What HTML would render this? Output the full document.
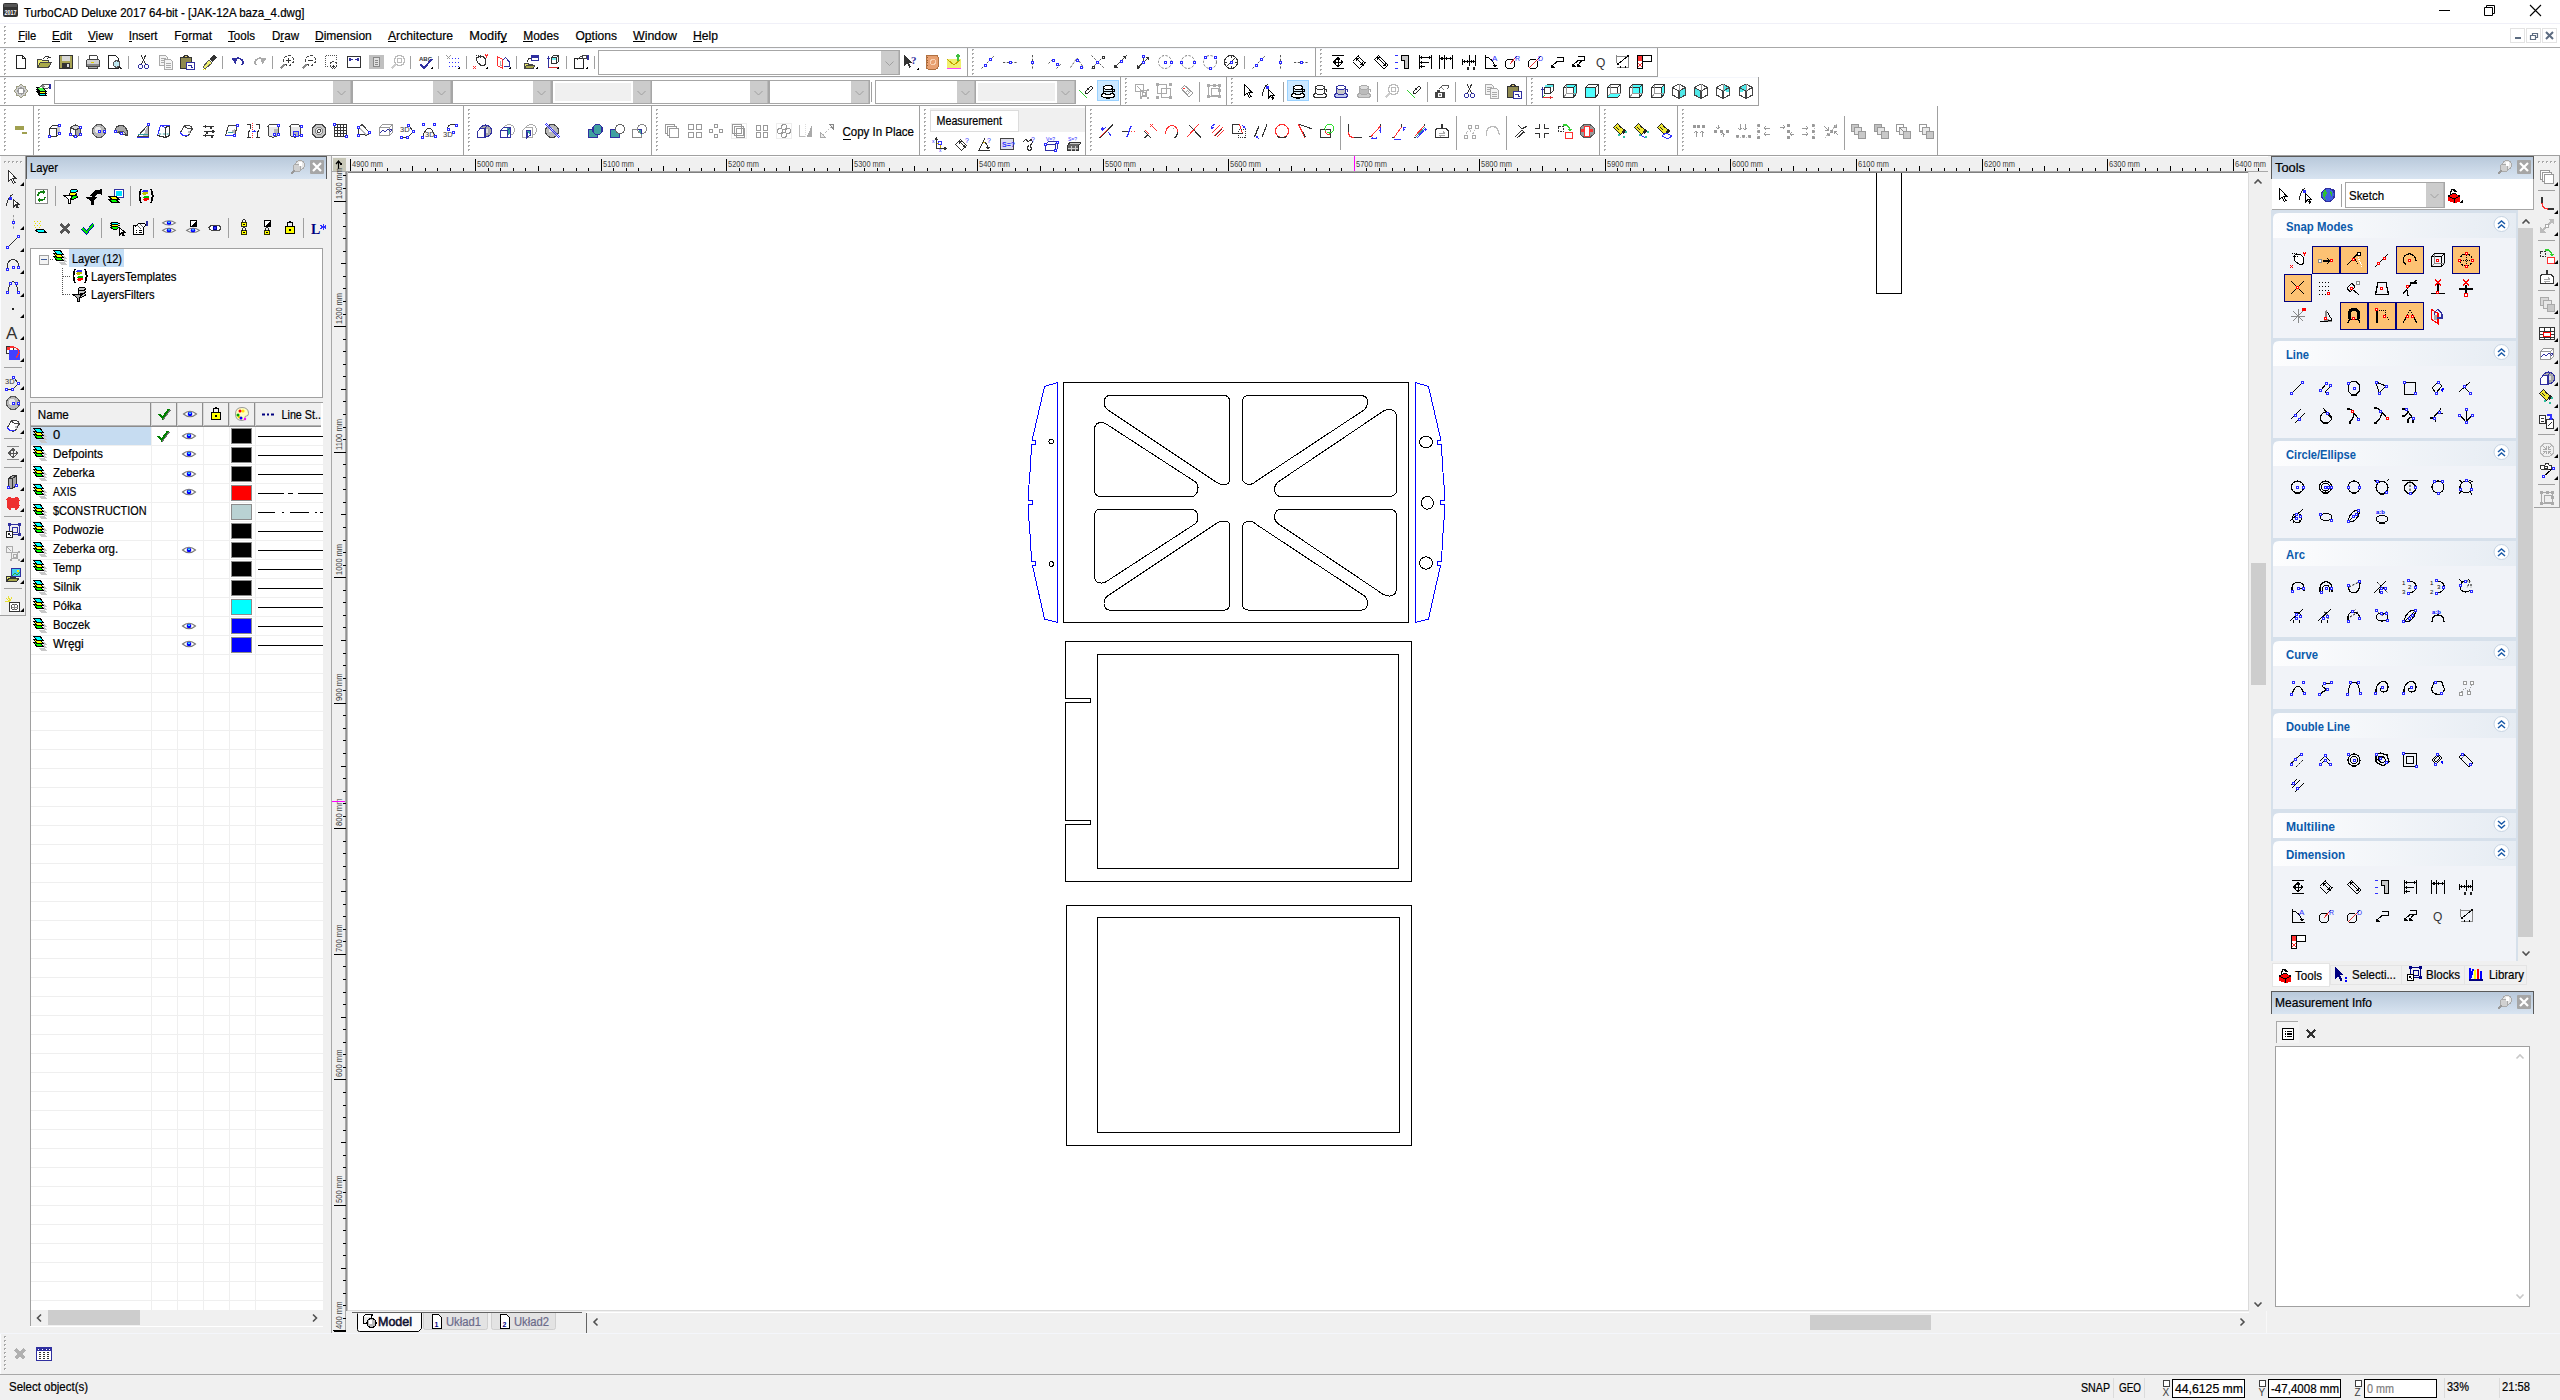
<!DOCTYPE html>
<html><head><meta charset="utf-8"><title>TurboCAD</title>
<style>html,body{margin:0;padding:0;background:#f0f0f0;overflow:hidden}
#app{position:absolute;left:0;top:0;width:2560px;height:1400px;overflow:hidden}
svg text{white-space:pre}</style></head>
<body><div id="app"><svg width="2560" height="1400" viewBox="0 0 2560 1400">
<rect x="0" y="0" width="2560" height="1400" fill="#f0f0f0" />
<rect x="0" y="0" width="2560" height="156" fill="#ffffff" />
<rect x="3" y="3" width="15" height="14" rx="2" fill="#333"/>
<rect x="4" y="4" width="13" height="3" fill="#555"/>
<text x="4.5" y="14.5" font-family="Liberation Sans" font-size="6.5" fill="#fff" font-weight="bold" textLength="12" lengthAdjust="spacingAndGlyphs" >2017</text>
<text x="24" y="16.5" font-family="Liberation Sans" font-size="13" fill="#000" stroke="#000" stroke-width="0.22" textLength="280.5" lengthAdjust="spacingAndGlyphs" >TurboCAD Deluxe 2017 64-bit - [JAK-12A baza_4.dwg]</text>
<rect x="2439" y="10" width="11" height="1" fill="#000" />
<path d="M2484.5 7.5h8v8h-8z M2486.5 7.5v-2h8v8h-2" fill="none" stroke="#000" stroke-width="1"/>
<path d="M2530 5L2541 16M2541 5L2530 16" stroke="#000" stroke-width="1.1"/>
<rect x="0" y="23" width="2560" height="1" fill="#f0f0f8" />
<rect x="4" y="26" width="2" height="2" fill="#a8a8a8"/><rect x="5" y="27" width="1" height="1" fill="#ffffff"/><rect x="4" y="30" width="2" height="2" fill="#a8a8a8"/><rect x="5" y="31" width="1" height="1" fill="#ffffff"/><rect x="4" y="34" width="2" height="2" fill="#a8a8a8"/><rect x="5" y="35" width="1" height="1" fill="#ffffff"/><rect x="4" y="38" width="2" height="2" fill="#a8a8a8"/><rect x="5" y="39" width="1" height="1" fill="#ffffff"/><rect x="4" y="42" width="2" height="2" fill="#a8a8a8"/><rect x="5" y="43" width="1" height="1" fill="#ffffff"/>
<text x="18.25" y="40.3" font-family="Liberation Sans" font-size="13" fill="#000" stroke="#000" stroke-width="0.22" textLength="18.0" lengthAdjust="spacingAndGlyphs" >File</text>
<rect x="18" y="41" width="7" height="1" fill="#000" />
<text x="52" y="40.3" font-family="Liberation Sans" font-size="13" fill="#000" stroke="#000" stroke-width="0.22" textLength="20" lengthAdjust="spacingAndGlyphs" >Edit</text>
<rect x="52" y="41" width="8" height="1" fill="#000" />
<text x="88" y="40.3" font-family="Liberation Sans" font-size="13" fill="#000" stroke="#000" stroke-width="0.22" textLength="25" lengthAdjust="spacingAndGlyphs" >View</text>
<rect x="88" y="41" width="8" height="1" fill="#000" />
<text x="128.75" y="40.3" font-family="Liberation Sans" font-size="13" fill="#000" stroke="#000" stroke-width="0.22" textLength="28.75" lengthAdjust="spacingAndGlyphs" >Insert</text>
<rect x="129" y="41" width="3" height="1" fill="#000" />
<text x="174.25" y="40.3" font-family="Liberation Sans" font-size="13" fill="#000" stroke="#000" stroke-width="0.22" textLength="37.75" lengthAdjust="spacingAndGlyphs" >Format</text>
<rect x="182" y="41" width="6" height="1" fill="#000" />
<text x="228" y="40.3" font-family="Liberation Sans" font-size="13" fill="#000" stroke="#000" stroke-width="0.22" textLength="27" lengthAdjust="spacingAndGlyphs" >Tools</text>
<rect x="228" y="41" width="7" height="1" fill="#000" />
<text x="272" y="40.3" font-family="Liberation Sans" font-size="13" fill="#000" stroke="#000" stroke-width="0.22" textLength="27" lengthAdjust="spacingAndGlyphs" >Draw</text>
<rect x="280" y="41" width="4" height="1" fill="#000" />
<text x="315" y="40.3" font-family="Liberation Sans" font-size="13" fill="#000" stroke="#000" stroke-width="0.22" textLength="56.75" lengthAdjust="spacingAndGlyphs" >Dimension</text>
<rect x="315" y="41" width="9" height="1" fill="#000" />
<text x="388" y="40.3" font-family="Liberation Sans" font-size="13" fill="#000" stroke="#000" stroke-width="0.22" textLength="65" lengthAdjust="spacingAndGlyphs" >Architecture</text>
<rect x="388" y="41" width="8" height="1" fill="#000" />
<text x="469.25" y="40.3" font-family="Liberation Sans" font-size="13" fill="#000" stroke="#000" stroke-width="0.22" textLength="37.75" lengthAdjust="spacingAndGlyphs" >Modify</text>
<rect x="501" y="41" width="6" height="1" fill="#000" />
<text x="523.25" y="40.3" font-family="Liberation Sans" font-size="13" fill="#000" stroke="#000" stroke-width="0.22" textLength="35.75" lengthAdjust="spacingAndGlyphs" >Modes</text>
<rect x="523" y="41" width="10" height="1" fill="#000" />
<text x="575.5" y="40.3" font-family="Liberation Sans" font-size="13" fill="#000" stroke="#000" stroke-width="0.22" textLength="41.5" lengthAdjust="spacingAndGlyphs" >Options</text>
<rect x="585" y="41" width="7" height="1" fill="#000" />
<text x="633" y="40.3" font-family="Liberation Sans" font-size="13" fill="#000" stroke="#000" stroke-width="0.22" textLength="44" lengthAdjust="spacingAndGlyphs" >Window</text>
<rect x="633" y="41" width="12" height="1" fill="#000" />
<text x="693" y="40.3" font-family="Liberation Sans" font-size="13" fill="#000" stroke="#000" stroke-width="0.22" textLength="25" lengthAdjust="spacingAndGlyphs" >Help</text>
<rect x="693" y="41" width="9" height="1" fill="#000" />
<rect x="0" y="47" width="2560" height="1" fill="#a8a8a8" />
<rect x="2510.5" y="28.5" width="14" height="14" fill="#ffffff" stroke="#e3e3e3" stroke-width="1" />
<rect x="2515" y="37" width="6" height="2" fill="#5c6b80" />
<rect x="2526.5" y="28.5" width="14" height="14" fill="#ffffff" stroke="#e3e3e3" stroke-width="1" />
<path d="M2530.5 35.5h5v4h-5z M2532.5 35.5v-2h5v4h-2" fill="none" stroke="#5c6b80" stroke-width="1.2"/>
<rect x="2542.5" y="28.5" width="14" height="14" fill="#ffffff" stroke="#e3e3e3" stroke-width="1" />
<path d="M2546 32L2553 39M2553 32L2546 39" stroke="#5c6b80" stroke-width="2"/>
<rect x="0" y="48" width="967" height="1" fill="#f4f6fb" />
<rect x="967" y="48" width="1" height="29" fill="#a0a0a0" />
<rect x="0" y="76" width="968" height="1" fill="#a0a0a0" />
<rect x="4" y="49" width="2" height="2" fill="#a8a8a8"/><rect x="5" y="50" width="1" height="1" fill="#ffffff"/><rect x="4" y="53" width="2" height="2" fill="#a8a8a8"/><rect x="5" y="54" width="1" height="1" fill="#ffffff"/><rect x="4" y="57" width="2" height="2" fill="#a8a8a8"/><rect x="5" y="58" width="1" height="1" fill="#ffffff"/><rect x="4" y="61" width="2" height="2" fill="#a8a8a8"/><rect x="5" y="62" width="1" height="1" fill="#ffffff"/><rect x="4" y="65" width="2" height="2" fill="#a8a8a8"/><rect x="5" y="66" width="1" height="1" fill="#ffffff"/><rect x="4" y="69" width="2" height="2" fill="#a8a8a8"/><rect x="5" y="70" width="1" height="1" fill="#ffffff"/><rect x="4" y="73" width="2" height="2" fill="#a8a8a8"/><rect x="5" y="74" width="1" height="1" fill="#ffffff"/>
<rect x="968" y="48" width="347" height="1" fill="#f4f6fb" />
<rect x="1315" y="48" width="1" height="29" fill="#a0a0a0" />
<rect x="968" y="76" width="348" height="1" fill="#a0a0a0" />
<rect x="972" y="49" width="2" height="2" fill="#a8a8a8"/><rect x="973" y="50" width="1" height="1" fill="#ffffff"/><rect x="972" y="53" width="2" height="2" fill="#a8a8a8"/><rect x="973" y="54" width="1" height="1" fill="#ffffff"/><rect x="972" y="57" width="2" height="2" fill="#a8a8a8"/><rect x="973" y="58" width="1" height="1" fill="#ffffff"/><rect x="972" y="61" width="2" height="2" fill="#a8a8a8"/><rect x="973" y="62" width="1" height="1" fill="#ffffff"/><rect x="972" y="65" width="2" height="2" fill="#a8a8a8"/><rect x="973" y="66" width="1" height="1" fill="#ffffff"/><rect x="972" y="69" width="2" height="2" fill="#a8a8a8"/><rect x="973" y="70" width="1" height="1" fill="#ffffff"/><rect x="972" y="73" width="2" height="2" fill="#a8a8a8"/><rect x="973" y="74" width="1" height="1" fill="#ffffff"/>
<rect x="1316" y="48" width="341" height="1" fill="#f4f6fb" />
<rect x="1657" y="48" width="1" height="29" fill="#a0a0a0" />
<rect x="1316" y="76" width="342" height="1" fill="#a0a0a0" />
<rect x="1320" y="49" width="2" height="2" fill="#a8a8a8"/><rect x="1321" y="50" width="1" height="1" fill="#ffffff"/><rect x="1320" y="53" width="2" height="2" fill="#a8a8a8"/><rect x="1321" y="54" width="1" height="1" fill="#ffffff"/><rect x="1320" y="57" width="2" height="2" fill="#a8a8a8"/><rect x="1321" y="58" width="1" height="1" fill="#ffffff"/><rect x="1320" y="61" width="2" height="2" fill="#a8a8a8"/><rect x="1321" y="62" width="1" height="1" fill="#ffffff"/><rect x="1320" y="65" width="2" height="2" fill="#a8a8a8"/><rect x="1321" y="66" width="1" height="1" fill="#ffffff"/><rect x="1320" y="69" width="2" height="2" fill="#a8a8a8"/><rect x="1321" y="70" width="1" height="1" fill="#ffffff"/><rect x="1320" y="73" width="2" height="2" fill="#a8a8a8"/><rect x="1321" y="74" width="1" height="1" fill="#ffffff"/>
<rect x="78" y="56" width="1" height="13" fill="#a0a0a0" />
<rect x="128" y="56" width="1" height="13" fill="#a0a0a0" />
<rect x="222" y="56" width="1" height="13" fill="#a0a0a0" />
<rect x="272" y="56" width="1" height="13" fill="#a0a0a0" />
<rect x="410" y="56" width="1" height="13" fill="#a0a0a0" />
<rect x="438" y="56" width="1" height="13" fill="#a0a0a0" />
<rect x="466" y="56" width="1" height="13" fill="#a0a0a0" />
<rect x="516" y="56" width="1" height="13" fill="#a0a0a0" />
<rect x="566" y="56" width="1" height="13" fill="#a0a0a0" />
<rect x="594" y="56" width="1" height="13" fill="#a0a0a0" />
<g transform="translate(13,54)" shape-rendering="crispEdges"><path d="M3.5 1.5H9.5L12.5 4.5V14.5H3.5Z M9.5 1.5V4.5H12.5" fill="#fff" stroke="#222" stroke-width="1" /></g>
<g transform="translate(36,54)" shape-rendering="crispEdges"><path d="M1.5 13.5V5.5H5.5L6.5 6.5H12.5V8" fill="#e8e870" stroke="#444" stroke-width="1" /><path d="M1.5 13.5L4.5 8.5H15.5L12.5 13.5Z" fill="#a8a848" stroke="#444" stroke-width="1" /><path d="M7 5Q9 1.5 13 3" fill="none" stroke="#333" stroke-width="1" /><path d="M12 1.5L14.5 3.5 11.5 4.5Z" fill="#333"/></g>
<g transform="translate(58,54)" shape-rendering="crispEdges"><rect x="1.5" y="1.5" width="13" height="13" fill="#a9a554" stroke="#333" stroke-width="1"/><rect x="4" y="2" width="8" height="5" fill="#d8d8d8"/><rect x="4" y="9" width="8" height="5" fill="#333"/><rect x="9" y="10" width="2" height="3" fill="#ddd"/></g>
<g transform="translate(85,54)" shape-rendering="crispEdges"><path d="M4.5 6.5V1.5H11.5L12.5 2.5V6.5" fill="#fff" stroke="#444" stroke-width="1" /><path d="M1.5 12.5V7.5Q1.5 5.5 3.5 5.5H12.5Q14.5 5.5 14.5 7.5V12.5Z" fill="#d0d0d0" stroke="#444" stroke-width="1" /><rect x="2" y="10" width="12" height="2" fill="#888"/><rect x="6" y="8" width="3" height="1" fill="#e0d000"/><path d="M3.5 12.5V14.5H12.5V12.5" fill="#aaa" stroke="#444" stroke-width="1" /></g>
<g transform="translate(107,54)" shape-rendering="crispEdges"><path d="M1.5 1.5H8.5L11.5 4.5V14.5H1.5Z" fill="#fff" stroke="#222" stroke-width="1" /><circle cx="9.5" cy="10" r="3.2" fill="#bfe8f0" stroke="#555" stroke-width="1.2" /><path d="M11.8 12.3L14.5 15" fill="none" stroke="#222" stroke-width="2" /></g>
<g transform="translate(136,54)" shape-rendering="crispEdges"><circle cx="4.5" cy="12.5" r="2" fill="none" stroke="#3030a0" stroke-width="1" /><circle cx="10.5" cy="12.5" r="2" fill="none" stroke="#3030a0" stroke-width="1" /><path d="M5.5 10.5L9.5 1.5M9.5 10.5L5.5 1.5" fill="none" stroke="#333" stroke-width="1" /></g>
<g transform="translate(158,54)" shape-rendering="crispEdges"><path d="M1.5 1.5H7.5L9.5 3.5V11.5H1.5Z M2.5 4.5H7.5M2.5 6.5H7.5M2.5 8.5H7.5" fill="#f4f4f4" stroke="#aaa" stroke-width="1" /><path d="M6.5 5.5H12.5L14.5 7.5V15.5H6.5Z M8 9.5H13M8 11.5H13M8 13.5H13" fill="#f4f4f4" stroke="#aaa" stroke-width="1" /></g>
<g transform="translate(179,54)" shape-rendering="crispEdges"><path d="M1.5 3.5H12.5V14.5H1.5Z" fill="#8f8a50" stroke="#333" stroke-width="1" /><path d="M4.5 3.5L5.5 1.5H8.5L9.5 3.5Z" fill="#e8d070" stroke="#333" stroke-width="1" /><path d="M7.5 8.5H15.5V15.5H7.5Z" fill="#fff" stroke="#3030a0" stroke-width="1" /><path d="M9 11.5H12.5V13.5H14" fill="none" stroke="#3030a0" stroke-width="1" /></g>
<g transform="translate(201,54)" shape-rendering="crispEdges"><path d="M2 13L8 6L11 9L4 15Z" fill="#f0f070" stroke="#555" stroke-width="1" /><path d="M9 6L13 2L14.5 3.5L10.5 7.5" fill="#3030a0" stroke="#333" stroke-width="1.5" /><path d="M1.5 15.5H5" fill="none" stroke="#e0e000" stroke-width="1" stroke-dasharray="1 1"/></g>
<g transform="translate(230,54)" shape-rendering="crispEdges"><path d="M4 5.5Q9 2.5 12.5 6.5Q14 9.5 11.5 11" fill="none" stroke="#3030a0" stroke-width="1.6" /><path d="M1.5 4L5.5 10.5L7.5 4.5Z" fill="#3030a0"/></g>
<g transform="translate(252,54)" shape-rendering="crispEdges"><path d="M12 5.5Q7 2.5 3.5 6.5Q2 9.5 4.5 11" fill="none" stroke="#aaa" stroke-width="1.6" /><path d="M14.5 4L10.5 10.5L8.5 4.5Z" fill="#aaa"/></g>
<g transform="translate(279,54)" shape-rendering="crispEdges"><circle cx="9.5" cy="6.5" r="5" fill="none" stroke="#444" stroke-width="1" stroke-dasharray="3 1.5"/><path d="M5.5 10.5L1.5 14.5" fill="none" stroke="#888" stroke-width="2.5" /><path d="M7 6.5H12M9.5 4V9" fill="none" stroke="#333" stroke-width="1" /></g>
<g transform="translate(301,54)" shape-rendering="crispEdges"><circle cx="9.5" cy="6.5" r="5" fill="none" stroke="#444" stroke-width="1" stroke-dasharray="3 1.5"/><path d="M5.5 10.5L1.5 14.5" fill="none" stroke="#888" stroke-width="2.5" /><path d="M7 6.5H12" fill="none" stroke="#333" stroke-width="1" /></g>
<g transform="translate(324,54)" shape-rendering="crispEdges"><path d="M1.5 1.5H12.5V6M1.5 1.5V12.5H5" fill="none" stroke="#555" stroke-width="1" stroke-dasharray="1 1"/><circle cx="9.5" cy="11" r="3.5" fill="none" stroke="#444" stroke-width="1" stroke-dasharray="2 1"/><path d="M8 12H11M9.5 10.5V13.5" fill="none" stroke="#333" stroke-width="1" /></g>
<g transform="translate(346,54)" shape-rendering="crispEdges"><rect x="1.5" y="2.5" width="13" height="11" fill="#fff" stroke="#333" stroke-width="1"/><path d="M3 5.5H7M3 5.5L5 4M3 5.5L5 7 M13 5.5H9M13 5.5L11 4M13 5.5L11 7" fill="none" stroke="#3030a0" stroke-width="1.3" /></g>
<g transform="translate(368,54)" shape-rendering="crispEdges"><rect x="1" y="1" width="15" height="14" fill="#c0c0c0"/><rect x="5.5" y="3.5" width="6" height="9" fill="#e0e0e0" stroke="#888" stroke-width="1"/><path d="M7 6.5H10M7 8.5H10M7 10.5H10" fill="none" stroke="#888" stroke-width="1" /></g>
<g transform="translate(390,54)" shape-rendering="crispEdges"><circle cx="9.5" cy="6.5" r="5" fill="none" stroke="#bbb" stroke-width="1.4" /><rect x="7.5" y="4.5" width="4" height="4" fill="none" stroke="#bbb" stroke-width="1"/><path d="M5.5 10.5L1.5 14.5" fill="none" stroke="#ccc" stroke-width="2.5" /></g>
<g transform="translate(418,54)" shape-rendering="crispEdges"><text x="1" y="7" font-family="Liberation Sans" font-size="6" font-weight="bold" fill="#333">ABC</text><path d="M2.5 10.5L6 14L14 5" fill="none" stroke="#3030a0" stroke-width="2" /><path d="M15 12v3h-3z" fill="#000"/></g>
<g transform="translate(445,54)" shape-rendering="crispEdges"><path d="M1.5 1.5L5.5 5.5M5.5 1.5L1.5 5.5" fill="none" stroke="#999" stroke-width="1" /><path d="M7 4h1v1h-1zM10 4h1v1h-1zM13 4h1v1h-1zM4 8h1v1h-1zM7 8h1v1h-1zM10 8h1v1h-1zM13 8h1v1h-1zM4 12h1v1h-1zM7 12h1v1h-1zM10 12h1v1h-1zM13 12h1v1h-1z" fill="#3333ff"/><path d="M15 12v3h-3z" fill="#000"/></g>
<g transform="translate(473,54)" shape-rendering="crispEdges"><path d="M4 4L7 2Q12 2 13 7Q13 12 9 12L5 9Q3 6 4 4Z" fill="#fff" stroke="#333" stroke-width="1" /><path d="M3 3Q6 5 8 3M3 1.5H8" fill="none" stroke="#333" stroke-width="1" stroke-dasharray="1 1"/><path d="M0 12L3 15M3 12L0 15" fill="none" stroke="#ff3030" stroke-width="1.2" /><path d="M12 0L13.5 2L15 0M13.5 2V4" fill="none" stroke="#ff3030" stroke-width="1.2" /><path d="M15 12v3h-3z" fill="#000"/></g>
<g transform="translate(496,54)" shape-rendering="crispEdges"><path d="M1.5 2.5L6.5 5.5V14.5L1.5 11.5Z" fill="none" stroke="#ff3030" stroke-width="1" /><path d="M6.5 6.5L9.5 3.5L13.5 8V12.5H8" fill="none" stroke="#3030a0" stroke-width="1" /><path d="M4 7V11L6 12" fill="none" stroke="#aaa" stroke-width="1" /><path d="M15 12v3h-3z" fill="#000"/></g>
<g transform="translate(523,54)" shape-rendering="crispEdges"><path d="M1.5 14.5V9.5H5L6 10.5H10" fill="#e8e870" stroke="#444" stroke-width="1" /><path d="M1.5 14.5L3.5 11H12L10 14.5Z" fill="#a8a848" stroke="#444" stroke-width="1" /><rect x="8.5" y="1.5" width="7" height="5" fill="#fff" stroke="#3030a0" stroke-width="1"/><rect x="9" y="2" width="6" height="1.5" fill="#3030a0"/><path d="M4 8Q5 4 8 4" fill="none" stroke="#333" stroke-width="1" /><path d="M15 12v3h-3z" fill="#000"/></g>
<g transform="translate(544,54)" shape-rendering="crispEdges"><path d="M4.5 3.5V13.5H13" fill="none" stroke="#3030a0" stroke-width="1" /><path d="M4.5 13.5H13.5" fill="none" stroke="#e03030" stroke-width="1" /><path d="M3 5L4.5 2L6 5Z" fill="#3030a0"/><path d="M7.5 3.5L9.5 1.5H14.5V7.5L12.5 9.5H7.5ZM7.5 3.5H12.5V9.5M12.5 3.5L14.5 1.5" fill="#fff" stroke="#333" stroke-width="1" /><rect x="8" y="4" width="4" height="2" fill="#70f0f0"/><path d="M15 12v3h-3z" fill="#000"/></g>
<g transform="translate(573,54)" shape-rendering="crispEdges"><path d="M1.5 4.5H10.5V14.5H1.5Z" fill="#fff" stroke="#222" stroke-width="1" /><path d="M4 6L8 2L11 5" fill="none" stroke="#444" stroke-width="1" /><rect x="9.5" y="1.5" width="4" height="3" fill="#fff" stroke="#444" stroke-width="1"/><rect x="14" y="1" width="1.5" height="5" fill="#3030a0"/><path d="M15 12v3h-3z" fill="#000"/></g>
<rect x="598.5" y="50.5" width="301" height="24" fill="#ffffff" stroke="#a6a6a6" stroke-width="1" />
<rect x="881" y="51" width="18" height="23" fill="#cccccc" />
<rect x="898" y="51" width="1" height="23" fill="#b8b8b8" />
<path d="M885.5 61.5 L889.5 65.5 L893.5 61.5" fill="none" stroke="#a0a0a0" stroke-width="1"/>
<g transform="translate(903,54)" shape-rendering="crispEdges"><path d="M1 1L1 12L4 9L6.5 14L8 13L5.5 8.5H9.5Z" fill="#333"/><text x="8" y="10" font-family="Liberation Serif" font-size="11" font-weight="bold" fill="#3030a0">?</text><path d="M16 13v3h-3z" fill="#000"/></g>
<g transform="translate(924,54)" shape-rendering="crispEdges"><rect x="2" y="1" width="12" height="14" rx="2" fill="#e8a070" stroke="#b07040"/><path d="M3.5 3V13" fill="none" stroke="#a06030" stroke-width="1" stroke-dasharray="1 1.5"/><circle cx="9" cy="8" r="2.5" fill="none" stroke="#f8d0b0" stroke-width="1" /></g>
<g transform="translate(946,54)" shape-rendering="crispEdges"><rect x="1" y="5" width="14" height="9" fill="#f0f070"/><path d="M1.5 5.5L8 11L14.5 5.5" fill="none" stroke="#c0a000" stroke-width="1" /><path d="M1 14.5H15" fill="none" stroke="#ff40ff" stroke-width="1" /><path d="M12 1V7M10 3L12 1L14 3" fill="none" stroke="#40c040" stroke-width="1.5" /></g>
<g transform="translate(980,54)" shape-rendering="crispEdges"><path d="M1.5 14.5L14.5 1.5" fill="none" stroke="#555" stroke-width="1" stroke-dasharray="2.2 1.6" shape-rendering="geometricPrecision"/><rect x="4.5" y="10.5" width="2" height="2" fill="#fff" stroke="#2828ff"/><rect x="9.5" y="4.5" width="2" height="2" fill="#fff" stroke="#2828ff"/></g>
<g transform="translate(1002,54)" shape-rendering="crispEdges"><path d="M1 8.5H15" fill="none" stroke="#555" stroke-width="1" stroke-dasharray="2.2 1.6" shape-rendering="geometricPrecision"/><rect x="7.5" y="7.5" width="2" height="2" fill="#fff" stroke="#2828ff"/></g>
<g transform="translate(1024,54)" shape-rendering="crispEdges"><path d="M8.5 1V15" fill="none" stroke="#555" stroke-width="1" stroke-dasharray="2.2 1.6" shape-rendering="geometricPrecision"/><rect x="7.5" y="7.5" width="2" height="2" fill="#fff" stroke="#2828ff"/></g>
<g transform="translate(1047,54)" shape-rendering="crispEdges"><path d="M1.5 9.5L6.5 4.5M9.5 14.5L14.5 9.5" fill="none" stroke="#555" stroke-width="1" stroke-dasharray="2.2 1.6" shape-rendering="geometricPrecision"/><rect x="5.5" y="5.5" width="2" height="2" fill="#fff" stroke="#2828ff"/><rect x="9.5" y="9.5" width="2" height="2" fill="#fff" stroke="#2828ff"/></g>
<g transform="translate(1069,54)" shape-rendering="crispEdges"><path d="M1.5 13.5L8 4L14.5 13.5" fill="none" stroke="#555" stroke-width="1" stroke-dasharray="2.2 1.6" shape-rendering="geometricPrecision"/><rect x="7.5" y="5.5" width="2" height="2" fill="#fff" stroke="#2828ff"/><rect x="11.5" y="12.5" width="2" height="2" fill="#fff" stroke="#2828ff"/></g>
<g transform="translate(1090,54)" shape-rendering="crispEdges"><path d="M1.5 1.5L14.5 14.5M1.5 14.5L14.5 1.5" fill="none" stroke="#555" stroke-width="1" stroke-dasharray="2.2 1.6" shape-rendering="geometricPrecision"/><rect x="6.5" y="7.5" width="2" height="2" fill="#fff" stroke="#2828ff"/><rect x="12.5" y="2.5" width="2" height="2" fill="#fff" stroke="#333"/><rect x="2.5" y="12.5" width="2" height="2" fill="#fff" stroke="#333"/></g>
<g transform="translate(1112,54)" shape-rendering="crispEdges"><path d="M2 14L14.5 1.5" fill="none" stroke="#444" stroke-width="1" /><path d="M1.5 14.5l1-4 3 3z M14.5 1.5l-1 4-3-3z" fill="#333"/><rect x="8.5" y="6.5" width="2" height="2" fill="#fff" stroke="#2828ff"/></g>
<g transform="translate(1135,54)" shape-rendering="crispEdges"><path d="M8.5 1.5V8" fill="none" stroke="#444" stroke-width="1" /><path d="M2 14.5L14 3" fill="none" stroke="#444" stroke-width="1" /><path d="M1.5 15l1-4 3 3z M14.5 2.5l-1 4-3-3z" fill="#333"/><rect x="7.5" y="1.5" width="2" height="2" fill="#fff" stroke="#2828ff"/><rect x="7.5" y="7.5" width="2" height="2" fill="#fff" stroke="#2828ff"/></g>
<g transform="translate(1157,54)" shape-rendering="crispEdges"><circle cx="8" cy="8" r="6.5" fill="none" stroke="#777" stroke-width="1" stroke-dasharray="2.2 1.6" shape-rendering="geometricPrecision"/><rect x="7.5" y="7.5" width="2" height="2" fill="#fff" stroke="#2828ff"/><rect x="13.5" y="7.5" width="2" height="2" fill="#fff" stroke="#2828ff"/></g>
<g transform="translate(1180,54)" shape-rendering="crispEdges"><circle cx="8" cy="8" r="6.5" fill="none" stroke="#777" stroke-width="1" stroke-dasharray="2.2 1.6" shape-rendering="geometricPrecision"/><rect x="0.5" y="7.5" width="2" height="2" fill="#fff" stroke="#2828ff"/><rect x="13.5" y="7.5" width="2" height="2" fill="#fff" stroke="#2828ff"/></g>
<g transform="translate(1202,54)" shape-rendering="crispEdges"><circle cx="8" cy="8" r="6.5" fill="none" stroke="#777" stroke-width="1" stroke-dasharray="2.2 1.6" shape-rendering="geometricPrecision"/><rect x="2.5" y="2.5" width="2" height="2" fill="#fff" stroke="#2828ff"/><rect x="12.5" y="2.5" width="2" height="2" fill="#fff" stroke="#2828ff"/><rect x="7.5" y="13.5" width="2" height="2" fill="#fff" stroke="#2828ff"/></g>
<g transform="translate(1223,54)" shape-rendering="crispEdges"><circle cx="8" cy="8" r="6.5" fill="none" stroke="#333" stroke-width="1.3" /><path d="M3 13L13 3 M8 1V4M8 12V15M1 8H4M12 8H15" fill="none" stroke="#333" stroke-width="1" /><rect x="7.5" y="7.5" width="2" height="2" fill="#fff" stroke="#2828ff"/></g>
<rect x="1244" y="56" width="1" height="13" fill="#a0a0a0" />
<g transform="translate(1251,54)" shape-rendering="crispEdges"><path d="M1.5 14.5L14.5 1.5" fill="none" stroke="#555" stroke-width="1" stroke-dasharray="2.2 1.6" shape-rendering="geometricPrecision"/><rect x="4.5" y="10.5" width="2" height="2" fill="#fff" stroke="#2828ff"/><rect x="9.5" y="4.5" width="2" height="2" fill="#fff" stroke="#2828ff"/></g>
<g transform="translate(1272,54)" shape-rendering="crispEdges"><path d="M8.5 1V15" fill="none" stroke="#555" stroke-width="1" stroke-dasharray="2.2 1.6" shape-rendering="geometricPrecision"/><rect x="7.5" y="7.5" width="2" height="2" fill="#fff" stroke="#2828ff"/></g>
<g transform="translate(1293,54)" shape-rendering="crispEdges"><path d="M1 8.5H15" fill="none" stroke="#555" stroke-width="1" stroke-dasharray="2.2 1.6" shape-rendering="geometricPrecision"/><rect x="7.5" y="7.5" width="2" height="2" fill="#fff" stroke="#2828ff"/></g>
<g transform="translate(1330,54)" shape-rendering="crispEdges"><path d="M2 1.5H14M2 14.5H14" fill="none" stroke="#000" stroke-width="1" /><path d="M8 3V13M3 8H13" fill="none" stroke="#000" stroke-width="1" /><path d="M8 2.5l-2.5 3h5zM8 13.5l-2.5-3h5zM2.5 8l3-2.5v5zM13.5 8l-3-2.5v5z" fill="#000"/></g>
<g transform="translate(1351,54)" shape-rendering="crispEdges"><path d="M1.5 7.5L7.5 1.5M8.5 14.5L14.5 8.5M2 8L9 15M7 2L14 9" fill="none" stroke="#000" stroke-width="1" /><path d="M5 4L12 11" fill="none" stroke="#000" stroke-width="1" /><path d="M4.5 3.5l3.5 1-2.5 2.5zM12.5 11.5l-3.5-1 2.5-2.5z" fill="#000"/></g>
<g transform="translate(1373,54)" shape-rendering="crispEdges"><path d="M1.5 5.5L5.5 1.5L15 11L11 15Z" fill="none" stroke="#000" stroke-width="1" /><path d="M4 3L13 12" fill="none" stroke="#000" stroke-width="1" /><path d="M3.5 2.5l3.5 1-2.5 2.5zM13.5 12.5l-3.5-1 2.5-2.5z" fill="#000"/></g>
<g transform="translate(1394,54)" shape-rendering="crispEdges"><path d="M1 1.5H4M1 8.5H4M1 14.5H4" fill="none" stroke="#3030ff" stroke-width="1" /><path d="M7.5 1.5H14.5V14.5H10.5V6.5H7.5Z" fill="#c8c8c8" stroke="#000" stroke-width="1.5" /></g>
<g transform="translate(1417,54)" shape-rendering="crispEdges"><path d="M2.5 1V15M14.5 1V15M3 3.5H14M3 8.5H12M3 12.5H8" fill="none" stroke="#000" stroke-width="1" /><path d="M3 3.5l2-1.5v3zM14 3.5l-2-1.5v3zM3 8.5l2-1.5v3zM3 12.5l2-1.5v3z" fill="#000"/></g>
<g transform="translate(1438,54)" shape-rendering="crispEdges"><path d="M1.5 1V15M6.5 1V15M14.5 1V15M2 4.5H14" fill="none" stroke="#000" stroke-width="1" /><path d="M2 4.5l2-1.5v3zM6 4.5l-2-1.5v3zM7 4.5l2-1.5v3zM14 4.5l-2-1.5v3z" fill="#000"/></g>
<g transform="translate(1461,54)" shape-rendering="crispEdges"><path d="M1.5 5V11M8.5 1V12M14.5 1V12M2 7.5H14" fill="none" stroke="#000" stroke-width="1" /><path d="M2 7.5l2-1.5v3zM8 7.5l-2-1.5v3zM9 7.5l2-1.5v3zM14 7.5l-2-1.5v3z" fill="#000"/><rect x="6" y="13" width="2" height="3" fill="#222"/><rect x="12" y="13" width="2" height="3" fill="#222"/></g>
<g transform="translate(1483,54)" shape-rendering="crispEdges"><path d="M2.5 1V14.5H15" fill="none" stroke="#000" stroke-width="1" /><path d="M2.5 3Q10 4 12 13" fill="none" stroke="#000" stroke-width="1" /><path d="M12 14l-2-3h4z" fill="#000"/><text x="9" y="7" font-family="Liberation Sans" font-size="8" fill="#3030ff">A</text></g>
<g transform="translate(1504,54)" shape-rendering="crispEdges"><circle cx="6" cy="10" r="5" fill="none" stroke="#000" stroke-width="1" /><path d="M6 10L12 3" fill="none" stroke="#e03030" stroke-width="1" /><path d="M13 2l-3 1 2 2z" fill="#000"/><text x="11" y="7" font-family="Liberation Sans" font-size="7" fill="#3030ff">R</text></g>
<g transform="translate(1527,54)" shape-rendering="crispEdges"><circle cx="6" cy="10" r="5" fill="none" stroke="#000" stroke-width="1" /><path d="M2 14L11 5" fill="none" stroke="#e03030" stroke-width="1" /><path d="M11 5L14 2" fill="none" stroke="#000" stroke-width="1" /><text x="11" y="7" font-family="Liberation Sans" font-size="7" fill="#3030ff">D</text></g>
<g transform="translate(1549,54)" shape-rendering="crispEdges"><path d="M7.5 3.5H14.5V7.5H8L2 13" fill="none" stroke="#000" stroke-width="1" /><path d="M1.5 14.5l1-4 3 3z" fill="#000"/><path d="M2 14L4 12" fill="none" stroke="#000" stroke-width="1" /></g>
<g transform="translate(1570,54)" shape-rendering="crispEdges"><path d="M7.5 2.5H14.5V6.5H8M8 6.5L2 12M12 6.5L7 12" fill="none" stroke="#000" stroke-width="1" /><path d="M1.5 13.5l1-4 3 3zM6.5 13.5l1-4 3 3z" fill="#000"/></g>
<g transform="translate(1593,54)" shape-rendering="crispEdges"><text x="3" y="13" font-family="Liberation Sans" font-size="12" fill="#333">Q</text></g>
<g transform="translate(1614,54)" shape-rendering="crispEdges"><path d="M2.5 1V9M14.5 3V14M3 2H14M3 13H14" fill="none" stroke="#888" stroke-width="1" /><path d="M4 10L14 2" fill="none" stroke="#000" stroke-width="1" /><path d="M3 9h2v2h-2zM13 1h2v2h-2z M5 13l2-1.5v3zM13 13l-2-1.5v3z" fill="#000"/></g>
<g transform="translate(1636,54)" shape-rendering="crispEdges"><rect x="1.5" y="1.5" width="5" height="13" fill="#fff" stroke="#000" stroke-width="1"/><rect x="2" y="2" width="4" height="5" fill="#ff3030"/><path d="M2 9L6 13M6 9L2 13" fill="none" stroke="#ff3030" stroke-width="1" /><rect x="6.5" y="1.5" width="9" height="6" fill="#fff" stroke="#000" stroke-width="1"/></g>
<rect x="0" y="77" width="1120" height="1" fill="#f4f6fb" />
<rect x="1120" y="77" width="1" height="29" fill="#a0a0a0" />
<rect x="0" y="105" width="1121" height="1" fill="#a0a0a0" />
<rect x="4" y="78" width="2" height="2" fill="#a8a8a8"/><rect x="5" y="79" width="1" height="1" fill="#ffffff"/><rect x="4" y="82" width="2" height="2" fill="#a8a8a8"/><rect x="5" y="83" width="1" height="1" fill="#ffffff"/><rect x="4" y="86" width="2" height="2" fill="#a8a8a8"/><rect x="5" y="87" width="1" height="1" fill="#ffffff"/><rect x="4" y="90" width="2" height="2" fill="#a8a8a8"/><rect x="5" y="91" width="1" height="1" fill="#ffffff"/><rect x="4" y="94" width="2" height="2" fill="#a8a8a8"/><rect x="5" y="95" width="1" height="1" fill="#ffffff"/><rect x="4" y="98" width="2" height="2" fill="#a8a8a8"/><rect x="5" y="99" width="1" height="1" fill="#ffffff"/><rect x="4" y="102" width="2" height="2" fill="#a8a8a8"/><rect x="5" y="103" width="1" height="1" fill="#ffffff"/>
<rect x="1121" y="77" width="105" height="1" fill="#f4f6fb" />
<rect x="1226" y="77" width="1" height="29" fill="#a0a0a0" />
<rect x="1121" y="105" width="106" height="1" fill="#a0a0a0" />
<rect x="1125" y="78" width="2" height="2" fill="#a8a8a8"/><rect x="1126" y="79" width="1" height="1" fill="#ffffff"/><rect x="1125" y="82" width="2" height="2" fill="#a8a8a8"/><rect x="1126" y="83" width="1" height="1" fill="#ffffff"/><rect x="1125" y="86" width="2" height="2" fill="#a8a8a8"/><rect x="1126" y="87" width="1" height="1" fill="#ffffff"/><rect x="1125" y="90" width="2" height="2" fill="#a8a8a8"/><rect x="1126" y="91" width="1" height="1" fill="#ffffff"/><rect x="1125" y="94" width="2" height="2" fill="#a8a8a8"/><rect x="1126" y="95" width="1" height="1" fill="#ffffff"/><rect x="1125" y="98" width="2" height="2" fill="#a8a8a8"/><rect x="1126" y="99" width="1" height="1" fill="#ffffff"/><rect x="1125" y="102" width="2" height="2" fill="#a8a8a8"/><rect x="1126" y="103" width="1" height="1" fill="#ffffff"/>
<rect x="1227" y="77" width="299" height="1" fill="#f4f6fb" />
<rect x="1526" y="77" width="1" height="29" fill="#a0a0a0" />
<rect x="1227" y="105" width="300" height="1" fill="#a0a0a0" />
<rect x="1231" y="78" width="2" height="2" fill="#a8a8a8"/><rect x="1232" y="79" width="1" height="1" fill="#ffffff"/><rect x="1231" y="82" width="2" height="2" fill="#a8a8a8"/><rect x="1232" y="83" width="1" height="1" fill="#ffffff"/><rect x="1231" y="86" width="2" height="2" fill="#a8a8a8"/><rect x="1232" y="87" width="1" height="1" fill="#ffffff"/><rect x="1231" y="90" width="2" height="2" fill="#a8a8a8"/><rect x="1232" y="91" width="1" height="1" fill="#ffffff"/><rect x="1231" y="94" width="2" height="2" fill="#a8a8a8"/><rect x="1232" y="95" width="1" height="1" fill="#ffffff"/><rect x="1231" y="98" width="2" height="2" fill="#a8a8a8"/><rect x="1232" y="99" width="1" height="1" fill="#ffffff"/><rect x="1231" y="102" width="2" height="2" fill="#a8a8a8"/><rect x="1232" y="103" width="1" height="1" fill="#ffffff"/>
<rect x="1527" y="77" width="231" height="1" fill="#f4f6fb" />
<rect x="1758" y="77" width="1" height="29" fill="#a0a0a0" />
<rect x="1527" y="105" width="232" height="1" fill="#a0a0a0" />
<rect x="1531" y="78" width="2" height="2" fill="#a8a8a8"/><rect x="1532" y="79" width="1" height="1" fill="#ffffff"/><rect x="1531" y="82" width="2" height="2" fill="#a8a8a8"/><rect x="1532" y="83" width="1" height="1" fill="#ffffff"/><rect x="1531" y="86" width="2" height="2" fill="#a8a8a8"/><rect x="1532" y="87" width="1" height="1" fill="#ffffff"/><rect x="1531" y="90" width="2" height="2" fill="#a8a8a8"/><rect x="1532" y="91" width="1" height="1" fill="#ffffff"/><rect x="1531" y="94" width="2" height="2" fill="#a8a8a8"/><rect x="1532" y="95" width="1" height="1" fill="#ffffff"/><rect x="1531" y="98" width="2" height="2" fill="#a8a8a8"/><rect x="1532" y="99" width="1" height="1" fill="#ffffff"/><rect x="1531" y="102" width="2" height="2" fill="#a8a8a8"/><rect x="1532" y="103" width="1" height="1" fill="#ffffff"/>
<g transform="translate(13,83)" shape-rendering="crispEdges"><path d="M15.0 8.0 L12.8 10.0 L12.9 12.9 L10.0 12.8 L8.0 15.0 L6.0 12.8 L3.1 12.9 L3.2 10.0 L1.0 8.0 L3.2 6.0 L3.1 3.1 L6.0 3.2 L8.0 1.0 L10.0 3.2 L12.9 3.1 L12.8 6.0Z" fill="#d0d0d0" stroke="#9a9a80" stroke-width="1" /><circle cx="8" cy="8" r="3" fill="#fff" stroke="#999" stroke-width="1.2" /></g>
<g transform="translate(35,83)" shape-rendering="crispEdges"><path d="M1.5 8.5H8L11.5 12.5H5Z" fill="#00ffff" stroke="#000" stroke-width="1" /><path d="M1.5 6.5H8L11.5 10.5H5Z" fill="#ffff00" stroke="#000" stroke-width="1" /><path d="M1.5 4.5H8L11.5 8.5H5Z" fill="#40ff40" stroke="#000" stroke-width="1" /><path d="M4 5L8 1H13L15 3L13 5H9" fill="#fff" stroke="#555" stroke-width="1" /><path d="M6 4L9 2M7 5L10 3" fill="none" stroke="#888" stroke-width="1" /><rect x="14" y="1" width="1.5" height="5" fill="#3030a0"/></g>
<rect x="54.5" y="80.5" width="297" height="23" fill="#ffffff" stroke="#a6a6a6" stroke-width="1" />
<rect x="333" y="81" width="18" height="22" fill="#cccccc" />
<rect x="350" y="81" width="1" height="22" fill="#b8b8b8" />
<path d="M337.5 91.0 L341.5 95.0 L345.5 91.0" fill="none" stroke="#a0a0a0" stroke-width="1"/>
<rect x="352.5" y="80.5" width="99" height="23" fill="#ffffff" stroke="#a6a6a6" stroke-width="1" />
<rect x="433" y="81" width="18" height="22" fill="#cccccc" />
<rect x="450" y="81" width="1" height="22" fill="#b8b8b8" />
<path d="M437.5 91.0 L441.5 95.0 L445.5 91.0" fill="none" stroke="#a0a0a0" stroke-width="1"/>
<rect x="452.5" y="80.5" width="99" height="23" fill="#ffffff" stroke="#a6a6a6" stroke-width="1" />
<rect x="533" y="81" width="18" height="22" fill="#cccccc" />
<rect x="550" y="81" width="1" height="22" fill="#b8b8b8" />
<path d="M537.5 91.0 L541.5 95.0 L545.5 91.0" fill="none" stroke="#a0a0a0" stroke-width="1"/>
<rect x="552.5" y="80.5" width="99" height="23" fill="#ffffff" stroke="#a6a6a6" stroke-width="1" />
<rect x="555" y="83" width="76" height="18" fill="#f0f0f0" />
<rect x="633" y="81" width="18" height="22" fill="#cccccc" />
<rect x="650" y="81" width="1" height="22" fill="#b8b8b8" />
<path d="M637.5 91.0 L641.5 95.0 L645.5 91.0" fill="none" stroke="#a0a0a0" stroke-width="1"/>
<rect x="651.5" y="80.5" width="117" height="23" fill="#ffffff" stroke="#a6a6a6" stroke-width="1" />
<rect x="750" y="81" width="18" height="22" fill="#cccccc" />
<rect x="767" y="81" width="1" height="22" fill="#b8b8b8" />
<path d="M754.5 91.0 L758.5 95.0 L762.5 91.0" fill="none" stroke="#a0a0a0" stroke-width="1"/>
<rect x="769.5" y="80.5" width="100" height="23" fill="#ffffff" stroke="#a6a6a6" stroke-width="1" />
<rect x="851" y="81" width="18" height="22" fill="#cccccc" />
<rect x="868" y="81" width="1" height="22" fill="#b8b8b8" />
<path d="M855.5 91.0 L859.5 95.0 L863.5 91.0" fill="none" stroke="#a0a0a0" stroke-width="1"/>
<rect x="871" y="82" width="1" height="20" fill="#a0a0a0" />
<rect x="875.5" y="80.5" width="100" height="23" fill="#ffffff" stroke="#a6a6a6" stroke-width="1" />
<rect x="957" y="81" width="18" height="22" fill="#cccccc" />
<rect x="974" y="81" width="1" height="22" fill="#b8b8b8" />
<path d="M961.5 91.0 L965.5 95.0 L969.5 91.0" fill="none" stroke="#a0a0a0" stroke-width="1"/>
<rect x="975.5" y="80.5" width="100" height="23" fill="#ffffff" stroke="#a6a6a6" stroke-width="1" />
<rect x="978" y="83" width="77" height="18" fill="#f0f0f0" />
<rect x="1057" y="81" width="18" height="22" fill="#cccccc" />
<rect x="1074" y="81" width="1" height="22" fill="#b8b8b8" />
<path d="M1061.5 91.0 L1065.5 95.0 L1069.5 91.0" fill="none" stroke="#a0a0a0" stroke-width="1"/>
<g transform="translate(1078,83)" shape-rendering="crispEdges"><path d="M1.5 7.5L9 15" fill="none" stroke="#30d030" stroke-width="1" /><path d="M7 9L13 3L15 5L9 11Z" fill="#fff" stroke="#222" stroke-width="1" /><path d="M9 5L11 7M8 10L7.5 11.5" fill="none" stroke="#222" stroke-width="1" /></g>
<rect x="1097.5" y="80.5" width="21" height="20" fill="#cce8ff" stroke="#99d1ff" stroke-width="1" />
<g transform="translate(1100,83)" shape-rendering="crispEdges"><ellipse cx="8" cy="12.5" rx="6.5" ry="2.5" fill="#fff" stroke="#000" stroke-width="1.3"/><path d="M3.5 4.5V9Q3.5 11.5 8 11.5Q12.5 11.5 12.5 9V4.5" fill="#d8eefc" stroke="#000" stroke-width="1.3" /><ellipse cx="8" cy="4.5" rx="4.5" ry="2" fill="#fff" stroke="#000" stroke-width="1.3"/><path d="M12.5 6Q15.5 6 14 9" fill="none" stroke="#000" stroke-width="1.3" /><path d="M3.8 8Q8 10 12.2 8" fill="none" stroke="#000" stroke-width="1" /></g>
<g transform="translate(1134,83)" shape-rendering="crispEdges"><rect x="1.5" y="1.5" width="8" height="7" fill="none" stroke="#aaa" stroke-width="1"/><path d="M3 3L7 7" fill="none" stroke="#aaa" stroke-width="1" /><rect x="6.5" y="7.5" width="6" height="6" fill="none" stroke="#aaa" stroke-width="1"/><rect x="8.5" y="9.5" width="3" height="3" fill="none" stroke="#aaa" stroke-width="1"/><rect x="6" y="14" width="2" height="2" fill="#aaa"/><rect x="13" y="6" width="2" height="2" fill="#aaa"/><rect x="13" y="14" width="2" height="2" fill="#aaa"/></g>
<g transform="translate(1156,83)" shape-rendering="crispEdges"><rect x="1.5" y="1.5" width="9" height="9" fill="none" stroke="#aaa" stroke-width="1"/><rect x="5.5" y="5.5" width="9" height="9" fill="none" stroke="#aaa" stroke-width="1"/><rect x="0" y="0" width="3" height="3" fill="#aaa"/><rect x="13" y="0" width="3" height="3" fill="#aaa"/><rect x="0" y="13" width="3" height="3" fill="#aaa"/><rect x="13" y="13" width="3" height="3" fill="#aaa"/></g>
<g transform="translate(1179,83)" shape-rendering="crispEdges"><path d="M2.5 5.5L5.5 2.5L14 10L10 14Z" fill="#fff" stroke="#999" stroke-width="1.2" /><circle cx="5" cy="5.5" r="1" fill="#ff3030" stroke="none" stroke-width="1" /><path d="M7 9L10 6M9 11L12 8M8 7L11 10" fill="none" stroke="#aaa" stroke-width="1" /></g>
<rect x="1199" y="82" width="1" height="20" fill="#a0a0a0" />
<g transform="translate(1206,83)" shape-rendering="crispEdges"><rect x="2.5" y="2.5" width="11" height="11" fill="none" stroke="#aaa" stroke-width="1"/><rect x="5.5" y="5.5" width="8" height="7" fill="none" stroke="#aaa" stroke-width="1"/><rect x="1" y="1" width="3" height="3" fill="#aaa"/><rect x="7" y="1" width="3" height="3" fill="#aaa"/><rect x="12" y="1" width="3" height="3" fill="#aaa"/><rect x="1" y="12" width="3" height="3" fill="#aaa"/><rect x="12" y="12" width="3" height="3" fill="#aaa"/><rect x="12" y="6" width="3" height="3" fill="#aaa"/></g>
<g transform="translate(1241,83)" shape-rendering="crispEdges"><path d="M3.5 1.5V12.5L6 10L8.5 14.5L10 13.5L7.5 9.5H11Z" fill="#fff" stroke="#000" stroke-width="1" /></g>
<g transform="translate(1261,83)" shape-rendering="crispEdges"><path d="M1.5 13Q2 4 7 1" fill="none" stroke="#222" stroke-width="1" /><rect x="5" y="3" width="3" height="3" fill="#3030ff"/><path d="M7.5 6.5V15L9.5 13L11.5 16L12.5 15.5L11 12.5H13.5Z" fill="#fff" stroke="#000" stroke-width="1" /></g>
<rect x="1283" y="82" width="1" height="20" fill="#a0a0a0" />
<rect x="1287.5" y="80.5" width="21" height="20" fill="#cce8ff" stroke="#99d1ff" stroke-width="1" />
<g transform="translate(1290,83)" shape-rendering="crispEdges"><ellipse cx="8" cy="12.5" rx="6.5" ry="2.5" fill="#fff" stroke="#000" stroke-width="1.3"/><path d="M3.5 4.5V9Q3.5 11.5 8 11.5Q12.5 11.5 12.5 9V4.5" fill="#d8eefc" stroke="#000" stroke-width="1.3" /><ellipse cx="8" cy="4.5" rx="4.5" ry="2" fill="#fff" stroke="#000" stroke-width="1.3"/><path d="M12.5 6Q15.5 6 14 9" fill="none" stroke="#000" stroke-width="1.3" /><path d="M3.8 8Q8 10 12.2 8" fill="none" stroke="#000" stroke-width="1" /></g>
<g transform="translate(1312,83)" shape-rendering="crispEdges"><ellipse cx="8" cy="12.5" rx="6.5" ry="2.5" fill="#fff" stroke="#333"/><path d="M3.5 4.5V9Q3.5 11.5 8 11.5Q12.5 11.5 12.5 9V4.5" fill="#fff" stroke="#333" stroke-width="1" /><ellipse cx="8" cy="4.5" rx="4.5" ry="2" fill="#fff" stroke="#333"/><path d="M12.5 6Q15.5 6 14 9" fill="none" stroke="#333" stroke-width="1" /></g>
<g transform="translate(1333,83)" shape-rendering="crispEdges"><ellipse cx="8" cy="12.5" rx="6.5" ry="2.5" fill="#c0c8f0" stroke="#3030a0"/><path d="M3.5 4.5V9Q3.5 11.5 8 11.5Q12.5 11.5 12.5 9V4.5" fill="#c8c8c8" stroke="#3030a0" stroke-width="1" /><ellipse cx="8" cy="4.5" rx="4.5" ry="2" fill="#fff" stroke="#3030a0"/><path d="M12.5 6Q15.5 6 14 9" fill="none" stroke="#3030a0" stroke-width="1" /></g>
<g transform="translate(1356,83)" shape-rendering="crispEdges"><ellipse cx="8" cy="12.5" rx="6.5" ry="2.5" fill="#ccc" stroke="#aaa"/><path d="M3.5 4.5V9Q3.5 11.5 8 11.5Q12.5 11.5 12.5 9V4.5" fill="#bbb" stroke="#aaa" stroke-width="1" /><ellipse cx="8" cy="4.5" rx="4.5" ry="2" fill="#ddd" stroke="#aaa"/><path d="M12.5 6Q15.5 6 14 9" fill="none" stroke="#aaa" stroke-width="1" /></g>
<rect x="1377" y="82" width="1" height="20" fill="#a0a0a0" />
<g transform="translate(1384,83)" shape-rendering="crispEdges"><circle cx="9.5" cy="6.5" r="5" fill="none" stroke="#bbb" stroke-width="1.4" /><rect x="7.5" y="4.5" width="4" height="4" fill="none" stroke="#bbb" stroke-width="1"/><path d="M5.5 10.5L1.5 14.5" fill="none" stroke="#ccc" stroke-width="2.5" /></g>
<g transform="translate(1406,83)" shape-rendering="crispEdges"><path d="M1.5 7.5L9 15" fill="none" stroke="#30d030" stroke-width="1" /><path d="M7 9L13 3L15 5L9 11Z" fill="#fff" stroke="#222" stroke-width="1" /><path d="M9 5L11 7M8 10L7.5 11.5" fill="none" stroke="#222" stroke-width="1" /></g>
<rect x="1427" y="82" width="1" height="20" fill="#a0a0a0" />
<g transform="translate(1434,83)" shape-rendering="crispEdges"><rect x="1" y="9" width="10" height="6" fill="#444"/><circle cx="6" cy="12" r="2" fill="#888" stroke="#fff" stroke-width="1" /><rect x="3" y="7" width="3" height="2" fill="#444"/><path d="M5 6L9 2H14L15 4L13 6" fill="#fff" stroke="#555" stroke-width="1" /><path d="M7 4L10 7" fill="none" stroke="#888" stroke-width="1" /></g>
<rect x="1455" y="82" width="1" height="20" fill="#a0a0a0" />
<g transform="translate(1462,83)" shape-rendering="crispEdges"><circle cx="4.5" cy="12.5" r="2" fill="none" stroke="#3030a0" stroke-width="1" /><circle cx="10.5" cy="12.5" r="2" fill="none" stroke="#3030a0" stroke-width="1" /><path d="M5.5 10.5L9.5 1.5M9.5 10.5L5.5 1.5" fill="none" stroke="#333" stroke-width="1" /></g>
<g transform="translate(1484,83)" shape-rendering="crispEdges"><path d="M1.5 1.5H7.5L9.5 3.5V11.5H1.5Z M2.5 4.5H7.5M2.5 6.5H7.5M2.5 8.5H7.5" fill="#f4f4f4" stroke="#aaa" stroke-width="1" /><path d="M6.5 5.5H12.5L14.5 7.5V15.5H6.5Z M8 9.5H13M8 11.5H13M8 13.5H13" fill="#f4f4f4" stroke="#aaa" stroke-width="1" /></g>
<g transform="translate(1506,83)" shape-rendering="crispEdges"><path d="M1.5 3.5H12.5V14.5H1.5Z" fill="#8f8a50" stroke="#333" stroke-width="1" /><path d="M4.5 3.5L5.5 1.5H8.5L9.5 3.5Z" fill="#e8d070" stroke="#333" stroke-width="1" /><path d="M7.5 8.5H15.5V15.5H7.5Z" fill="#fff" stroke="#3030a0" stroke-width="1" /><path d="M9 11.5H12.5V13.5H14" fill="none" stroke="#3030a0" stroke-width="1" /></g>
<g transform="translate(1539,83)" shape-rendering="crispEdges"><path d="M3.5 6V14.5H12" fill="none" stroke="#3030a0" stroke-width="1" /><path d="M3.5 14.5H12" fill="none" stroke="#e03030" stroke-width="1" /><path d="M3.5 14.5L6 12" fill="none" stroke="#30c030" stroke-width="1" /><path d="M2 7l1.5-3 1.5 3z" fill="#3030a0"/><path d="M11 13l3 1.5-3 1.5z" fill="#e03030"/><path d="M5.5 4.5L8.5 1.5H14.5V7.5L11.5 10.5H5.5ZM5.5 4.5H11.5V10.5M11.5 4.5L14.5 1.5" fill="#fff" stroke="#333" stroke-width="1" /><rect x="6" y="2" width="8" height="2" fill="#60f0f0"/></g>
<g transform="translate(1562,83)" shape-rendering="crispEdges"><path d="M2 5L5 2H14L11 5Z" fill="#50ffff"/><path d="M11 5L14 2V11L11 14Z" fill="#50ffff"/><path d="M1.5 4.5L4.5 1.5H14.5V10.5L11.5 14.5H1.5ZM1.5 4.5H11.5V14.5M11.5 4.5L14.5 1.5" fill="none" stroke="#333" stroke-width="1.2" /><path d="M4.5 1.5V10.5H14.5M4.5 10.5L1.5 14.5" fill="none" stroke="#999" stroke-width="1" /></g>
<g transform="translate(1584,83)" shape-rendering="crispEdges"><rect x="2" y="5" width="9" height="9" fill="#50ffff"/><path d="M1.5 4.5L4.5 1.5H14.5V10.5L11.5 14.5H1.5ZM1.5 4.5H11.5V14.5M11.5 4.5L14.5 1.5" fill="none" stroke="#333" stroke-width="1.2" /></g>
<g transform="translate(1606,83)" shape-rendering="crispEdges"><path d="M1.5 4.5L4.5 1.5H14.5V10.5L11.5 14.5H1.5ZM1.5 4.5H11.5V14.5M11.5 4.5L14.5 1.5" fill="none" stroke="#333" stroke-width="1.2" /><path d="M4.5 1.5V10.5H14.5M4.5 10.5L1.5 14.5" fill="none" stroke="#999" stroke-width="1" /><path d="M2 14L5 10.5H14.5L11.5 14Z" fill="#50ffff"/></g>
<g transform="translate(1628,83)" shape-rendering="crispEdges"><rect x="4.5" y="2" width="10" height="9" fill="#50ffff"/><path d="M1.5 4.5L4.5 1.5H14.5V10.5L11.5 14.5H1.5ZM1.5 4.5H11.5V14.5M11.5 4.5L14.5 1.5" fill="none" stroke="#333" stroke-width="1.2" /><path d="M4.5 1.5V10.5H14.5M4.5 10.5L1.5 14.5" fill="none" stroke="#999" stroke-width="1" /></g>
<g transform="translate(1650,83)" shape-rendering="crispEdges"><path d="M11 5L14 2V11L11 14Z" fill="#50ffff"/><path d="M1.5 4.5L4.5 1.5H14.5V10.5L11.5 14.5H1.5ZM1.5 4.5H11.5V14.5M11.5 4.5L14.5 1.5" fill="none" stroke="#333" stroke-width="1.2" /><path d="M4.5 1.5V10.5H14.5M4.5 10.5L1.5 14.5" fill="none" stroke="#999" stroke-width="1" /></g>
<g transform="translate(1671,83)" shape-rendering="crispEdges"><path d="M8 8L14.5 4.5V12L8 15.5Z" fill="#50e8e8"/><path d="M8 1L14.5 4.5V12L8 15.5L1.5 12V4.5ZM8 8V15.5M1.5 4.5L8 8L14.5 4.5" fill="none" stroke="#444" stroke-width="1.1" /><path d="M8 1V8" fill="none" stroke="#999" stroke-width="1" /></g>
<g transform="translate(1693,83)" shape-rendering="crispEdges"><path d="M8 8L1.5 4.5V12L8 15.5Z" fill="#50e8e8"/><path d="M8 1L14.5 4.5V12L8 15.5L1.5 12V4.5ZM8 8V15.5M1.5 4.5L8 8L14.5 4.5" fill="none" stroke="#444" stroke-width="1.1" /><path d="M8 1V8" fill="none" stroke="#999" stroke-width="1" /></g>
<g transform="translate(1715,83)" shape-rendering="crispEdges"><path d="M8 1L14.5 4.5V9L8 8Z" fill="#50e8e8"/><path d="M8 1L14.5 4.5V12L8 15.5L1.5 12V4.5ZM8 8V15.5M1.5 4.5L8 8L14.5 4.5" fill="none" stroke="#444" stroke-width="1.1" /><path d="M8 1V8" fill="none" stroke="#999" stroke-width="1" /></g>
<g transform="translate(1738,83)" shape-rendering="crispEdges"><path d="M8 1L1.5 4.5V9L8 8Z" fill="#50e8e8"/><path d="M8 1L14.5 4.5V12L8 15.5L1.5 12V4.5ZM8 8V15.5M1.5 4.5L8 8L14.5 4.5" fill="none" stroke="#444" stroke-width="1.1" /><path d="M8 1V8" fill="none" stroke="#999" stroke-width="1" /></g>
<rect x="33" y="106" width="1" height="49" fill="#a0a0a0" />
<rect x="4" y="109" width="2" height="2" fill="#a8a8a8"/><rect x="5" y="110" width="1" height="1" fill="#ffffff"/><rect x="4" y="113" width="2" height="2" fill="#a8a8a8"/><rect x="5" y="114" width="1" height="1" fill="#ffffff"/><rect x="4" y="117" width="2" height="2" fill="#a8a8a8"/><rect x="5" y="118" width="1" height="1" fill="#ffffff"/><rect x="4" y="121" width="2" height="2" fill="#a8a8a8"/><rect x="5" y="122" width="1" height="1" fill="#ffffff"/><rect x="4" y="125" width="2" height="2" fill="#a8a8a8"/><rect x="5" y="126" width="1" height="1" fill="#ffffff"/><rect x="4" y="129" width="2" height="2" fill="#a8a8a8"/><rect x="5" y="130" width="1" height="1" fill="#ffffff"/><rect x="4" y="133" width="2" height="2" fill="#a8a8a8"/><rect x="5" y="134" width="1" height="1" fill="#ffffff"/><rect x="4" y="137" width="2" height="2" fill="#a8a8a8"/><rect x="5" y="138" width="1" height="1" fill="#ffffff"/><rect x="4" y="141" width="2" height="2" fill="#a8a8a8"/><rect x="5" y="142" width="1" height="1" fill="#ffffff"/><rect x="4" y="145" width="2" height="2" fill="#a8a8a8"/><rect x="5" y="146" width="1" height="1" fill="#ffffff"/><rect x="4" y="149" width="2" height="2" fill="#a8a8a8"/><rect x="5" y="150" width="1" height="1" fill="#ffffff"/>
<rect x="463" y="106" width="1" height="49" fill="#a0a0a0" />
<rect x="38" y="109" width="2" height="2" fill="#a8a8a8"/><rect x="39" y="110" width="1" height="1" fill="#ffffff"/><rect x="38" y="113" width="2" height="2" fill="#a8a8a8"/><rect x="39" y="114" width="1" height="1" fill="#ffffff"/><rect x="38" y="117" width="2" height="2" fill="#a8a8a8"/><rect x="39" y="118" width="1" height="1" fill="#ffffff"/><rect x="38" y="121" width="2" height="2" fill="#a8a8a8"/><rect x="39" y="122" width="1" height="1" fill="#ffffff"/><rect x="38" y="125" width="2" height="2" fill="#a8a8a8"/><rect x="39" y="126" width="1" height="1" fill="#ffffff"/><rect x="38" y="129" width="2" height="2" fill="#a8a8a8"/><rect x="39" y="130" width="1" height="1" fill="#ffffff"/><rect x="38" y="133" width="2" height="2" fill="#a8a8a8"/><rect x="39" y="134" width="1" height="1" fill="#ffffff"/><rect x="38" y="137" width="2" height="2" fill="#a8a8a8"/><rect x="39" y="138" width="1" height="1" fill="#ffffff"/><rect x="38" y="141" width="2" height="2" fill="#a8a8a8"/><rect x="39" y="142" width="1" height="1" fill="#ffffff"/><rect x="38" y="145" width="2" height="2" fill="#a8a8a8"/><rect x="39" y="146" width="1" height="1" fill="#ffffff"/><rect x="38" y="149" width="2" height="2" fill="#a8a8a8"/><rect x="39" y="150" width="1" height="1" fill="#ffffff"/>
<rect x="651" y="106" width="1" height="49" fill="#a0a0a0" />
<rect x="468" y="109" width="2" height="2" fill="#a8a8a8"/><rect x="469" y="110" width="1" height="1" fill="#ffffff"/><rect x="468" y="113" width="2" height="2" fill="#a8a8a8"/><rect x="469" y="114" width="1" height="1" fill="#ffffff"/><rect x="468" y="117" width="2" height="2" fill="#a8a8a8"/><rect x="469" y="118" width="1" height="1" fill="#ffffff"/><rect x="468" y="121" width="2" height="2" fill="#a8a8a8"/><rect x="469" y="122" width="1" height="1" fill="#ffffff"/><rect x="468" y="125" width="2" height="2" fill="#a8a8a8"/><rect x="469" y="126" width="1" height="1" fill="#ffffff"/><rect x="468" y="129" width="2" height="2" fill="#a8a8a8"/><rect x="469" y="130" width="1" height="1" fill="#ffffff"/><rect x="468" y="133" width="2" height="2" fill="#a8a8a8"/><rect x="469" y="134" width="1" height="1" fill="#ffffff"/><rect x="468" y="137" width="2" height="2" fill="#a8a8a8"/><rect x="469" y="138" width="1" height="1" fill="#ffffff"/><rect x="468" y="141" width="2" height="2" fill="#a8a8a8"/><rect x="469" y="142" width="1" height="1" fill="#ffffff"/><rect x="468" y="145" width="2" height="2" fill="#a8a8a8"/><rect x="469" y="146" width="1" height="1" fill="#ffffff"/><rect x="468" y="149" width="2" height="2" fill="#a8a8a8"/><rect x="469" y="150" width="1" height="1" fill="#ffffff"/>
<rect x="919" y="106" width="1" height="49" fill="#a0a0a0" />
<rect x="656" y="109" width="2" height="2" fill="#a8a8a8"/><rect x="657" y="110" width="1" height="1" fill="#ffffff"/><rect x="656" y="113" width="2" height="2" fill="#a8a8a8"/><rect x="657" y="114" width="1" height="1" fill="#ffffff"/><rect x="656" y="117" width="2" height="2" fill="#a8a8a8"/><rect x="657" y="118" width="1" height="1" fill="#ffffff"/><rect x="656" y="121" width="2" height="2" fill="#a8a8a8"/><rect x="657" y="122" width="1" height="1" fill="#ffffff"/><rect x="656" y="125" width="2" height="2" fill="#a8a8a8"/><rect x="657" y="126" width="1" height="1" fill="#ffffff"/><rect x="656" y="129" width="2" height="2" fill="#a8a8a8"/><rect x="657" y="130" width="1" height="1" fill="#ffffff"/><rect x="656" y="133" width="2" height="2" fill="#a8a8a8"/><rect x="657" y="134" width="1" height="1" fill="#ffffff"/><rect x="656" y="137" width="2" height="2" fill="#a8a8a8"/><rect x="657" y="138" width="1" height="1" fill="#ffffff"/><rect x="656" y="141" width="2" height="2" fill="#a8a8a8"/><rect x="657" y="142" width="1" height="1" fill="#ffffff"/><rect x="656" y="145" width="2" height="2" fill="#a8a8a8"/><rect x="657" y="146" width="1" height="1" fill="#ffffff"/><rect x="656" y="149" width="2" height="2" fill="#a8a8a8"/><rect x="657" y="150" width="1" height="1" fill="#ffffff"/>
<rect x="1085" y="106" width="1" height="49" fill="#a0a0a0" />
<rect x="924" y="109" width="2" height="2" fill="#a8a8a8"/><rect x="925" y="110" width="1" height="1" fill="#ffffff"/><rect x="924" y="113" width="2" height="2" fill="#a8a8a8"/><rect x="925" y="114" width="1" height="1" fill="#ffffff"/><rect x="924" y="117" width="2" height="2" fill="#a8a8a8"/><rect x="925" y="118" width="1" height="1" fill="#ffffff"/><rect x="924" y="121" width="2" height="2" fill="#a8a8a8"/><rect x="925" y="122" width="1" height="1" fill="#ffffff"/><rect x="924" y="125" width="2" height="2" fill="#a8a8a8"/><rect x="925" y="126" width="1" height="1" fill="#ffffff"/><rect x="924" y="129" width="2" height="2" fill="#a8a8a8"/><rect x="925" y="130" width="1" height="1" fill="#ffffff"/><rect x="924" y="133" width="2" height="2" fill="#a8a8a8"/><rect x="925" y="134" width="1" height="1" fill="#ffffff"/><rect x="924" y="137" width="2" height="2" fill="#a8a8a8"/><rect x="925" y="138" width="1" height="1" fill="#ffffff"/><rect x="924" y="141" width="2" height="2" fill="#a8a8a8"/><rect x="925" y="142" width="1" height="1" fill="#ffffff"/><rect x="924" y="145" width="2" height="2" fill="#a8a8a8"/><rect x="925" y="146" width="1" height="1" fill="#ffffff"/><rect x="924" y="149" width="2" height="2" fill="#a8a8a8"/><rect x="925" y="150" width="1" height="1" fill="#ffffff"/>
<rect x="1599" y="106" width="1" height="49" fill="#a0a0a0" />
<rect x="1090" y="109" width="2" height="2" fill="#a8a8a8"/><rect x="1091" y="110" width="1" height="1" fill="#ffffff"/><rect x="1090" y="113" width="2" height="2" fill="#a8a8a8"/><rect x="1091" y="114" width="1" height="1" fill="#ffffff"/><rect x="1090" y="117" width="2" height="2" fill="#a8a8a8"/><rect x="1091" y="118" width="1" height="1" fill="#ffffff"/><rect x="1090" y="121" width="2" height="2" fill="#a8a8a8"/><rect x="1091" y="122" width="1" height="1" fill="#ffffff"/><rect x="1090" y="125" width="2" height="2" fill="#a8a8a8"/><rect x="1091" y="126" width="1" height="1" fill="#ffffff"/><rect x="1090" y="129" width="2" height="2" fill="#a8a8a8"/><rect x="1091" y="130" width="1" height="1" fill="#ffffff"/><rect x="1090" y="133" width="2" height="2" fill="#a8a8a8"/><rect x="1091" y="134" width="1" height="1" fill="#ffffff"/><rect x="1090" y="137" width="2" height="2" fill="#a8a8a8"/><rect x="1091" y="138" width="1" height="1" fill="#ffffff"/><rect x="1090" y="141" width="2" height="2" fill="#a8a8a8"/><rect x="1091" y="142" width="1" height="1" fill="#ffffff"/><rect x="1090" y="145" width="2" height="2" fill="#a8a8a8"/><rect x="1091" y="146" width="1" height="1" fill="#ffffff"/><rect x="1090" y="149" width="2" height="2" fill="#a8a8a8"/><rect x="1091" y="150" width="1" height="1" fill="#ffffff"/>
<rect x="1677" y="106" width="1" height="49" fill="#a0a0a0" />
<rect x="1604" y="109" width="2" height="2" fill="#a8a8a8"/><rect x="1605" y="110" width="1" height="1" fill="#ffffff"/><rect x="1604" y="113" width="2" height="2" fill="#a8a8a8"/><rect x="1605" y="114" width="1" height="1" fill="#ffffff"/><rect x="1604" y="117" width="2" height="2" fill="#a8a8a8"/><rect x="1605" y="118" width="1" height="1" fill="#ffffff"/><rect x="1604" y="121" width="2" height="2" fill="#a8a8a8"/><rect x="1605" y="122" width="1" height="1" fill="#ffffff"/><rect x="1604" y="125" width="2" height="2" fill="#a8a8a8"/><rect x="1605" y="126" width="1" height="1" fill="#ffffff"/><rect x="1604" y="129" width="2" height="2" fill="#a8a8a8"/><rect x="1605" y="130" width="1" height="1" fill="#ffffff"/><rect x="1604" y="133" width="2" height="2" fill="#a8a8a8"/><rect x="1605" y="134" width="1" height="1" fill="#ffffff"/><rect x="1604" y="137" width="2" height="2" fill="#a8a8a8"/><rect x="1605" y="138" width="1" height="1" fill="#ffffff"/><rect x="1604" y="141" width="2" height="2" fill="#a8a8a8"/><rect x="1605" y="142" width="1" height="1" fill="#ffffff"/><rect x="1604" y="145" width="2" height="2" fill="#a8a8a8"/><rect x="1605" y="146" width="1" height="1" fill="#ffffff"/><rect x="1604" y="149" width="2" height="2" fill="#a8a8a8"/><rect x="1605" y="150" width="1" height="1" fill="#ffffff"/>
<rect x="1937" y="106" width="1" height="49" fill="#a0a0a0" />
<rect x="1682" y="109" width="2" height="2" fill="#a8a8a8"/><rect x="1683" y="110" width="1" height="1" fill="#ffffff"/><rect x="1682" y="113" width="2" height="2" fill="#a8a8a8"/><rect x="1683" y="114" width="1" height="1" fill="#ffffff"/><rect x="1682" y="117" width="2" height="2" fill="#a8a8a8"/><rect x="1683" y="118" width="1" height="1" fill="#ffffff"/><rect x="1682" y="121" width="2" height="2" fill="#a8a8a8"/><rect x="1683" y="122" width="1" height="1" fill="#ffffff"/><rect x="1682" y="125" width="2" height="2" fill="#a8a8a8"/><rect x="1683" y="126" width="1" height="1" fill="#ffffff"/><rect x="1682" y="129" width="2" height="2" fill="#a8a8a8"/><rect x="1683" y="130" width="1" height="1" fill="#ffffff"/><rect x="1682" y="133" width="2" height="2" fill="#a8a8a8"/><rect x="1683" y="134" width="1" height="1" fill="#ffffff"/><rect x="1682" y="137" width="2" height="2" fill="#a8a8a8"/><rect x="1683" y="138" width="1" height="1" fill="#ffffff"/><rect x="1682" y="141" width="2" height="2" fill="#a8a8a8"/><rect x="1683" y="142" width="1" height="1" fill="#ffffff"/><rect x="1682" y="145" width="2" height="2" fill="#a8a8a8"/><rect x="1683" y="146" width="1" height="1" fill="#ffffff"/><rect x="1682" y="149" width="2" height="2" fill="#a8a8a8"/><rect x="1683" y="150" width="1" height="1" fill="#ffffff"/>
<g transform="translate(13,123)" shape-rendering="crispEdges"><rect x="2" y="3" width="9" height="4" fill="#a0a050"/><rect x="9" y="9" width="5" height="2" fill="#a0a050"/></g>
<g transform="translate(47,123)" shape-rendering="crispEdges"><path d="M2.5 5.5L5.5 2.5H12.5V10.5L9.5 13.5H2.5ZM2.5 5.5H9.5V13.5M9.5 5.5L12.5 2.5" fill="#fff" stroke="#333" stroke-width="1.2" /><rect x="10" y="3" width="3" height="8" fill="#c8c8c8"/><rect x="1.5" y="12.5" width="2" height="2" fill="#fff" stroke="#2828ff"/><rect x="11.5" y="1.5" width="2" height="2" fill="#fff" stroke="#2828ff"/><rect x="11.5" y="9.5" width="2" height="2" fill="#fff" stroke="#2828ff"/></g>
<g transform="translate(68,123)" shape-rendering="crispEdges"><path d="M2.5 4.5L7.5 2L12.5 4.5V11.5L7.5 14L2.5 11.5Z" fill="#fff" stroke="#444" stroke-width="1.2" /><path d="M3 4.5L7.5 2.5L12 4.5L7.5 7Z" fill="#d8d8d8"/><path d="M7.5 7L12 4.5V11.5L7.5 13.5Z" fill="#a8a8a8"/><path d="M2.5 4.5L7.5 7L12.5 4.5M7.5 7V14" fill="none" stroke="#444" stroke-width="1" /><rect x="1.5" y="10.5" width="2" height="2" fill="#fff" stroke="#2828ff"/><rect x="6.5" y="12.5" width="2" height="2" fill="#fff" stroke="#2828ff"/><rect x="11.5" y="3.5" width="2" height="2" fill="#fff" stroke="#2828ff"/><rect x="11.5" y="10.5" width="2" height="2" fill="#fff" stroke="#2828ff"/></g>
<g transform="translate(91,123)" shape-rendering="crispEdges"><circle cx="8" cy="8" r="6.5" fill="#b8b8b8" stroke="#555" stroke-width="1.2" /><circle cx="7" cy="7" r="3" fill="#e8e8e8" stroke="none" stroke-width="1" /><rect x="7.5" y="7.5" width="2" height="2" fill="#fff" stroke="#2828ff"/><rect x="12.5" y="7.5" width="2" height="2" fill="#fff" stroke="#2828ff"/></g>
<g transform="translate(113,123)" shape-rendering="crispEdges"><path d="M1.5 8.5Q3 2 9 2.5Q14.5 3 14.5 12.5Z" fill="#a8a8a8" stroke="#444" stroke-width="1.2" /><path d="M5 9Q9 6 14 12" fill="#ddd" stroke="#555" stroke-width="1" /><rect x="1.5" y="7.5" width="2" height="2" fill="#fff" stroke="#2828ff"/><rect x="7.5" y="9.5" width="2" height="2" fill="#fff" stroke="#2828ff"/></g>
<g transform="translate(135,123)" shape-rendering="crispEdges"><path d="M2.5 13.5L13.5 1.5V13.5Z" fill="#fff" stroke="#444" stroke-width="1" /><path d="M13 2L8 13H13Z" fill="#b8b8b8"/><path d="M3 11.5H13" fill="none" stroke="#30a0a0" stroke-width="1" /><path d="M2 14Q8 16 14 14" fill="none" stroke="#3030ff" stroke-width="1" /><rect x="12.5" y="0.5" width="2" height="2" fill="#fff" stroke="#2828ff"/></g>
<g transform="translate(156,123)" shape-rendering="crispEdges"><path d="M1.5 12.5L4.5 2.5L9.5 4.5L13.5 2.5V12.5L9.5 14.5Z M9.5 4.5V14.5" fill="none" stroke="#333" stroke-width="1" /><path d="M1.5 12.5L4.5 2.5L9.5 4.5M4.5 2.5L13.5 2.5" fill="none" stroke="#3030ff" stroke-width="1" /><path d="M3 11H13" fill="none" stroke="#30a0a0" stroke-width="1" stroke-dasharray="2.2 1.6" shape-rendering="geometricPrecision"/></g>
<g transform="translate(178,123)" shape-rendering="crispEdges"><path d="M2.5 9.5L6.5 2.5Q12 1.5 14.5 5.5L10.5 12.5Q5 14.5 2.5 9.5Z" fill="#fff" stroke="#444" stroke-width="1.1" /><path d="M6.5 2.5Q8.5 6.5 14.5 5.5" fill="none" stroke="#444" stroke-width="1" /><path d="M2.5 9.5Q5 14 10.5 12.5" fill="none" stroke="#3030ff" stroke-width="1.3" /><path d="M10 8L13 7L11 12Z" fill="#bbb"/></g>
<g transform="translate(201,123)" shape-rendering="crispEdges"><path d="M3 3.5H13M3 8.5H13M3 12.5H13" fill="none" stroke="#333" stroke-width="1.5" /><path d="M2 3.5l3-2v4zM14 8.5l-3-2v4zM2 12.5l3-2v4z M9 3.5h2v2h-2zM5 8.5h2v2h-2zM10 12.5h2v2h-2z" fill="#333"/></g>
<g transform="translate(223,123)" shape-rendering="crispEdges"><path d="M2.5 12.5L5.5 2.5H14.5L11.5 12.5Z" fill="#fff" stroke="#444" stroke-width="1" /><path d="M2.5 12.5H11.5" fill="none" stroke="#3030ff" stroke-width="1" /><path d="M5 9.5H10" fill="none" stroke="#30a0a0" stroke-width="1" /><path d="M8 8l4-2v6z" fill="#b8b8b8"/><rect x="13.5" y="1.5" width="2" height="2" fill="#fff" stroke="#2828ff"/><rect x="10.5" y="11.5" width="2" height="2" fill="#fff" stroke="#2828ff"/></g>
<g transform="translate(244,123)" shape-rendering="crispEdges"><path d="M2.5 1.5H6.5Q6.5 8 4.5 9V14.5M2.5 14.5H6.5M11.5 1.5H15.5Q15.5 8 13.5 9V14.5M11.5 14.5H15.5" fill="none" stroke="#333" stroke-width="1" /><path d="M8.5 0V16" fill="none" stroke="#ff3030" stroke-width="1" stroke-dasharray="1 1"/><path d="M8 8H12" fill="none" stroke="#3030ff" stroke-width="1" /><path d="M12 8l-2-1.5v3z" fill="#3030ff"/></g>
<g transform="translate(266,123)" shape-rendering="crispEdges"><ellipse cx="7" cy="3.5" rx="5" ry="2" fill="#fff" stroke="#444"/><path d="M2 3.5V12.5Q7 16 12 12.5V3.5" fill="#e8e8e8" stroke="#444" stroke-width="1" /><path d="M8 6h4v7h-4z" fill="#b8b8b8"/><rect x="11.5" y="1.5" width="2" height="2" fill="#fff" stroke="#2828ff"/><rect x="7.5" y="10.5" width="2" height="2" fill="#fff" stroke="#2828ff"/><rect x="11.5" y="10.5" width="2" height="2" fill="#fff" stroke="#2828ff"/></g>
<g transform="translate(288,123)" shape-rendering="crispEdges"><ellipse cx="7" cy="3.5" rx="5" ry="2" fill="#fff" stroke="#444"/><path d="M2 3.5V12.5Q7 16 12 12.5V3.5" fill="#e8e8e8" stroke="#444" stroke-width="1" /><rect x="5.5" y="8.5" width="5" height="5" fill="#b8b8b8" stroke="#3030ff" stroke-width="1"/><rect x="12.5" y="2.5" width="2" height="2" fill="#fff" stroke="#2828ff"/><rect x="12.5" y="11.5" width="2" height="2" fill="#fff" stroke="#2828ff"/><rect x="5.5" y="11.5" width="2" height="2" fill="#fff" stroke="#2828ff"/></g>
<g transform="translate(311,123)" shape-rendering="crispEdges"><path d="M5 1.5H11L14.5 5V11L11 14.5H5L1.5 11V5Z" fill="#c8c8c8" stroke="#444" stroke-width="1.2" /><circle cx="8" cy="8" r="3.5" fill="#e0e0e0" stroke="#888" stroke-width="1" /><circle cx="8" cy="8" r="1.5" fill="#fff" stroke="#444" stroke-width="1" /></g>
<g transform="translate(333,123)" shape-rendering="crispEdges"><path d="M1.5 1.5H13.5V13.5H1.5ZM4.5 1.5V13.5M7.5 1.5V13.5M10.5 1.5V13.5M1.5 4.5H13.5M1.5 7.5H13.5M1.5 10.5H13.5" fill="none" stroke="#333" stroke-width="1.2" /><rect x="0.5" y="0.5" width="2" height="2" fill="#fff" stroke="#2828ff"/><rect x="12.5" y="12.5" width="2" height="2" fill="#fff" stroke="#2828ff"/></g>
<g transform="translate(356,123)" shape-rendering="crispEdges"><path d="M2.5 4.5L9.5 11.5H2.5Z" fill="#fff" stroke="#333" stroke-width="1" /><path d="M3 4L12 12L10 13L2 5Z" fill="#b8b8b8"/><path d="M2.5 4.5L6 1.5L14 10L9.5 13" fill="none" stroke="#444" stroke-width="1" /><rect x="1.5" y="3.5" width="2" height="2" fill="#fff" stroke="#2828ff"/><rect x="1.5" y="11.5" width="2" height="2" fill="#fff" stroke="#2828ff"/><rect x="12.5" y="8.5" width="2" height="2" fill="#fff" stroke="#2828ff"/></g>
<g transform="translate(378,123)" shape-rendering="crispEdges"><path d="M1.5 4.5L4.5 1.5H14.5V9.5L11.5 12.5H1.5ZM1.5 4.5H11.5V12.5M11.5 4.5L14.5 1.5" fill="#fff" stroke="#999" stroke-width="1" /><path d="M2 10L5 7L7 9L10 6L13 9" fill="none" stroke="#3030a0" stroke-width="1.3" /><path d="M11 6h3v3z" fill="#3030a0"/></g>
<g transform="translate(400,123)" shape-rendering="crispEdges"><text x="0" y="9" font-family="Liberation Sans" font-size="7.5" fill="#333">3D</text><path d="M1.5 14.5H7.5L13.5 8.5L8.5 2.5" fill="none" stroke="#333" stroke-width="1" /><rect x="0.5" y="13.5" width="2" height="2" fill="#fff" stroke="#2828ff"/><rect x="6.5" y="13.5" width="2" height="2" fill="#fff" stroke="#2828ff"/><rect x="12.5" y="7.5" width="2" height="2" fill="#fff" stroke="#2828ff"/><rect x="7.5" y="1.5" width="2" height="2" fill="#fff" stroke="#2828ff"/></g>
<g transform="translate(421,123)" shape-rendering="crispEdges"><text x="4" y="14" font-family="Liberation Sans" font-size="7.5" fill="#333">3D</text><path d="M1.5 14Q8 -4 14 14" fill="none" stroke="#333" stroke-width="1" /><rect x="0.5" y="13.5" width="2" height="2" fill="#fff" stroke="#2828ff"/><rect x="1.5" y="0.5" width="2" height="2" fill="#fff" stroke="#2828ff"/><rect x="12.5" y="0.5" width="2" height="2" fill="#fff" stroke="#2828ff"/><rect x="13.5" y="12.5" width="2" height="2" fill="#fff" stroke="#2828ff"/></g>
<g transform="translate(443,123)" shape-rendering="crispEdges"><text x="0" y="14" font-family="Liberation Sans" font-size="7.5" fill="#333">3D</text><path d="M6 7Q3 3 8 1.5Q12 1 13 3" fill="none" stroke="#333" stroke-width="1" /><rect x="12.5" y="1.5" width="2" height="2" fill="#fff" stroke="#2828ff"/><rect x="4.5" y="5.5" width="2" height="2" fill="#fff" stroke="#2828ff"/><rect x="9.5" y="8.5" width="2" height="2" fill="#fff" stroke="#2828ff"/></g>
<g transform="translate(476,123)" shape-rendering="crispEdges"><circle cx="9.5" cy="8" r="6" fill="#a8a8a8" stroke="#3030a0" stroke-width="1.2" /><circle cx="9.5" cy="8" r="2.5" fill="#e0e0e0" stroke="none" stroke-width="1" /><path d="M1.5 8.5L4.5 5.5H9V14.5H1.5Z" fill="#fff" stroke="#3030a0" stroke-width="1.2" /><path d="M9 5.5L12 2" fill="none" stroke="#3030a0" stroke-width="1" /></g>
<g transform="translate(499,123)" shape-rendering="crispEdges"><circle cx="10" cy="7" r="5.5" fill="#fff" stroke="#aaa" stroke-width="1" /><path d="M1.5 7.5L4.5 4.5H11.5V14.5H1.5Z" fill="#fff" stroke="#3030a0" stroke-width="1.2" /><path d="M8 5h3v5l-3 3z" fill="#30a0a0"/><path d="M1.5 7.5H8.5V14.5M8.5 7.5L11.5 4.5" fill="none" stroke="#3030a0" stroke-width="1.2" /></g>
<g transform="translate(521,123)" shape-rendering="crispEdges"><circle cx="10" cy="7" r="5.5" fill="#fff" stroke="#aaa" stroke-width="1" /><path d="M1.5 7.5L4.5 4.5H11.5V14.5H1.5Z" fill="#fff" stroke="#aaa" stroke-width="1" /><path d="M5.5 7.5H9.5V12L6 14.5V9Z" fill="none" stroke="#3030a0" stroke-width="1.2" /><path d="M6 8h3v4z" fill="#30a0a0"/></g>
<g transform="translate(544,123)" shape-rendering="crispEdges"><circle cx="8" cy="8" r="6.5" fill="#b8b8b8" stroke="#444" stroke-width="1.2" /><circle cx="7" cy="7" r="2.5" fill="#e8e8e8" stroke="none" stroke-width="1" /><path d="M1 1L15 15M2 0L16 14" fill="none" stroke="#3030ff" stroke-width="1" /></g>
<g transform="translate(587,123)" shape-rendering="crispEdges"><path d="M1.5 6.5H10.5V14.5H1.5Z" fill="#40a0a0" stroke="#3030a0" stroke-width="1.2" /><path d="M8.5 1.5H12.5L15 4V9L12.5 11.5H8.5L6 9V4Z" fill="#40a0a0" stroke="#3030a0" stroke-width="1.2" /><path d="M6 7V9L8.5 11.5H10.5" fill="none" stroke="#3030a0" stroke-width="1" /></g>
<g transform="translate(609,123)" shape-rendering="crispEdges"><path d="M1.5 6.5H10.5V14.5H1.5Z" fill="#40a0a0" stroke="#3030a0" stroke-width="1.2" /><circle cx="11" cy="6" r="4.5" fill="#fff" stroke="#666" stroke-width="1" /><path d="M6.5 6.5h4v4z" fill="#fff"/></g>
<g transform="translate(631,123)" shape-rendering="crispEdges"><rect x="1.5" y="6.5" width="9" height="8" fill="#fff" stroke="#888" stroke-width="1"/><circle cx="11" cy="6" r="4.5" fill="none" stroke="#888" stroke-width="1" /><path d="M7 6.5h3.5v5z" fill="#40a0a0"/><path d="M7 6.5H10.5V11" fill="none" stroke="#3030a0" stroke-width="1.2" /></g>
<g transform="translate(664,123)" shape-rendering="crispEdges"><rect x="1.5" y="1.5" width="9" height="9" fill="#fff" stroke="#999" stroke-width="1"/><rect x="3.5" y="3.5" width="9" height="9" fill="#fff" stroke="#999" stroke-width="1"/><rect x="5.5" y="5.5" width="9" height="9" fill="#fff" stroke="#999" stroke-width="1"/></g>
<g transform="translate(687,123)" shape-rendering="crispEdges"><rect x="1.5" y="1.5" width="5" height="5" fill="none" stroke="#999" stroke-width="1"/><rect x="9.5" y="1.5" width="5" height="5" fill="none" stroke="#999" stroke-width="1"/><rect x="1.5" y="9.5" width="5" height="5" fill="none" stroke="#999" stroke-width="1"/><rect x="9.5" y="9.5" width="5" height="5" fill="none" stroke="#999" stroke-width="1"/></g>
<g transform="translate(708,123)" shape-rendering="crispEdges"><circle cx="8" cy="3" r="2" fill="none" stroke="#999" stroke-width="1" /><circle cx="3" cy="8" r="2" fill="none" stroke="#999" stroke-width="1" /><circle cx="13" cy="8" r="2" fill="none" stroke="#999" stroke-width="1" /><circle cx="8" cy="13" r="2" fill="none" stroke="#999" stroke-width="1" /></g>
<g transform="translate(731,123)" shape-rendering="crispEdges"><rect x="1.5" y="1.5" width="9" height="9" fill="none" stroke="#999" stroke-width="1"/><rect x="3.5" y="3.5" width="9" height="9" fill="none" stroke="#999" stroke-width="1"/><rect x="5.5" y="5.5" width="8" height="9" fill="none" stroke="#999" stroke-width="1"/><rect x="0.5" y="0.5" width="15" height="15" fill="none" stroke="#eee" stroke-width="1"/></g>
<g transform="translate(754,123)" shape-rendering="crispEdges"><rect x="2.5" y="2.5" width="4" height="5" fill="none" stroke="#999" stroke-width="1"/><rect x="9.5" y="2.5" width="4" height="5" fill="none" stroke="#999" stroke-width="1"/><rect x="2.5" y="9.5" width="4" height="5" fill="none" stroke="#999" stroke-width="1"/><rect x="9.5" y="9.5" width="4" height="5" fill="none" stroke="#999" stroke-width="1"/></g>
<g transform="translate(776,123)" shape-rendering="crispEdges"><circle cx="8" cy="4" r="2.5" fill="none" stroke="#999" stroke-width="1" /><circle cx="4" cy="8" r="2.5" fill="none" stroke="#999" stroke-width="1" /><circle cx="12" cy="8" r="2.5" fill="none" stroke="#999" stroke-width="1" /><circle cx="8" cy="12" r="2.5" fill="none" stroke="#999" stroke-width="1" /><rect x="0.5" y="0.5" width="15" height="15" fill="none" stroke="#eee" stroke-width="1"/></g>
<g transform="translate(798,123)" shape-rendering="crispEdges"><path d="M1.5 2V13.5H6.5" fill="none" stroke="#bbb" stroke-width="1" /><path d="M9 13.5L14 2V13.5Z" fill="#aaa"/><path d="M7.5 1V15" fill="none" stroke="#ddd" stroke-width="1" stroke-dasharray="1 1"/></g>
<g transform="translate(819,123)" shape-rendering="crispEdges"><path d="M2 14L12 4" fill="none" stroke="#bbb" stroke-width="1" stroke-dasharray="1.5 1"/><path d="M1.5 9.5V14.5H6.5Z" fill="#eee" stroke="#aaa" stroke-width="1" /><path d="M10.5 1.5H14.5V6Z" fill="#eee" stroke="#888" stroke-width="1" /></g>
<text x="842.5" y="135.5" font-family="Liberation Sans" font-size="13" fill="#000" stroke="#000" stroke-width="0.22" textLength="71.5" lengthAdjust="spacingAndGlyphs" >Copy In Place</text>
<rect x="843" y="139" width="8" height="1" fill="#000" />
<rect x="930" y="108" width="155" height="24" fill="#f0f0f0" />
<rect x="930.5" y="110.5" width="88" height="21" fill="#ffffff" stroke="#dcdcdc" stroke-width="1" />
<text x="936.5" y="124.5" font-family="Liberation Sans" font-size="13" fill="#000" stroke="#000" stroke-width="0.22" textLength="65.5" lengthAdjust="spacingAndGlyphs" >Measurement</text>
<g transform="translate(932,136)" shape-rendering="crispEdges"><path d="M4.5 2V12.5H14" fill="none" stroke="#333" stroke-width="1.2" /><path d="M4.5 1l-2 3h4zM15 12.5l-3-2v4z" fill="#333"/><rect x="6.5" y="5.5" width="3" height="3" fill="#fff" stroke="#3030ff" stroke-width="1"/><path d="M4.5 7H7M8 8.5V12" fill="none" stroke="#c0a000" stroke-width="1" /><text x="0" y="7" font-family="Liberation Sans" font-size="5" fill="#3030ff">x</text><text x="7" y="16" font-family="Liberation Sans" font-size="5" fill="#3030ff">x</text></g>
<g transform="translate(954,136)" shape-rendering="crispEdges"><path d="M1.5 8.5L6.5 3.5L12.5 9.5L7.5 14.5Z" fill="#fff" stroke="#333" stroke-width="1" /><path d="M5 5L11 11" fill="none" stroke="#333" stroke-width="1" /><path d="M4.5 4.5l3 1-2 2zM11.5 11.5l-3-1 2-2z" fill="#333"/><text x="11" y="7" font-family="Liberation Sans" font-size="7" fill="#3030ff">?</text></g>
<g transform="translate(977,136)" shape-rendering="crispEdges"><path d="M1 14.5H13M2 14L8 2" fill="none" stroke="#333" stroke-width="1.2" /><path d="M6 6Q11 7 11 13" fill="none" stroke="#333" stroke-width="1" /><path d="M11 14l-2-3h4z" fill="#333"/><rect x="6" y="6" width="2" height="1" fill="#c0a000"/><text x="10" y="7" font-family="Liberation Sans" font-size="7" fill="#3030ff">?</text></g>
<g transform="translate(999,136)" shape-rendering="crispEdges"><rect x="1.5" y="2.5" width="13" height="11" fill="#dde" stroke="#444" stroke-width="1.5"/><text x="3" y="11" font-family="Liberation Sans" font-size="7" font-weight="bold" fill="#3030ff">S=?</text></g>
<g transform="translate(1021,136)" shape-rendering="crispEdges"><path d="M1.5 6.5L4.5 3.5L7 6L10 3.5L12 6L9 10L11 13L8 15L6 12L8 9" fill="none" stroke="#333" stroke-width="1" /><path d="M4.5 2.5l2 2-2 1z" fill="#333"/><text x="10" y="6" font-family="Liberation Sans" font-size="7" fill="#3030ff">?</text></g>
<g transform="translate(1044,136)" shape-rendering="crispEdges"><path d="M1.5 8.5L4.5 5.5H13.5V12.5L11.5 14.5H1.5ZM1.5 8.5H11.5V14.5M11.5 8.5L13.5 5.5" fill="#fff" stroke="#3030a0" stroke-width="1.2" /><rect x="0.5" y="7.5" width="2" height="2" fill="#fff" stroke="#2828ff"/><rect x="12.5" y="5.5" width="2" height="2" fill="#fff" stroke="#2828ff"/><rect x="10.5" y="13.5" width="2" height="2" fill="#fff" stroke="#2828ff"/><text x="2" y="5" font-family="Liberation Sans" font-size="5" fill="#3030ff">V=?</text></g>
<g transform="translate(1066,136)" shape-rendering="crispEdges"><path d="M1.5 9.5L4 6H15L12.5 9.5V14.5H1.5Z" fill="#666" stroke="#333" stroke-width="1" /><path d="M1.5 12H12M5 9.5V14.5M9 9.5V14.5M4 7.5H14" fill="none" stroke="#ccc" stroke-width="1" /><text x="2" y="5" font-family="Liberation Sans" font-size="5" fill="#3030ff">S=?</text></g>
<g transform="translate(1098,123)" shape-rendering="crispEdges"><path d="M1.5 15L15 1.5" fill="none" stroke="#333" stroke-width="1" /><path d="M1.5 14.5L10 6" fill="none" stroke="#ff3030" stroke-width="1" /><path d="M8 4L4 8M10 9L13 12" fill="none" stroke="#3030ff" stroke-width="1.3" /><path d="M3 7l1-3 2 2zM13 13l-3-1 2-2z" fill="#3030ff"/></g>
<g transform="translate(1121,123)" shape-rendering="crispEdges"><path d="M1 8.5H8" fill="none" stroke="#333" stroke-width="1.2" /><path d="M6 14L10 3" fill="none" stroke="#3030ff" stroke-width="1.3" /><path d="M10 8.5H15" fill="none" stroke="#ff3030" stroke-width="1" stroke-dasharray="1 1.5"/></g>
<g transform="translate(1143,123)" shape-rendering="crispEdges"><path d="M7.5 1.5L14.5 8.5M9.5 1.5L6.5 4.5" fill="none" stroke="#ff3030" stroke-width="1" /><path d="M1.5 8.5L8 15M1.5 15L5 11.5" fill="none" stroke="#333" stroke-width="1" /><path d="M2 7L6 11" fill="none" stroke="#ff3030" stroke-width="1" /></g>
<g transform="translate(1164,123)" shape-rendering="crispEdges"><path d="M1.5 11Q2 3 8 2.5Q13.5 3 13.5 9" fill="none" stroke="#ff3030" stroke-width="1" /><path d="M13.5 9Q13.5 13 10.5 15" fill="none" stroke="#333" stroke-width="1.3" /><path d="M9 6L14 1" fill="none" stroke="#999" stroke-width="1" stroke-dasharray="1 1.5"/></g>
<g transform="translate(1186,123)" shape-rendering="crispEdges"><path d="M1 14L12.5 1.5" fill="none" stroke="#ff3030" stroke-width="1" /><path d="M3 2L15 14.5" fill="none" stroke="#333" stroke-width="1" /></g>
<g transform="translate(1209,123)" shape-rendering="crispEdges"><path d="M5 13L14 4M8 14L15 7M3 10L11 2" fill="none" stroke="#ff3030" stroke-width="1" /><path d="M2 4L6 1" fill="none" stroke="#3030ff" stroke-width="1" /><path d="M1.5 6l1-3 3 2z" fill="#3030ff"/><path d="M6 13L13 6" fill="none" stroke="#333" stroke-width="1" /></g>
<g transform="translate(1231,123)" shape-rendering="crispEdges"><path d="M1.5 1.5H8.5L11.5 10.5H1.5Z" fill="none" stroke="#333" stroke-width="1.2" /><path d="M8.5 1.5L11.5 10.5" fill="none" stroke="#ff3030" stroke-width="1" /><path d="M7.5 6.5H14.5V14.5H7.5Z" fill="none" stroke="#333" stroke-width="1" stroke-dasharray="1 1"/><path d="M11 2L14 5" fill="none" stroke="#3030ff" stroke-width="1" /><path d="M14.5 5.5l-3-.5 2.5-2z" fill="#3030ff"/></g>
<g transform="translate(1253,123)" shape-rendering="crispEdges"><path d="M1.5 14L6 3M9 14L14 1.5" fill="none" stroke="#333" stroke-width="1.2" /><path d="M3 13L5 15" fill="none" stroke="#3030ff" stroke-width="1" /><path d="M5.5 15.5l-3-.5 2-2z" fill="#3030ff"/></g>
<g transform="translate(1274,123)" shape-rendering="crispEdges"><circle cx="8" cy="8" r="6.5" fill="none" stroke="#ff3030" stroke-width="1.1" /><path d="M3 13.5Q8 16 13 13.5" fill="none" stroke="#333" stroke-width="1.2" /></g>
<g transform="translate(1297,123)" shape-rendering="crispEdges"><path d="M2 1.5L9 3.5L15 6" fill="none" stroke="#333" stroke-width="1" /><path d="M1.5 1.5L8 14.5" fill="none" stroke="#ff3030" stroke-width="1" /><path d="M6 9L8.5 14.5" fill="none" stroke="#333" stroke-width="1" /></g>
<g transform="translate(1319,123)" shape-rendering="crispEdges"><rect x="1.5" y="6.5" width="10" height="8" fill="none" stroke="#333" stroke-width="1.3"/><circle cx="10.5" cy="5.5" r="4.5" fill="none" stroke="#30e030" stroke-width="1" /><path d="M6 8Q7 12 11 12" fill="none" stroke="#ff3030" stroke-width="1" /></g>
<rect x="1340" y="116" width="1" height="34" fill="#a0a0a0" />
<g transform="translate(1347,123)" shape-rendering="crispEdges"><path d="M1.5 1V9Q1.5 14.5 7 14.5H15" fill="none" stroke="#333" stroke-width="1.2" /><path d="M1.5 9Q1.5 14.5 7 14.5" fill="none" stroke="#ff3030" stroke-width="1.2" /></g>
<g transform="translate(1368,123)" shape-rendering="crispEdges"><path d="M1 13.5H4M12 1V4" fill="none" stroke="#333" stroke-width="1" /><path d="M3 13.5L12.5 3" fill="none" stroke="#ff3030" stroke-width="1" /><path d="M3 15H9M12 4V10M11 7H13M4 14V16M8 14V16" fill="none" stroke="#3030ff" stroke-width="1" /></g>
<g transform="translate(1391,123)" shape-rendering="crispEdges"><path d="M1 14.5H3M10 1V4" fill="none" stroke="#333" stroke-width="1" /><path d="M3 14.5L10.5 4" fill="none" stroke="#ff3030" stroke-width="1" /><path d="M3 16H10" fill="none" stroke="#3030ff" stroke-width="1" /><path d="M12 8V5L14 7M12 5Q13 4 15 4" fill="none" stroke="#3030ff" stroke-width="1" /></g>
<g transform="translate(1413,123)" shape-rendering="crispEdges"><path d="M1 14.5H3M11 1V3" fill="none" stroke="#333" stroke-width="1" /><path d="M2 13L11 3" fill="none" stroke="#ff3030" stroke-width="1" /><path d="M3 14L12 4" fill="none" stroke="#30a0a0" stroke-width="1" /><path d="M4 15L13 5" fill="none" stroke="#3030ff" stroke-width="1" /><path d="M12 8V5L14 7" fill="none" stroke="#3030ff" stroke-width="1" /></g>
<g transform="translate(1434,123)" shape-rendering="crispEdges"><path d="M1.5 8.5Q1.5 5.5 4.5 5.5H12.5L14.5 8.5V14.5H1.5Z" fill="#fff" stroke="#333" stroke-width="1.2" /><rect x="7" y="1" width="2" height="5" fill="#333"/><path d="M5 10H11M11 10L9 8.5M5 12H11M5 12L7 13.5" fill="none" stroke="#aaa" stroke-width="1" /></g>
<rect x="1456" y="116" width="1" height="34" fill="#a0a0a0" />
<g transform="translate(1463,123)" shape-rendering="crispEdges"><path d="M2 13L6 6L10 11L14 3" fill="none" stroke="#bbb" stroke-width="1" stroke-dasharray="1.5 1"/><rect x="1.5" y="12.5" width="3" height="3" fill="#fff" stroke="#aaa" stroke-width="1"/><rect x="5.5" y="2.5" width="3" height="3" fill="#fff" stroke="#aaa" stroke-width="1"/><rect x="9.5" y="12.5" width="3" height="3" fill="#fff" stroke="#aaa" stroke-width="1"/><rect x="12.5" y="2.5" width="3" height="3" fill="#fff" stroke="#aaa" stroke-width="1"/></g>
<g transform="translate(1485,123)" shape-rendering="crispEdges"><path d="M1.5 13Q1 4 7 3.5Q13 3 14.5 12" fill="none" stroke="#bbb" stroke-width="1.3" /></g>
<rect x="1506" y="116" width="1" height="34" fill="#a0a0a0" />
<g transform="translate(1513,123)" shape-rendering="crispEdges"><path d="M1.5 14.5L9 7M4 15L11 9M5 2L9 6M9 6L14 3" fill="none" stroke="#333" stroke-width="1.2" /><path d="M9 7L12 10" fill="none" stroke="#333" stroke-width="1" /></g>
<g transform="translate(1534,123)" shape-rendering="crispEdges"><path d="M5.5 1V5.5H1M10.5 1V5.5H15M5.5 15V10.5H1M10.5 15V10.5H15" fill="none" stroke="#333" stroke-width="1.4" /></g>
<g transform="translate(1557,123)" shape-rendering="crispEdges"><path d="M1.5 3.5H6.5V8.5H1.5Z" fill="none" stroke="#333" stroke-width="1" stroke-dasharray="2 1"/><path d="M6 2Q12 1 13 7" fill="none" stroke="#30d030" stroke-width="1.4" /><path d="M11 6l2 3 2-3z" fill="#30d030"/><rect x="8.5" y="9.5" width="7" height="6" fill="#fff" stroke="#ff3030" stroke-width="1.2"/></g>
<g transform="translate(1579,123)" shape-rendering="crispEdges"><path d="M5 1.5H11L15 5V11L11 14.5H5L1 11V5Z" fill="#999" stroke="#555" stroke-width="1" /><rect x="5.5" y="3" width="5" height="10" fill="#fff"/><rect x="5.5" y="3" width="5" height="10" fill="#fff" stroke="#ff3030" stroke-width="1"/><rect x="2" y="6" width="3" height="3" fill="#ff3030"/><rect x="11" y="6" width="3" height="3" fill="#ff3030"/></g>
<g transform="translate(1613,123)" shape-rendering="crispEdges"><path d="M0.5 4.5L4.5 0.5L11.5 7.5L7.5 11.5Z" fill="#f0e830" stroke="#222" stroke-width="1" /><path d="M3 4L6 7M6 3L8 5" fill="none" stroke="#222" stroke-width="1" /><path d="M8 9l3-3 2 2-3 3z" fill="#222"/><path d="M13 7.5l1.5 1.5-1.5 1.5-1.5-1.5z" fill="#30c0a0"/><path d="M6 10.5l1.5 1.5-1.5 1.5-1.5-1.5z" fill="#30c0a0"/><path d="M11 12.5l1.5 1.5-1.5 1.5-1.5-1.5z" fill="#30c0a0"/></g>
<g transform="translate(1634,123)" shape-rendering="crispEdges"><path d="M0.5 4.5L4.5 0.5L11.5 7.5L7.5 11.5Z" fill="#f0e830" stroke="#222" stroke-width="1" /><path d="M3 4L6 7M6 3L8 5" fill="none" stroke="#222" stroke-width="1" /><path d="M8 9l3-3 2 2-3 3z" fill="#222"/><path d="M6 12L12 15" fill="none" stroke="#3030ff" stroke-width="1" /><path d="M6 10.5l1.5 1.5-1.5 1.5-1.5-1.5z" fill="#30c0a0"/><path d="M12 12.5l1.5 1.5-1.5 1.5-1.5-1.5z" fill="#30c0a0"/><path d="M14 7.5l1.5 1.5-1.5 1.5-1.5-1.5z" fill="#30c0a0"/></g>
<g transform="translate(1657,123)" shape-rendering="crispEdges"><path d="M0.5 4.5L4.5 0.5L11.5 7.5L7.5 11.5Z" fill="#f0e830" stroke="#222" stroke-width="1" /><path d="M3 4L6 7M6 3L8 5" fill="none" stroke="#222" stroke-width="1" /><path d="M8 9l3-3 2 2-3 3z" fill="#222"/><path d="M9 10L15 13L11 16L5 13Z" fill="none" stroke="#3030ff" stroke-width="1" /></g>
<g transform="translate(1691,123)" shape-rendering="crispEdges"><rect x="2" y="2" width="3" height="3" fill="#999"/><rect x="6" y="2" width="3" height="3" fill="#999"/><rect x="11" y="2" width="3" height="3" fill="#999"/><path d="M5 14V8M3 10L5 8L7 10M11 14V8M9 10L11 8L13 10" fill="none" stroke="#999" stroke-width="1" /></g>
<g transform="translate(1713,123)" shape-rendering="crispEdges"><rect x="1" y="7" width="3" height="3" fill="#999"/><rect x="7" y="7" width="3" height="3" fill="#999"/><rect x="13" y="7" width="3" height="3" fill="#999"/><path d="M5 2V6M3 4L5 6L7 4M10 14V10M8 12L10 10L12 12" fill="none" stroke="#999" stroke-width="1" /></g>
<g transform="translate(1735,123)" shape-rendering="crispEdges"><rect x="1" y="12" width="3" height="3" fill="#999"/><rect x="7" y="12" width="3" height="3" fill="#999"/><rect x="13" y="12" width="3" height="3" fill="#999"/><path d="M5 1V7M3 5L5 7L7 5M10 1V7M8 5L10 7L12 5" fill="none" stroke="#999" stroke-width="1" /><path d="M1 14.5H15" fill="none" stroke="#bbb" stroke-width="1" stroke-dasharray="1 1"/></g>
<g transform="translate(1756,123)" shape-rendering="crispEdges"><rect x="1" y="1" width="3" height="3" fill="#999"/><rect x="1" y="7" width="3" height="3" fill="#999"/><rect x="1" y="13" width="3" height="3" fill="#999"/><path d="M1.5 1V15" fill="none" stroke="#bbb" stroke-width="1" stroke-dasharray="1 1"/><path d="M14 5H8M10 3L8 5L10 7M14 11H8M10 9L8 11L10 13" fill="none" stroke="#999" stroke-width="1" /></g>
<g transform="translate(1779,123)" shape-rendering="crispEdges"><rect x="8" y="1" width="3" height="3" fill="#999"/><rect x="8" y="7" width="3" height="3" fill="#999"/><rect x="8" y="13" width="3" height="3" fill="#999"/><path d="M1 4H6M4 2L6 4L4 6M15 11H11M13 9L11 11L13 13" fill="none" stroke="#999" stroke-width="1" /></g>
<g transform="translate(1800,123)" shape-rendering="crispEdges"><rect x="12" y="1" width="3" height="3" fill="#999"/><rect x="12" y="7" width="3" height="3" fill="#999"/><rect x="12" y="13" width="3" height="3" fill="#999"/><path d="M14.5 1V15" fill="none" stroke="#bbb" stroke-width="1" stroke-dasharray="1 1"/><path d="M2 5H8M6 3L8 5L6 7M2 11H8M6 9L8 11L6 13" fill="none" stroke="#999" stroke-width="1" /></g>
<g transform="translate(1823,123)" shape-rendering="crispEdges"><rect x="4" y="10" width="3" height="3" fill="#999"/><rect x="7" y="7" width="3" height="3" fill="#999"/><rect x="11" y="2" width="3" height="3" fill="#999"/><path d="M2 15L14 1" fill="none" stroke="#bbb" stroke-width="1" stroke-dasharray="1.5 1"/><path d="M1 3L5 7M5 4V7H2M15 12L11 8M11 11V8H14" fill="none" stroke="#999" stroke-width="1" /></g>
<rect x="1844" y="116" width="1" height="34" fill="#a0a0a0" />
<g transform="translate(1850,123)" shape-rendering="crispEdges"><rect x="1.5" y="1.5" width="7" height="7" fill="#c8c8c8" stroke="#999" stroke-width="1"/><rect x="4.5" y="4.5" width="7" height="7" fill="#e0e0e0" stroke="#999" stroke-width="1"/><rect x="8.5" y="8.5" width="7" height="7" fill="#c8c8c8" stroke="#999" stroke-width="1"/></g>
<g transform="translate(1873,123)" shape-rendering="crispEdges"><rect x="1.5" y="1.5" width="7" height="7" fill="#c0c0c0" stroke="#999" stroke-width="1"/><rect x="4.5" y="4.5" width="7" height="7" fill="#e4e4e4" stroke="#999" stroke-width="1"/><rect x="8.5" y="8.5" width="7" height="7" fill="#c8c8c8" stroke="#999" stroke-width="1"/></g>
<g transform="translate(1895,123)" shape-rendering="crispEdges"><rect x="1.5" y="1.5" width="7" height="7" fill="#fff" stroke="#999" stroke-width="1"/><rect x="4.5" y="4.5" width="7" height="7" fill="#eee" stroke="#999" stroke-width="1"/><rect x="8.5" y="8.5" width="7" height="7" fill="#c8c8c8" stroke="#999" stroke-width="1"/><path d="M4 4L9 9" fill="none" stroke="#888" stroke-width="1" /></g>
<g transform="translate(1918,123)" shape-rendering="crispEdges"><rect x="1.5" y="1.5" width="7" height="7" fill="#fff" stroke="#999" stroke-width="1"/><rect x="4.5" y="4.5" width="7" height="7" fill="#e8e8e8" stroke="#999" stroke-width="1"/><rect x="8.5" y="8.5" width="7" height="7" fill="#c8c8c8" stroke="#999" stroke-width="1"/></g>
<rect x="0" y="155" width="2560" height="1" fill="#a0a0a0" />
<rect x="0" y="156" width="1" height="459" fill="#fbfcfe" />
<rect x="25" y="156" width="1" height="460" fill="#a0a0a0" />
<rect x="0" y="615" width="26" height="1" fill="#a0a0a0" />
<rect x="4" y="161" width="2" height="2" fill="#a8a8a8"/><rect x="5" y="162" width="1" height="1" fill="#ffffff"/><rect x="8" y="161" width="2" height="2" fill="#a8a8a8"/><rect x="9" y="162" width="1" height="1" fill="#ffffff"/><rect x="12" y="161" width="2" height="2" fill="#a8a8a8"/><rect x="13" y="162" width="1" height="1" fill="#ffffff"/><rect x="16" y="161" width="2" height="2" fill="#a8a8a8"/><rect x="17" y="162" width="1" height="1" fill="#ffffff"/><rect x="20" y="161" width="2" height="2" fill="#a8a8a8"/><rect x="21" y="162" width="1" height="1" fill="#ffffff"/>
<g transform="translate(5,169)" shape-rendering="crispEdges"><path d="M3.5 1.5V12.5L6 10L8.5 14.5L10 13.5L7.5 9.5H11Z" fill="#fff" stroke="#333" stroke-width="1" /></g>
<g transform="translate(5,192)" shape-rendering="crispEdges"><path d="M1.5 14Q2 6 8 2" fill="none" stroke="#333" stroke-width="1" /><rect x="4" y="5" width="3" height="3" fill="#3030ff"/><path d="M8.5 7.5V15L10.5 13L12 16L13 15.5L11.5 12.5H14Z" fill="#fff" stroke="#333" stroke-width="1" /></g>
<g transform="translate(5,214)" shape-rendering="crispEdges"><path d="M8.5 1V15" fill="none" stroke="#999" stroke-width="1" stroke-dasharray="2.2 1.6" shape-rendering="geometricPrecision"/><rect x="7.5" y="7.5" width="2" height="2" fill="#fff" stroke="#2828ff"/></g>
<g transform="translate(5,234)" shape-rendering="crispEdges"><path d="M3 13L13 3" fill="none" stroke="#333" stroke-width="1" /><rect x="1.5" y="12.5" width="2" height="2" fill="#fff" stroke="#2828ff"/><rect x="12.5" y="1.5" width="2" height="2" fill="#fff" stroke="#2828ff"/></g>
<g transform="translate(5,257)" shape-rendering="crispEdges"><path d="M2.5 12Q1.5 3 8 2.5Q14.5 3 14 12" fill="none" stroke="#333" stroke-width="1" /><rect x="1.5" y="11.5" width="2" height="2" fill="#fff" stroke="#2828ff"/><rect x="7.5" y="9.5" width="2" height="2" fill="#fff" stroke="#2828ff"/><rect x="12.5" y="9.5" width="2" height="2" fill="#fff" stroke="#2828ff"/></g>
<g transform="translate(5,280)" shape-rendering="crispEdges"><path d="M2.5 13Q5 1 8 2Q11 1 13.5 13" fill="none" stroke="#333" stroke-width="1" /><rect x="1.5" y="11.5" width="2" height="2" fill="#fff" stroke="#2828ff"/><rect x="4.5" y="2.5" width="2" height="2" fill="#fff" stroke="#2828ff"/><rect x="10.5" y="2.5" width="2" height="2" fill="#fff" stroke="#2828ff"/><rect x="12.5" y="11.5" width="2" height="2" fill="#fff" stroke="#2828ff"/></g>
<g transform="translate(5,301)" shape-rendering="crispEdges"><circle cx="8" cy="8" r="1.6" fill="#222" stroke="none" stroke-width="1" /></g>
<g transform="translate(5,324)" shape-rendering="crispEdges"><text x="1" y="15" font-family="Liberation Sans" font-size="17" fill="#333">A</text></g>
<g transform="translate(5,345)" shape-rendering="crispEdges"><rect x="1.5" y="1.5" width="7" height="7" fill="#fff" stroke="#333" stroke-width="1"/><rect x="4" y="5" width="11" height="10" fill="#4040ff"/><path d="M5 2H9Q14 4 14 8L11 13" fill="none" stroke="#ff3030" stroke-width="1.3" /><rect x="2" y="2" width="3" height="3" fill="#ff3030"/></g>
<g transform="translate(5,375)" shape-rendering="crispEdges"><text x="0" y="9" font-family="Liberation Sans" font-size="7.5" fill="#333">3D</text><path d="M1.5 14.5H7.5L13.5 8.5L8.5 2.5" fill="none" stroke="#333" stroke-width="1" /><rect x="0.5" y="13.5" width="2" height="2" fill="#fff" stroke="#2828ff"/><rect x="6.5" y="13.5" width="2" height="2" fill="#fff" stroke="#2828ff"/><rect x="12.5" y="7.5" width="2" height="2" fill="#fff" stroke="#2828ff"/><rect x="7.5" y="1.5" width="2" height="2" fill="#fff" stroke="#2828ff"/></g>
<g transform="translate(5,395)" shape-rendering="crispEdges"><circle cx="8" cy="8" r="6.5" fill="#b8b8b8" stroke="#555" stroke-width="1.2" /><circle cx="7" cy="7" r="3" fill="#e8e8e8" stroke="none" stroke-width="1" /><rect x="7.5" y="7.5" width="2" height="2" fill="#fff" stroke="#2828ff"/><rect x="12.5" y="7.5" width="2" height="2" fill="#fff" stroke="#2828ff"/></g>
<g transform="translate(5,418)" shape-rendering="crispEdges"><path d="M2.5 9.5L6.5 2.5Q12 1.5 14.5 5.5L10.5 12.5Q5 14.5 2.5 9.5Z" fill="#fff" stroke="#444" stroke-width="1.1" /><path d="M6.5 2.5Q8.5 6.5 14.5 5.5" fill="none" stroke="#444" stroke-width="1" /><path d="M2.5 9.5Q5 14 10.5 12.5" fill="none" stroke="#3030ff" stroke-width="1.3" /><path d="M10 8L13 7L11 12Z" fill="#bbb"/></g>
<g transform="translate(5,445)" shape-rendering="crispEdges"><path d="M2 1.5H14M2 14.5H14" fill="none" stroke="#888" stroke-width="1" /><path d="M8 3V13M3 8H13" fill="none" stroke="#555" stroke-width="1" /><path d="M8 2.5l-2.5 3h5zM8 13.5l-2.5-3h5zM2.5 8l3-2.5v5zM13.5 8l-3-2.5v5z" fill="#555"/></g>
<g transform="translate(5,474)" shape-rendering="crispEdges"><path d="M3.5 4.5L7.5 1.5H11.5V11.5L7.5 14.5H3.5Z" fill="#a8a8a8" stroke="#333" stroke-width="1" /><path d="M3.5 4.5H7.5V14.5M7.5 4.5L11.5 1.5" fill="none" stroke="#333" stroke-width="1" /><rect x="2.5" y="12.5" width="2" height="2" fill="#fff" stroke="#2828ff"/><rect x="10.5" y="10.5" width="2" height="2" fill="#fff" stroke="#2828ff"/></g>
<g transform="translate(5,495)" shape-rendering="crispEdges"><path d="M4 1.5H12L14.5 4.5V7L15 9L14.5 11.5L12 14.5H4L1.5 11.5V4.5Z" fill="#ee3030"/><path d="M6 0h4v3h-4zM6 13h4v3h-4zM0 6h3v4h-3zM13 6h3v4h-3z" fill="#f0f0f0"/><path d="M4 3h8l2 2v6l-2 2h-8l-2-2v-6z" fill="#ee3030"/></g>
<g transform="translate(5,523)" shape-rendering="crispEdges"><rect x="4.5" y="1.5" width="10" height="10" fill="none" stroke="#3030a0" stroke-width="1.5"/><rect x="7.5" y="4.5" width="5" height="5" fill="none" stroke="#3030a0" stroke-width="1.2"/><rect x="3" y="0" width="3" height="3" fill="#3030a0"/><rect x="13" y="0" width="3" height="3" fill="#3030a0"/><rect x="13" y="10" width="3" height="3" fill="#3030a0"/><rect x="1.5" y="8.5" width="6" height="6" fill="#fff" stroke="#222" stroke-width="1"/><path d="M3 10L6 13M3 10H5M3 10V12" fill="none" stroke="#222" stroke-width="1" /></g>
<g transform="translate(5,545)" shape-rendering="crispEdges"><rect x="1.5" y="1.5" width="6" height="6" fill="none" stroke="#aaa" stroke-width="1"/><path d="M2 2L6 6" fill="none" stroke="#aaa" stroke-width="1" /><rect x="6.5" y="7.5" width="6" height="6" fill="none" stroke="#aaa" stroke-width="1"/><rect x="8.5" y="9.5" width="3" height="3" fill="none" stroke="#aaa" stroke-width="1"/><rect x="5" y="14" width="2" height="2" fill="#aaa"/><rect x="13" y="6" width="2" height="2" fill="#aaa"/><rect x="13" y="14" width="2" height="2" fill="#aaa"/></g>
<g transform="translate(5,567)" shape-rendering="crispEdges"><path d="M1.5 14.5V9.5H5L6 10.5H11" fill="#e8e870" stroke="#333" stroke-width="1" /><path d="M1.5 14.5L4 11H14L11.5 14.5Z" fill="#a8a848" stroke="#333" stroke-width="1" /><rect x="6.5" y="1.5" width="9" height="8" fill="#40d0f0" stroke="#3030a0" stroke-width="1"/><path d="M7 9L10 6L12 8L15 5" fill="none" stroke="#30a030" stroke-width="1" /><circle cx="13" cy="4" r="1" fill="#f0f000" stroke="none" stroke-width="1" /></g>
<g transform="translate(5,596)" shape-rendering="crispEdges"><path d="M1 2L6 7M3 0L5 5M0 5L5 6M7 1L5 5" fill="none" stroke="#e8e030" stroke-width="1" /><rect x="4.5" y="6.5" width="10" height="9" fill="#fff" stroke="#333" stroke-width="1.2"/><circle cx="9.5" cy="11" r="3" fill="none" stroke="#555" stroke-width="1" /><path d="M9.5 8V14M6.5 11H12.5" fill="none" stroke="#888" stroke-width="1" /></g>
<rect x="4" y="367" width="18" height="1" fill="#a0a0a0" />
<rect x="4" y="438" width="18" height="1" fill="#a0a0a0" />
<rect x="4" y="467" width="18" height="1" fill="#a0a0a0" />
<rect x="4" y="516" width="18" height="1" fill="#a0a0a0" />
<rect x="4" y="588" width="18" height="1" fill="#a0a0a0" />
<path d="M24 182v4h-4z" fill="#000"/>
<path d="M24 226v4h-4z" fill="#000"/>
<path d="M24 248v4h-4z" fill="#000"/>
<path d="M24 270v4h-4z" fill="#000"/>
<path d="M24 293v4h-4z" fill="#000"/>
<path d="M24 314v4h-4z" fill="#000"/>
<path d="M24 336v4h-4z" fill="#000"/>
<path d="M24 358v4h-4z" fill="#000"/>
<path d="M24 386v4h-4z" fill="#000"/>
<path d="M24 408v4h-4z" fill="#000"/>
<path d="M24 430v4h-4z" fill="#000"/>
<path d="M24 458v4h-4z" fill="#000"/>
<path d="M24 487v4h-4z" fill="#000"/>
<path d="M24 508v4h-4z" fill="#000"/>
<path d="M24 536v4h-4z" fill="#000"/>
<path d="M24 558v4h-4z" fill="#000"/>
<path d="M24 580v4h-4z" fill="#000"/>
<path d="M24 608v4h-4z" fill="#000"/>
<defs><linearGradient id="tg" x1="0" y1="0" x2="0" y2="1"><stop offset="0" stop-color="#b9c9db"/><stop offset="1" stop-color="#d8e4f1"/></linearGradient><linearGradient id="sh" x1="0" y1="0" x2="1" y2="0"><stop offset="0" stop-color="#fdfdfe"/><stop offset="1" stop-color="#e6ecf3"/></linearGradient></defs>
<rect x="26" y="156" width="301" height="1" fill="#5a5a5a" />
<rect x="26" y="156" width="1" height="23" fill="#5a5a5a" />
<rect x="326" y="156" width="1" height="23" fill="#5a5a5a" />
<rect x="27" y="157" width="299" height="22" fill="url(#tg)" />
<text x="30" y="171.5" font-family="Liberation Sans" font-size="13" fill="#000" stroke="#000" stroke-width="0.22" textLength="28" lengthAdjust="spacingAndGlyphs" >Layer</text>
<g transform="translate(290,159)" shape-rendering="crispEdges"><ellipse cx="10" cy="6" rx="4.5" ry="4.5" fill="#e8e8e8" stroke="#aaa"/><ellipse cx="7" cy="9" rx="4" ry="4" fill="#d0d0d0" stroke="#aaa"/><circle cx="10.5" cy="5" r="2" fill="#fff" stroke="none" stroke-width="1" /><path d="M4.5 11.5L1 15" fill="none" stroke="#999" stroke-width="1.6" /></g>
<rect x="310" y="160" width="14" height="14" fill="#a6a6a6" rx="1"/>
<path d="M313 163L321 171M321 163L313 171" stroke="#fff" stroke-width="2.2"/>
<rect x="331" y="156" width="1" height="1178" fill="#a8a8a8" />
<g transform="translate(34,188)" shape-rendering="crispEdges"><rect x="1.5" y="1.5" width="12" height="14" fill="#fff" stroke="#888" stroke-width="1.3"/><path d="M4 8Q4 4 8 4H10M11 9Q11 12 7 12H5" fill="none" stroke="#108010" stroke-width="1.6" /><path d="M9 2l3 2-3 2zM6 10l-3 2 3 2z" fill="#108010"/></g>
<rect x="55" y="186" width="1" height="20" fill="#a0a0a0" />
<g transform="translate(63,188)" shape-rendering="crispEdges"><path d="M7 3L9 1H13L15 3L11 5H7Z" fill="#00ffff" stroke="#000" stroke-width="1" /><path d="M6 6L8 4H12L14 6L10 8H6Z" fill="#ffff00" stroke="#000" stroke-width="1" /><path d="M8 9L10 7H13L15 9L11 11H8Z" fill="#00ff00" stroke="#000" stroke-width="1" /><path d="M1 7.5H10L7 11V15H5V11Z" fill="#fff" stroke="#000" stroke-width="1" /></g>
<g transform="translate(86,188)" shape-rendering="crispEdges"><path d="M1 9.5H10L7 13V16H5V13Z" fill="#000" stroke="#000" stroke-width="1" /><path d="M4 8L9 3Q10 2 12 2H15V6L12 5L8 9" fill="#000" stroke="#000" stroke-width="1" /><path d="M15 1V6" fill="none" stroke="#000" stroke-width="2" /></g>
<g transform="translate(108,188)" shape-rendering="crispEdges"><rect x="6.5" y="1.5" width="9" height="8" fill="#fff" stroke="#3030a0" stroke-width="1.4"/><rect x="8" y="3" width="6" height="5" fill="#00e0ff"/><path d="M1 11.5L4 14.5H11L8 11.5Z" fill="#00ff00" stroke="#000" stroke-width="1" /><path d="M1 8.5L4 11.5H11L8 8.5Z" fill="#ffff00" stroke="#000" stroke-width="1" /></g>
<rect x="130" y="186" width="1" height="20" fill="#a0a0a0" />
<g transform="translate(138,188)" shape-rendering="crispEdges"><path d="M4 1.5Q2 1.5 2 4V6.5Q2 8 0.5 8Q2 8 2 9.5V12Q2 14.5 4 14.5M12 1.5Q14 1.5 14 4V6.5Q14 8 15.5 8Q14 8 14 9.5V12Q14 14.5 12 14.5" fill="none" stroke="#000" stroke-width="1.3" /><path d="M4 3L6 1.5H9L11 3L8 4.5H5Z" fill="#3030ff"/><path d="M4 5L6 3.5H9L11 5L8 6.5H5Z" fill="#c0c000"/><path d="M5 9L7 7.5H10L12 9L9 10.5H6Z" fill="#00c000"/><path d="M5 11L7 9.5H10L12 11L9 12.5H6Z" fill="#ff0000"/></g>
<g transform="translate(33,220)" shape-rendering="crispEdges"><path d="M1 1h1v1h-1zM4 1h1v1h-1zM7 1h1v1h-1zM2 3h1v1h-1zM6 3h1v1h-1zM1 5h1v1h-1zM4 5h1v1h-1zM7 5h1v1h-1zM2 7h1v1h-1zM6 7h1v1h-1z" fill="#e8e000"/><path d="M2.5 10.5L5 9H10L13 12.5H6Z" fill="#00ffff" stroke="#000" stroke-width="1" /></g>
<g transform="translate(57,220)" shape-rendering="crispEdges"><path d="M3.5 4L12.5 13M12.5 4L3.5 13" fill="none" stroke="#555" stroke-width="2.6" /></g>
<g transform="translate(80,220)" shape-rendering="crispEdges"><path d="M2.5 8.5L6.5 12.5L13.5 4" fill="none" stroke="#0000c0" stroke-width="3.2" /><path d="M2.5 8.5L6.5 12.5L13.5 4" fill="none" stroke="#00e000" stroke-width="1.8" /></g>
<rect x="101" y="218" width="1" height="20" fill="#a0a0a0" />
<g transform="translate(110,220)" shape-rendering="crispEdges"><path d="M1 3.5L3 2H7L9 3.5L7 5H3Z" fill="#00ffff" stroke="#000" stroke-width="1" /><path d="M1 5.5L3 4H7L9 5.5L7 7H3Z" fill="#ffff00" stroke="#000" stroke-width="1" /><path d="M1 7.5L3 6H7L9 7.5L7 9H3Z" fill="#00ff00" stroke="#000" stroke-width="1" /><path d="M9.5 7.5V15L11.5 13L13 16L14 15.5L12.5 12.5H15Z" fill="#fff" stroke="#000" stroke-width="1" /></g>
<g transform="translate(132,220)" shape-rendering="crispEdges"><path d="M1.5 5.5H11.5V14.5H1.5Z" fill="#fff" stroke="#000" stroke-width="1.5" /><path d="M3.5 10.5H5M6.5 10.5H10M3.5 12.5H5M6.5 12.5H10" fill="none" stroke="#000" stroke-width="1" /><path d="M3 7L7 3H12L14 5L12 7" fill="#fff" stroke="#000" stroke-width="1" /><rect x="14" y="1" width="2" height="5" fill="#3030a0"/><path d="M5 5L9 9M7 3L11 7" fill="none" stroke="#000" stroke-width="0.6" /></g>
<rect x="153" y="218" width="1" height="20" fill="#a0a0a0" />
<g transform="translate(161,220)" shape-rendering="crispEdges"><g transform="translate(0,-3.5) scale(1,0.8)"><g shape-rendering="geometricPrecision"><path d="M1.5 8Q8 2.5 14.5 8Q8 13.5 1.5 8Z" fill="#fff" stroke="#777" stroke-width="1.1"/><circle cx="8" cy="8" r="2.3" fill="#0000ff" stroke="none" stroke-width="1" /><rect x="7" y="6.5" width="2" height="1.5" fill="#40e0ff"/></g></g><g transform="translate(0,4) scale(1,0.8)"><g shape-rendering="geometricPrecision"><path d="M1.5 8Q8 2.5 14.5 8Q8 13.5 1.5 8Z" fill="#fff" stroke="#777" stroke-width="1.1"/><circle cx="8" cy="8" r="2.3" fill="#0000ff" stroke="none" stroke-width="1" /><rect x="7" y="6.5" width="2" height="1.5" fill="#40e0ff"/></g></g></g>
<g transform="translate(185,220)" shape-rendering="crispEdges"><rect x="5.5" y="0.5" width="6" height="6" fill="#fff" stroke="#000" stroke-width="1"/><path d="M6 6L11 1V6Z" fill="#000"/><g transform="translate(0,4) scale(1,0.8)"><g shape-rendering="geometricPrecision"><path d="M1.5 8Q8 2.5 14.5 8Q8 13.5 1.5 8Z" fill="#fff" stroke="#777" stroke-width="1.1"/><circle cx="8" cy="8" r="2.3" fill="#0000ff" stroke="none" stroke-width="1" /><rect x="7" y="6.5" width="2" height="1.5" fill="#40e0ff"/></g></g></g>
<g transform="translate(207,220)" shape-rendering="crispEdges"><ellipse cx="8" cy="8" rx="6" ry="2.6" fill="#fff" stroke="#444" stroke-width="1.3"/><circle cx="8" cy="8" r="2.3" fill="#0000a0" stroke="none" stroke-width="1" /><rect x="7" y="7" width="2" height="1.5" fill="#3030ff"/></g>
<rect x="228" y="218" width="1" height="20" fill="#a0a0a0" />
<g transform="translate(236,220)" shape-rendering="crispEdges"><g transform="translate(3,-2) scale(0.62)"><g transform="translate(0,0)"><path d="M5.5 7V4.5Q5.5 2 8 2Q10.5 2 10.5 4.5V7" fill="none" stroke="#000" stroke-width="1.3" /><rect x="3.5" y="6.5" width="9" height="7" fill="#ffff00" stroke="#000" stroke-width="1.3"/><rect x="7" y="9" width="2" height="2" fill="#000"/></g></g><g transform="translate(3,6.5) scale(0.62)"><g transform="translate(0,0)"><path d="M5.5 7V4.5Q5.5 2 8 2Q10.5 2 10.5 4.5V7" fill="none" stroke="#000" stroke-width="1.3" /><rect x="3.5" y="6.5" width="9" height="7" fill="#ffff00" stroke="#000" stroke-width="1.3"/><rect x="7" y="9" width="2" height="2" fill="#000"/></g></g></g>
<g transform="translate(259,220)" shape-rendering="crispEdges"><rect x="5.5" y="0.5" width="6" height="6" fill="#fff" stroke="#000" stroke-width="1"/><path d="M6 6L11 1V6Z" fill="#000"/><g transform="translate(3,6.5) scale(0.62)"><g transform="translate(0,0)"><path d="M5.5 7V4.5Q5.5 2 8 2Q10.5 2 10.5 4.5V7" fill="none" stroke="#000" stroke-width="1.3" /><rect x="3.5" y="6.5" width="9" height="7" fill="#ffff00" stroke="#000" stroke-width="1.3"/><rect x="7" y="9" width="2" height="2" fill="#000"/></g></g></g>
<g transform="translate(282,220)" shape-rendering="crispEdges"><g transform="translate(0,0)"><path d="M5.5 7V4.5Q5.5 2 8 2Q10.5 2 10.5 4.5V7" fill="none" stroke="#000" stroke-width="1.3" /><rect x="3.5" y="6.5" width="9" height="7" fill="#ffff00" stroke="#000" stroke-width="1.3"/><rect x="7" y="9" width="2" height="2" fill="#000"/></g></g>
<rect x="303" y="218" width="1" height="20" fill="#a0a0a0" />
<g transform="translate(311,220)" shape-rendering="crispEdges"><text x="0" y="14" font-family="Liberation Serif" font-size="14" font-weight="bold" fill="#000080">L</text><path d="M12.5 4V10M9.5 5.5L15.5 8.5M15.5 5.5L9.5 8.5" fill="none" stroke="#3030ff" stroke-width="1.4" /></g>
<rect x="30.5" y="248.5" width="292" height="149" fill="#ffffff" stroke="#a0a0a0" stroke-width="1" />
<rect x="69" y="249" width="55" height="18" fill="#c5def5" />
<rect x="39.5" y="255.5" width="9" height="9" fill="#f4f4f4" stroke="#a0a0a0" stroke-width="1" />
<rect x="41" y="259" width="6" height="1" fill="#3c5a9a" />
<path d="M50 259.5h3 M62.5 268v27 M63 276.5h8 M63 294.5h8" stroke="#555" stroke-width="1" stroke-dasharray="1 1"/>
<g transform="translate(52,250)" shape-rendering="crispEdges"><path d="M6 12H12L15 15H9Z" fill="#c8c8c8"/><path d="M9 9H12L15 12H12Z" fill="#c8c8c8"/><path d="M9 6H12L15 9H12Z" fill="#c8c8c8"/><path d="M1.5 6.5H8L11.5 10.5H5Z" fill="#00ff00" stroke="#000" stroke-width="1" /><path d="M1.5 3.5H8L11.5 7.5H5Z" fill="#ffff00" stroke="#000" stroke-width="1" /><path d="M1.5 0.5H8L11.5 4.5H5Z" fill="#00ffff" stroke="#000" stroke-width="1" /></g>
<g transform="translate(72,268)" shape-rendering="crispEdges"><path d="M4 1.5Q2 1.5 2 4V6.5Q2 8 0.5 8Q2 8 2 9.5V12Q2 14.5 4 14.5M12 1.5Q14 1.5 14 4V6.5Q14 8 15.5 8Q14 8 14 9.5V12Q14 14.5 12 14.5" fill="none" stroke="#000" stroke-width="1.3" /><path d="M4 3L6 1.5H9L11 3L8 4.5H5Z" fill="#3030ff"/><path d="M4 5L6 3.5H9L11 5L8 6.5H5Z" fill="#c0c000"/><path d="M5 9L7 7.5H10L12 9L9 10.5H6Z" fill="#00c000"/><path d="M5 11L7 9.5H10L12 11L9 12.5H6Z" fill="#ff0000"/></g>
<g transform="translate(72,286)" shape-rendering="crispEdges"><path d="M6 3L8 1H12L14 3L10 5H6Z" fill="#c8c8c8" stroke="#000" stroke-width="1" /><path d="M6 6L8 4H12L14 6L10 8H6Z" fill="#c8c8c8" stroke="#000" stroke-width="1" /><path d="M7 9L9 7H12L14 9L10 11H7Z" fill="#c8c8c8" stroke="#000" stroke-width="1" /><path d="M1 8.5H10L7 12V15H5V12Z" fill="#aaa" stroke="#000" stroke-width="1" /></g>
<text x="72" y="262.5" font-family="Liberation Sans" font-size="13" fill="#000" stroke="#000" stroke-width="0.22" textLength="50" lengthAdjust="spacingAndGlyphs" >Layer (12)</text>
<text x="91" y="280.5" font-family="Liberation Sans" font-size="13" fill="#000" stroke="#000" stroke-width="0.22" textLength="85.5" lengthAdjust="spacingAndGlyphs" >LayersTemplates</text>
<text x="91" y="298.5" font-family="Liberation Sans" font-size="13" fill="#000" stroke="#000" stroke-width="0.22" textLength="63.5" lengthAdjust="spacingAndGlyphs" >LayersFilters</text>
<rect x="30" y="402" width="293" height="924" fill="#ffffff" />
<rect x="30" y="402" width="1" height="924" fill="#a0a0a0" />
<rect x="30" y="402" width="293" height="1" fill="#a0a0a0" />
<rect x="31" y="403" width="290" height="23" fill="#f0f0f0" />
<rect x="31" y="426" width="290" height="1" fill="#8c8c8c" />
<rect x="31" y="425" width="290" height="1" fill="#b4b4b4" />
<rect x="150" y="403" width="1" height="23" fill="#8c8c8c" />
<rect x="151" y="403" width="1" height="23" fill="#d8d8d8" />
<rect x="176" y="403" width="1" height="23" fill="#8c8c8c" />
<rect x="177" y="403" width="1" height="23" fill="#d8d8d8" />
<rect x="202" y="403" width="1" height="23" fill="#8c8c8c" />
<rect x="203" y="403" width="1" height="23" fill="#d8d8d8" />
<rect x="228" y="403" width="1" height="23" fill="#8c8c8c" />
<rect x="229" y="403" width="1" height="23" fill="#d8d8d8" />
<rect x="254" y="403" width="1" height="23" fill="#8c8c8c" />
<rect x="255" y="403" width="1" height="23" fill="#d8d8d8" />
<text x="37.8" y="418.75" font-family="Liberation Sans" font-size="13" fill="#000" stroke="#000" stroke-width="0.22" textLength="31" lengthAdjust="spacingAndGlyphs" >Name</text>
<g transform="translate(156,406)" shape-rendering="crispEdges"><path d="M3 8L6.5 12L13 3" fill="none" stroke="#707070" stroke-width="1.5" transform="translate(1,1)"/><path d="M3 8L6.5 12L13 3" fill="none" stroke="#008000" stroke-width="2" /></g>
<g transform="translate(182,406)" shape-rendering="crispEdges"><g shape-rendering="geometricPrecision"><path d="M1.5 8Q8 2.5 14.5 8Q8 13.5 1.5 8Z" fill="#fff" stroke="#777" stroke-width="1.1"/><circle cx="8" cy="8" r="2.3" fill="#0000ff" stroke="none" stroke-width="1" /><rect x="7" y="6.5" width="2" height="1.5" fill="#40e0ff"/></g></g>
<g transform="translate(208,406)" shape-rendering="crispEdges"><g transform="translate(0,0)"><path d="M5.5 7V4.5Q5.5 2 8 2Q10.5 2 10.5 4.5V7" fill="none" stroke="#000" stroke-width="1.3" /><rect x="3.5" y="6.5" width="9" height="7" fill="#ffff00" stroke="#000" stroke-width="1.3"/><rect x="7" y="9" width="2" height="2" fill="#000"/></g></g>
<g transform="translate(234,406)" shape-rendering="crispEdges"><g shape-rendering="geometricPrecision"><path d="M8 1.5Q14.5 1.5 14.5 7.5Q14.5 10 12.5 10Q10.5 10 11 12Q11.5 14.5 8 14.5Q1.5 14.5 1.5 8Q1.5 1.5 8 1.5Z" fill="#ffffc0" stroke="#999" stroke-width="1" /><circle cx="9" cy="5" r="1.6" fill="#ffe000" stroke="none" stroke-width="1" /><circle cx="5" cy="11" r="1.3" fill="#ffe000" stroke="none" stroke-width="1" /><circle cx="6" cy="5" r="1.5" fill="#ff0000" stroke="none" stroke-width="1" /><circle cx="4" cy="9" r="1.5" fill="#00a000" stroke="none" stroke-width="1" /><circle cx="7" cy="12" r="1.5" fill="#0000ff" stroke="none" stroke-width="1" /><circle cx="11" cy="13" r="1.2" fill="#ff00ff" stroke="none" stroke-width="1" /></g></g>
<path d="M262 414.5h3M267 414.5h2M271 414.5h3" stroke="#000080" stroke-width="2"/>
<text x="281.5" y="418.5" font-family="Liberation Sans" font-size="13" fill="#000" stroke="#000" stroke-width="0.22" textLength="39.5" lengthAdjust="spacingAndGlyphs" >Line St..</text>
<rect x="31" y="445" width="292" height="1" fill="#efefef" />
<rect x="31" y="464" width="292" height="1" fill="#efefef" />
<rect x="31" y="483" width="292" height="1" fill="#efefef" />
<rect x="31" y="502" width="292" height="1" fill="#efefef" />
<rect x="31" y="521" width="292" height="1" fill="#efefef" />
<rect x="31" y="540" width="292" height="1" fill="#efefef" />
<rect x="31" y="559" width="292" height="1" fill="#efefef" />
<rect x="31" y="578" width="292" height="1" fill="#efefef" />
<rect x="31" y="597" width="292" height="1" fill="#efefef" />
<rect x="31" y="616" width="292" height="1" fill="#efefef" />
<rect x="31" y="635" width="292" height="1" fill="#efefef" />
<rect x="31" y="654" width="292" height="1" fill="#efefef" />
<rect x="31" y="673" width="292" height="1" fill="#efefef" />
<rect x="31" y="692" width="292" height="1" fill="#efefef" />
<rect x="31" y="711" width="292" height="1" fill="#efefef" />
<rect x="31" y="730" width="292" height="1" fill="#efefef" />
<rect x="31" y="749" width="292" height="1" fill="#efefef" />
<rect x="31" y="768" width="292" height="1" fill="#efefef" />
<rect x="31" y="787" width="292" height="1" fill="#efefef" />
<rect x="31" y="806" width="292" height="1" fill="#efefef" />
<rect x="31" y="825" width="292" height="1" fill="#efefef" />
<rect x="31" y="844" width="292" height="1" fill="#efefef" />
<rect x="31" y="863" width="292" height="1" fill="#efefef" />
<rect x="31" y="882" width="292" height="1" fill="#efefef" />
<rect x="31" y="901" width="292" height="1" fill="#efefef" />
<rect x="31" y="920" width="292" height="1" fill="#efefef" />
<rect x="31" y="939" width="292" height="1" fill="#efefef" />
<rect x="31" y="958" width="292" height="1" fill="#efefef" />
<rect x="31" y="977" width="292" height="1" fill="#efefef" />
<rect x="31" y="996" width="292" height="1" fill="#efefef" />
<rect x="31" y="1015" width="292" height="1" fill="#efefef" />
<rect x="31" y="1034" width="292" height="1" fill="#efefef" />
<rect x="31" y="1053" width="292" height="1" fill="#efefef" />
<rect x="31" y="1072" width="292" height="1" fill="#efefef" />
<rect x="31" y="1091" width="292" height="1" fill="#efefef" />
<rect x="31" y="1110" width="292" height="1" fill="#efefef" />
<rect x="31" y="1129" width="292" height="1" fill="#efefef" />
<rect x="31" y="1148" width="292" height="1" fill="#efefef" />
<rect x="31" y="1167" width="292" height="1" fill="#efefef" />
<rect x="31" y="1186" width="292" height="1" fill="#efefef" />
<rect x="31" y="1205" width="292" height="1" fill="#efefef" />
<rect x="31" y="1224" width="292" height="1" fill="#efefef" />
<rect x="31" y="1243" width="292" height="1" fill="#efefef" />
<rect x="31" y="1262" width="292" height="1" fill="#efefef" />
<rect x="31" y="1281" width="292" height="1" fill="#efefef" />
<rect x="31" y="1300" width="292" height="1" fill="#efefef" />
<rect x="151" y="427" width="1" height="883" fill="#efefef" />
<rect x="177" y="427" width="1" height="883" fill="#efefef" />
<rect x="203" y="427" width="1" height="883" fill="#efefef" />
<rect x="229" y="427" width="1" height="883" fill="#efefef" />
<rect x="255" y="427" width="1" height="883" fill="#efefef" />
<rect x="31" y="427" width="120" height="18" fill="#c6dcf1" />
<g transform="translate(32,428)" shape-rendering="crispEdges"><path d="M6 12H12L15 15H9Z" fill="#c8c8c8"/><path d="M9 9H12L15 12H12Z" fill="#c8c8c8"/><path d="M9 6H12L15 9H12Z" fill="#c8c8c8"/><path d="M1.5 6.5H8L11.5 10.5H5Z" fill="#00ff00" stroke="#000" stroke-width="1" /><path d="M1.5 3.5H8L11.5 7.5H5Z" fill="#ffff00" stroke="#000" stroke-width="1" /><path d="M1.5 0.5H8L11.5 4.5H5Z" fill="#00ffff" stroke="#000" stroke-width="1" /></g>
<text x="53" y="439" font-family="Liberation Sans" font-size="13" fill="#000" stroke="#000" stroke-width="0.22" >0</text>
<g transform="translate(155,428)" shape-rendering="crispEdges"><path d="M3 8L6.5 12L13 3" fill="none" stroke="#707070" stroke-width="1.5" transform="translate(1,1)"/><path d="M3 8L6.5 12L13 3" fill="none" stroke="#008000" stroke-width="2" /></g>
<g transform="translate(181,428)" shape-rendering="crispEdges"><g shape-rendering="geometricPrecision"><path d="M1.5 8Q8 2.5 14.5 8Q8 13.5 1.5 8Z" fill="#fff" stroke="#777" stroke-width="1.1"/><circle cx="8" cy="8" r="2.3" fill="#0000ff" stroke="none" stroke-width="1" /><rect x="7" y="6.5" width="2" height="1.5" fill="#40e0ff"/></g></g>
<rect x="231.5" y="428.5" width="20" height="15" fill="#000000" stroke="#8c8c8c" stroke-width="1" />
<rect x="258" y="436" width="65" height="1" fill="#000" />
<g transform="translate(32,446)" shape-rendering="crispEdges"><path d="M6 12H12L15 15H9Z" fill="#c8c8c8"/><path d="M9 9H12L15 12H12Z" fill="#c8c8c8"/><path d="M9 6H12L15 9H12Z" fill="#c8c8c8"/><path d="M1.5 6.5H8L11.5 10.5H5Z" fill="#00ff00" stroke="#000" stroke-width="1" /><path d="M1.5 3.5H8L11.5 7.5H5Z" fill="#ffff00" stroke="#000" stroke-width="1" /><path d="M1.5 0.5H8L11.5 4.5H5Z" fill="#00ffff" stroke="#000" stroke-width="1" /></g>
<text x="53" y="458" font-family="Liberation Sans" font-size="13" fill="#000" stroke="#000" stroke-width="0.22" textLength="50" lengthAdjust="spacingAndGlyphs" >Defpoints</text>
<g transform="translate(181,446)" shape-rendering="crispEdges"><g shape-rendering="geometricPrecision"><path d="M1.5 8Q8 2.5 14.5 8Q8 13.5 1.5 8Z" fill="#fff" stroke="#777" stroke-width="1.1"/><circle cx="8" cy="8" r="2.3" fill="#0000ff" stroke="none" stroke-width="1" /><rect x="7" y="6.5" width="2" height="1.5" fill="#40e0ff"/></g></g>
<rect x="231.5" y="447.5" width="20" height="15" fill="#000000" stroke="#8c8c8c" stroke-width="1" />
<rect x="258" y="455" width="65" height="1" fill="#000" />
<g transform="translate(32,466)" shape-rendering="crispEdges"><path d="M6 12H12L15 15H9Z" fill="#c8c8c8"/><path d="M9 9H12L15 12H12Z" fill="#c8c8c8"/><path d="M9 6H12L15 9H12Z" fill="#c8c8c8"/><path d="M1.5 6.5H8L11.5 10.5H5Z" fill="#00ff00" stroke="#000" stroke-width="1" /><path d="M1.5 3.5H8L11.5 7.5H5Z" fill="#ffff00" stroke="#000" stroke-width="1" /><path d="M1.5 0.5H8L11.5 4.5H5Z" fill="#00ffff" stroke="#000" stroke-width="1" /></g>
<text x="53" y="477" font-family="Liberation Sans" font-size="13" fill="#000" stroke="#000" stroke-width="0.22" textLength="41.5" lengthAdjust="spacingAndGlyphs" >Zeberka</text>
<g transform="translate(181,466)" shape-rendering="crispEdges"><g shape-rendering="geometricPrecision"><path d="M1.5 8Q8 2.5 14.5 8Q8 13.5 1.5 8Z" fill="#fff" stroke="#777" stroke-width="1.1"/><circle cx="8" cy="8" r="2.3" fill="#0000ff" stroke="none" stroke-width="1" /><rect x="7" y="6.5" width="2" height="1.5" fill="#40e0ff"/></g></g>
<rect x="231.5" y="466.5" width="20" height="15" fill="#000000" stroke="#8c8c8c" stroke-width="1" />
<rect x="258" y="474" width="65" height="1" fill="#000" />
<g transform="translate(32,484)" shape-rendering="crispEdges"><path d="M6 12H12L15 15H9Z" fill="#c8c8c8"/><path d="M9 9H12L15 12H12Z" fill="#c8c8c8"/><path d="M9 6H12L15 9H12Z" fill="#c8c8c8"/><path d="M1.5 6.5H8L11.5 10.5H5Z" fill="#00ff00" stroke="#000" stroke-width="1" /><path d="M1.5 3.5H8L11.5 7.5H5Z" fill="#ffff00" stroke="#000" stroke-width="1" /><path d="M1.5 0.5H8L11.5 4.5H5Z" fill="#00ffff" stroke="#000" stroke-width="1" /></g>
<text x="53" y="496" font-family="Liberation Sans" font-size="13" fill="#000" stroke="#000" stroke-width="0.22" textLength="23.4" lengthAdjust="spacingAndGlyphs" >AXIS</text>
<g transform="translate(181,484)" shape-rendering="crispEdges"><g shape-rendering="geometricPrecision"><path d="M1.5 8Q8 2.5 14.5 8Q8 13.5 1.5 8Z" fill="#fff" stroke="#777" stroke-width="1.1"/><circle cx="8" cy="8" r="2.3" fill="#0000ff" stroke="none" stroke-width="1" /><rect x="7" y="6.5" width="2" height="1.5" fill="#40e0ff"/></g></g>
<rect x="231.5" y="485.5" width="20" height="15" fill="#ff0000" stroke="#8c8c8c" stroke-width="1" />
<rect x="258" y="493" width="26" height="1" fill="#000" />
<rect x="288" y="493" width="5" height="1" fill="#000" />
<rect x="298" y="493" width="25" height="1" fill="#000" />
<g transform="translate(32,504)" shape-rendering="crispEdges"><path d="M6 12H12L15 15H9Z" fill="#c8c8c8"/><path d="M9 9H12L15 12H12Z" fill="#c8c8c8"/><path d="M9 6H12L15 9H12Z" fill="#c8c8c8"/><path d="M1.5 6.5H8L11.5 10.5H5Z" fill="#00ff00" stroke="#000" stroke-width="1" /><path d="M1.5 3.5H8L11.5 7.5H5Z" fill="#ffff00" stroke="#000" stroke-width="1" /><path d="M1.5 0.5H8L11.5 4.5H5Z" fill="#00ffff" stroke="#000" stroke-width="1" /></g>
<text x="53" y="515" font-family="Liberation Sans" font-size="13" fill="#000" stroke="#000" stroke-width="0.22" textLength="93.5" lengthAdjust="spacingAndGlyphs" >$CONSTRUCTION</text>
<rect x="231.5" y="504.5" width="20" height="15" fill="#b9d2d3" stroke="#8c8c8c" stroke-width="1" />
<rect x="258" y="512" width="17" height="1" fill="#000" />
<rect x="282" y="512" width="2" height="1" fill="#000" />
<rect x="290" y="512" width="19" height="1" fill="#000" />
<rect x="315" y="512" width="2" height="1" fill="#000" />
<rect x="320" y="512" width="3" height="1" fill="#000" />
<g transform="translate(32,522)" shape-rendering="crispEdges"><path d="M6 12H12L15 15H9Z" fill="#c8c8c8"/><path d="M9 9H12L15 12H12Z" fill="#c8c8c8"/><path d="M9 6H12L15 9H12Z" fill="#c8c8c8"/><path d="M1.5 6.5H8L11.5 10.5H5Z" fill="#00ff00" stroke="#000" stroke-width="1" /><path d="M1.5 3.5H8L11.5 7.5H5Z" fill="#ffff00" stroke="#000" stroke-width="1" /><path d="M1.5 0.5H8L11.5 4.5H5Z" fill="#00ffff" stroke="#000" stroke-width="1" /></g>
<text x="53" y="534" font-family="Liberation Sans" font-size="13" fill="#000" stroke="#000" stroke-width="0.22" textLength="50.8" lengthAdjust="spacingAndGlyphs" >Podwozie</text>
<rect x="231.5" y="523.5" width="20" height="15" fill="#000000" stroke="#8c8c8c" stroke-width="1" />
<rect x="258" y="531" width="65" height="1" fill="#000" />
<g transform="translate(32,542)" shape-rendering="crispEdges"><path d="M6 12H12L15 15H9Z" fill="#c8c8c8"/><path d="M9 9H12L15 12H12Z" fill="#c8c8c8"/><path d="M9 6H12L15 9H12Z" fill="#c8c8c8"/><path d="M1.5 6.5H8L11.5 10.5H5Z" fill="#00ff00" stroke="#000" stroke-width="1" /><path d="M1.5 3.5H8L11.5 7.5H5Z" fill="#ffff00" stroke="#000" stroke-width="1" /><path d="M1.5 0.5H8L11.5 4.5H5Z" fill="#00ffff" stroke="#000" stroke-width="1" /></g>
<text x="53" y="553" font-family="Liberation Sans" font-size="13" fill="#000" stroke="#000" stroke-width="0.22" textLength="65.2" lengthAdjust="spacingAndGlyphs" >Zeberka org.</text>
<g transform="translate(181,542)" shape-rendering="crispEdges"><g shape-rendering="geometricPrecision"><path d="M1.5 8Q8 2.5 14.5 8Q8 13.5 1.5 8Z" fill="#fff" stroke="#777" stroke-width="1.1"/><circle cx="8" cy="8" r="2.3" fill="#0000ff" stroke="none" stroke-width="1" /><rect x="7" y="6.5" width="2" height="1.5" fill="#40e0ff"/></g></g>
<rect x="231.5" y="542.5" width="20" height="15" fill="#000000" stroke="#8c8c8c" stroke-width="1" />
<rect x="258" y="550" width="65" height="1" fill="#000" />
<g transform="translate(32,560)" shape-rendering="crispEdges"><path d="M6 12H12L15 15H9Z" fill="#c8c8c8"/><path d="M9 9H12L15 12H12Z" fill="#c8c8c8"/><path d="M9 6H12L15 9H12Z" fill="#c8c8c8"/><path d="M1.5 6.5H8L11.5 10.5H5Z" fill="#00ff00" stroke="#000" stroke-width="1" /><path d="M1.5 3.5H8L11.5 7.5H5Z" fill="#ffff00" stroke="#000" stroke-width="1" /><path d="M1.5 0.5H8L11.5 4.5H5Z" fill="#00ffff" stroke="#000" stroke-width="1" /></g>
<text x="53" y="572" font-family="Liberation Sans" font-size="13" fill="#000" stroke="#000" stroke-width="0.22" textLength="28.4" lengthAdjust="spacingAndGlyphs" >Temp</text>
<rect x="231.5" y="561.5" width="20" height="15" fill="#000000" stroke="#8c8c8c" stroke-width="1" />
<rect x="258" y="569" width="65" height="1" fill="#000" />
<g transform="translate(32,580)" shape-rendering="crispEdges"><path d="M6 12H12L15 15H9Z" fill="#c8c8c8"/><path d="M9 9H12L15 12H12Z" fill="#c8c8c8"/><path d="M9 6H12L15 9H12Z" fill="#c8c8c8"/><path d="M1.5 6.5H8L11.5 10.5H5Z" fill="#00ff00" stroke="#000" stroke-width="1" /><path d="M1.5 3.5H8L11.5 7.5H5Z" fill="#ffff00" stroke="#000" stroke-width="1" /><path d="M1.5 0.5H8L11.5 4.5H5Z" fill="#00ffff" stroke="#000" stroke-width="1" /></g>
<text x="53" y="591" font-family="Liberation Sans" font-size="13" fill="#000" stroke="#000" stroke-width="0.22" textLength="27.9" lengthAdjust="spacingAndGlyphs" >Silnik</text>
<rect x="231.5" y="580.5" width="20" height="15" fill="#000000" stroke="#8c8c8c" stroke-width="1" />
<rect x="258" y="588" width="65" height="1" fill="#000" />
<g transform="translate(32,598)" shape-rendering="crispEdges"><path d="M6 12H12L15 15H9Z" fill="#c8c8c8"/><path d="M9 9H12L15 12H12Z" fill="#c8c8c8"/><path d="M9 6H12L15 9H12Z" fill="#c8c8c8"/><path d="M1.5 6.5H8L11.5 10.5H5Z" fill="#00ff00" stroke="#000" stroke-width="1" /><path d="M1.5 3.5H8L11.5 7.5H5Z" fill="#ffff00" stroke="#000" stroke-width="1" /><path d="M1.5 0.5H8L11.5 4.5H5Z" fill="#00ffff" stroke="#000" stroke-width="1" /></g>
<text x="53" y="610" font-family="Liberation Sans" font-size="13" fill="#000" stroke="#000" stroke-width="0.22" textLength="28.4" lengthAdjust="spacingAndGlyphs" >Półka</text>
<rect x="231.5" y="599.5" width="20" height="15" fill="#00ffff" stroke="#8c8c8c" stroke-width="1" />
<rect x="258" y="607" width="65" height="1" fill="#000" />
<g transform="translate(32,618)" shape-rendering="crispEdges"><path d="M6 12H12L15 15H9Z" fill="#c8c8c8"/><path d="M9 9H12L15 12H12Z" fill="#c8c8c8"/><path d="M9 6H12L15 9H12Z" fill="#c8c8c8"/><path d="M1.5 6.5H8L11.5 10.5H5Z" fill="#00ff00" stroke="#000" stroke-width="1" /><path d="M1.5 3.5H8L11.5 7.5H5Z" fill="#ffff00" stroke="#000" stroke-width="1" /><path d="M1.5 0.5H8L11.5 4.5H5Z" fill="#00ffff" stroke="#000" stroke-width="1" /></g>
<text x="53" y="629" font-family="Liberation Sans" font-size="13" fill="#000" stroke="#000" stroke-width="0.22" textLength="36.8" lengthAdjust="spacingAndGlyphs" >Boczek</text>
<g transform="translate(181,618)" shape-rendering="crispEdges"><g shape-rendering="geometricPrecision"><path d="M1.5 8Q8 2.5 14.5 8Q8 13.5 1.5 8Z" fill="#fff" stroke="#777" stroke-width="1.1"/><circle cx="8" cy="8" r="2.3" fill="#0000ff" stroke="none" stroke-width="1" /><rect x="7" y="6.5" width="2" height="1.5" fill="#40e0ff"/></g></g>
<rect x="231.5" y="618.5" width="20" height="15" fill="#0000ff" stroke="#8c8c8c" stroke-width="1" />
<rect x="258" y="626" width="65" height="1" fill="#000" />
<g transform="translate(32,636)" shape-rendering="crispEdges"><path d="M6 12H12L15 15H9Z" fill="#c8c8c8"/><path d="M9 9H12L15 12H12Z" fill="#c8c8c8"/><path d="M9 6H12L15 9H12Z" fill="#c8c8c8"/><path d="M1.5 6.5H8L11.5 10.5H5Z" fill="#00ff00" stroke="#000" stroke-width="1" /><path d="M1.5 3.5H8L11.5 7.5H5Z" fill="#ffff00" stroke="#000" stroke-width="1" /><path d="M1.5 0.5H8L11.5 4.5H5Z" fill="#00ffff" stroke="#000" stroke-width="1" /></g>
<text x="53" y="648" font-family="Liberation Sans" font-size="13" fill="#000" stroke="#000" stroke-width="0.22" textLength="30.7" lengthAdjust="spacingAndGlyphs" >Wręgi</text>
<g transform="translate(181,636)" shape-rendering="crispEdges"><g shape-rendering="geometricPrecision"><path d="M1.5 8Q8 2.5 14.5 8Q8 13.5 1.5 8Z" fill="#fff" stroke="#777" stroke-width="1.1"/><circle cx="8" cy="8" r="2.3" fill="#0000ff" stroke="none" stroke-width="1" /><rect x="7" y="6.5" width="2" height="1.5" fill="#40e0ff"/></g></g>
<rect x="231.5" y="637.5" width="20" height="15" fill="#0000ff" stroke="#8c8c8c" stroke-width="1" />
<rect x="258" y="645" width="65" height="1" fill="#000" />
<rect x="31" y="1310" width="292" height="16" fill="#f0f0f0" />
<rect x="48" y="1310" width="92" height="15" fill="#cdcdcd" />
<path d="M41 1314.5l-3.5 3.5 3.5 3.5M313 1314.5l3.5 3.5-3.5 3.5" fill="none" stroke="#505050" stroke-width="1.6"/>
<rect x="30" y="1326" width="293" height="1" fill="#ffffff" />
<rect x="348" y="173" width="1901" height="1138" fill="#ffffff" />
<rect x="332" y="157" width="1936" height="15" fill="#f0f0f0" />
<rect x="332" y="156" width="1936" height="1" fill="#ffffff" />
<rect x="332" y="171" width="1936" height="1" fill="#a8a8a8" />
<rect x="346" y="172" width="1903" height="1" fill="#808080" />
<rect x="332" y="172" width="14" height="1160" fill="#f0f0f0" />
<rect x="345" y="172" width="1" height="1159" fill="#a8a8a8" />
<rect x="346" y="172" width="1" height="1139" fill="#909090" />
<rect x="347" y="172" width="1" height="1139" fill="#c0c0c0" />
<rect x="333" y="158" width="13" height="13" fill="#c8c8b8" />
<path d="M338.5 169V161M336 164l2.5-3 2.5 3" fill="none" stroke="#000" stroke-width="1.2"/><rect x="340" y="163" width="2" height="2" fill="#000"/>
<rect x="333" y="1330" width="13" height="1" fill="#000" />
<rect x="2248" y="172" width="1" height="1139" fill="#dadada" />
<rect x="348" y="1310" width="1901" height="1" fill="#dadada" />
<path d="M350.5 159V171 M362.5 168V171 M375.5 168V171 M387.5 168V171 M400.5 168V171 M412.5 166V171 M425.5 168V171 M437.5 168V171 M450.5 168V171 M463.5 168V171 M475.5 159V171 M488.5 168V171 M500.5 168V171 M513.5 168V171 M525.5 168V171 M538.5 166V171 M550.5 168V171 M563.5 168V171 M576.5 168V171 M588.5 168V171 M601.5 159V171 M613.5 168V171 M626.5 168V171 M638.5 168V171 M651.5 168V171 M663.5 166V171 M676.5 168V171 M689.5 168V171 M701.5 168V171 M714.5 168V171 M726.5 159V171 M739.5 168V171 M751.5 168V171 M764.5 168V171 M776.5 168V171 M789.5 166V171 M802.5 168V171 M814.5 168V171 M827.5 168V171 M839.5 168V171 M852.5 159V171 M864.5 168V171 M877.5 168V171 M889.5 168V171 M902.5 168V171 M914.5 166V171 M927.5 168V171 M940.5 168V171 M952.5 168V171 M965.5 168V171 M977.5 159V171 M990.5 168V171 M1002.5 168V171 M1015.5 168V171 M1027.5 168V171 M1040.5 166V171 M1053.5 168V171 M1065.5 168V171 M1078.5 168V171 M1090.5 168V171 M1103.5 159V171 M1115.5 168V171 M1128.5 168V171 M1140.5 168V171 M1153.5 168V171 M1166.5 166V171 M1178.5 168V171 M1191.5 168V171 M1203.5 168V171 M1216.5 168V171 M1228.5 159V171 M1241.5 168V171 M1253.5 168V171 M1266.5 168V171 M1279.5 168V171 M1291.5 166V171 M1304.5 168V171 M1316.5 168V171 M1329.5 168V171 M1341.5 168V171 M1354.5 159V171 M1366.5 168V171 M1379.5 168V171 M1392.5 168V171 M1404.5 168V171 M1417.5 166V171 M1429.5 168V171 M1442.5 168V171 M1454.5 168V171 M1467.5 168V171 M1479.5 159V171 M1492.5 168V171 M1505.5 168V171 M1517.5 168V171 M1530.5 168V171 M1542.5 166V171 M1555.5 168V171 M1567.5 168V171 M1580.5 168V171 M1592.5 168V171 M1605.5 159V171 M1617.5 168V171 M1630.5 168V171 M1643.5 168V171 M1655.5 168V171 M1668.5 166V171 M1680.5 168V171 M1693.5 168V171 M1705.5 168V171 M1718.5 168V171 M1730.5 159V171 M1743.5 168V171 M1756.5 168V171 M1768.5 168V171 M1781.5 168V171 M1793.5 166V171 M1806.5 168V171 M1818.5 168V171 M1831.5 168V171 M1843.5 168V171 M1856.5 159V171 M1869.5 168V171 M1881.5 168V171 M1894.5 168V171 M1906.5 168V171 M1919.5 166V171 M1931.5 168V171 M1944.5 168V171 M1956.5 168V171 M1969.5 168V171 M1982.5 159V171 M1994.5 168V171 M2007.5 168V171 M2019.5 168V171 M2032.5 168V171 M2044.5 166V171 M2057.5 168V171 M2069.5 168V171 M2082.5 168V171 M2095.5 168V171 M2107.5 159V171 M2120.5 168V171 M2132.5 168V171 M2145.5 168V171 M2157.5 168V171 M2170.5 166V171 M2182.5 168V171 M2195.5 168V171 M2207.5 168V171 M2220.5 168V171 M2233.5 159V171 M2245.5 168V171 M2258.5 168V171" stroke="#000" stroke-width="1"/>
<text x="352" y="167.2" font-family="Liberation Sans" font-size="8.6" fill="#404040" textLength="31" lengthAdjust="spacingAndGlyphs" >4900 mm</text>
<text x="477" y="167.2" font-family="Liberation Sans" font-size="8.6" fill="#404040" textLength="31" lengthAdjust="spacingAndGlyphs" >5000 mm</text>
<text x="603" y="167.2" font-family="Liberation Sans" font-size="8.6" fill="#404040" textLength="31" lengthAdjust="spacingAndGlyphs" >5100 mm</text>
<text x="728" y="167.2" font-family="Liberation Sans" font-size="8.6" fill="#404040" textLength="31" lengthAdjust="spacingAndGlyphs" >5200 mm</text>
<text x="854" y="167.2" font-family="Liberation Sans" font-size="8.6" fill="#404040" textLength="31" lengthAdjust="spacingAndGlyphs" >5300 mm</text>
<text x="979" y="167.2" font-family="Liberation Sans" font-size="8.6" fill="#404040" textLength="31" lengthAdjust="spacingAndGlyphs" >5400 mm</text>
<text x="1105" y="167.2" font-family="Liberation Sans" font-size="8.6" fill="#404040" textLength="31" lengthAdjust="spacingAndGlyphs" >5500 mm</text>
<text x="1230" y="167.2" font-family="Liberation Sans" font-size="8.6" fill="#404040" textLength="31" lengthAdjust="spacingAndGlyphs" >5600 mm</text>
<text x="1356" y="167.2" font-family="Liberation Sans" font-size="8.6" fill="#404040" textLength="31" lengthAdjust="spacingAndGlyphs" >5700 mm</text>
<text x="1481" y="167.2" font-family="Liberation Sans" font-size="8.6" fill="#404040" textLength="31" lengthAdjust="spacingAndGlyphs" >5800 mm</text>
<text x="1607" y="167.2" font-family="Liberation Sans" font-size="8.6" fill="#404040" textLength="31" lengthAdjust="spacingAndGlyphs" >5900 mm</text>
<text x="1732" y="167.2" font-family="Liberation Sans" font-size="8.6" fill="#404040" textLength="31" lengthAdjust="spacingAndGlyphs" >6000 mm</text>
<text x="1858" y="167.2" font-family="Liberation Sans" font-size="8.6" fill="#404040" textLength="31" lengthAdjust="spacingAndGlyphs" >6100 mm</text>
<text x="1984" y="167.2" font-family="Liberation Sans" font-size="8.6" fill="#404040" textLength="31" lengthAdjust="spacingAndGlyphs" >6200 mm</text>
<text x="2109" y="167.2" font-family="Liberation Sans" font-size="8.6" fill="#404040" textLength="31" lengthAdjust="spacingAndGlyphs" >6300 mm</text>
<text x="2235" y="167.2" font-family="Liberation Sans" font-size="8.6" fill="#404040" textLength="31" lengthAdjust="spacingAndGlyphs" >6400 mm</text>
<path d="M343 175.5H346 M343 188.5H346 M334 201.5H346 M343 213.5H346 M343 226.5H346 M343 238.5H346 M343 251.5H346 M341 263.5H346 M343 276.5H346 M343 288.5H346 M343 301.5H346 M343 314.5H346 M334 326.5H346 M343 339.5H346 M343 351.5H346 M343 364.5H346 M343 376.5H346 M341 389.5H346 M343 401.5H346 M343 414.5H346 M343 427.5H346 M343 439.5H346 M334 452.5H346 M343 464.5H346 M343 477.5H346 M343 489.5H346 M343 502.5H346 M341 514.5H346 M343 527.5H346 M343 540.5H346 M343 552.5H346 M343 565.5H346 M334 577.5H346 M343 590.5H346 M343 602.5H346 M343 615.5H346 M343 627.5H346 M341 640.5H346 M343 653.5H346 M343 665.5H346 M343 678.5H346 M343 690.5H346 M334 703.5H346 M343 715.5H346 M343 728.5H346 M343 740.5H346 M343 753.5H346 M341 766.5H346 M343 778.5H346 M343 791.5H346 M343 803.5H346 M343 816.5H346 M334 828.5H346 M343 841.5H346 M343 853.5H346 M343 866.5H346 M343 879.5H346 M341 891.5H346 M343 904.5H346 M343 916.5H346 M343 929.5H346 M343 941.5H346 M334 954.5H346 M343 966.5H346 M343 979.5H346 M343 992.5H346 M343 1004.5H346 M341 1017.5H346 M343 1029.5H346 M343 1042.5H346 M343 1054.5H346 M343 1067.5H346 M334 1079.5H346 M343 1092.5H346 M343 1105.5H346 M343 1117.5H346 M343 1130.5H346 M341 1142.5H346 M343 1155.5H346 M343 1167.5H346 M343 1180.5H346 M343 1192.5H346 M334 1205.5H346 M343 1218.5H346 M343 1230.5H346 M343 1243.5H346 M343 1255.5H346 M341 1268.5H346 M343 1280.5H346 M343 1293.5H346 M343 1305.5H346 M343 1318.5H346 M334 1331.5H346" stroke="#000" stroke-width="1"/>
<text transform="translate(342.2,199) rotate(-90)" font-family="Liberation Sans" font-size="8.6" fill="#404040" textLength="31" lengthAdjust="spacingAndGlyphs">1300 mm</text>
<text transform="translate(342.2,324) rotate(-90)" font-family="Liberation Sans" font-size="8.6" fill="#404040" textLength="31" lengthAdjust="spacingAndGlyphs">1200 mm</text>
<text transform="translate(342.2,450) rotate(-90)" font-family="Liberation Sans" font-size="8.6" fill="#404040" textLength="31" lengthAdjust="spacingAndGlyphs">1100 mm</text>
<text transform="translate(342.2,575) rotate(-90)" font-family="Liberation Sans" font-size="8.6" fill="#404040" textLength="31" lengthAdjust="spacingAndGlyphs">1000 mm</text>
<text transform="translate(342.2,701) rotate(-90)" font-family="Liberation Sans" font-size="8.6" fill="#404040" textLength="27.5" lengthAdjust="spacingAndGlyphs">900 mm</text>
<text transform="translate(342.2,826) rotate(-90)" font-family="Liberation Sans" font-size="8.6" fill="#404040" textLength="27.5" lengthAdjust="spacingAndGlyphs">800 mm</text>
<text transform="translate(342.2,952) rotate(-90)" font-family="Liberation Sans" font-size="8.6" fill="#404040" textLength="27.5" lengthAdjust="spacingAndGlyphs">700 mm</text>
<text transform="translate(342.2,1077) rotate(-90)" font-family="Liberation Sans" font-size="8.6" fill="#404040" textLength="27.5" lengthAdjust="spacingAndGlyphs">600 mm</text>
<text transform="translate(342.2,1203) rotate(-90)" font-family="Liberation Sans" font-size="8.6" fill="#404040" textLength="27.5" lengthAdjust="spacingAndGlyphs">500 mm</text>
<text transform="translate(342.2,1329) rotate(-90)" font-family="Liberation Sans" font-size="8.6" fill="#404040" textLength="27.5" lengthAdjust="spacingAndGlyphs">400 mm</text>
<rect x="1354" y="156" width="1" height="15" fill="#ff00ff" />
<rect x="332" y="801" width="13" height="1" fill="#ff00ff" />
<rect x="2249" y="173" width="19" height="1138" fill="#f0f0f0" />
<rect x="2251" y="563" width="15" height="122" fill="#cdcdcd" />
<path d="M2254.5 183.5l3.5-3.5 3.5 3.5M2254.5 1302.5l3.5 3.5 3.5-3.5" fill="none" stroke="#505050" stroke-width="1.6"/>
<rect x="348" y="1312" width="1901" height="1" fill="#ffffff" />
<rect x="348" y="1313" width="1920" height="20" fill="#f0f0f0" />
<rect x="1810" y="1315" width="121" height="15" fill="#cdcdcd" />
<path d="M2240.5 1318.5l3.5 3.5-3.5 3.5M597.5 1318.5l-3.5 3.5 3.5 3.5" fill="none" stroke="#505050" stroke-width="1.6"/>
<rect x="2266" y="1311" width="1" height="23" fill="#f8f8f8" />
<rect x="346" y="1311" width="240" height="22" fill="#f0f0f0" />
<rect x="352" y="1312" width="230" height="1" fill="#646464" />
<rect x="586" y="1313" width="1" height="20" fill="#646464" />
<path d="M357.5 1313.5V1329.5Q357.5 1331.5 359.5 1331.5H418.5L421.5 1328.5V1313" fill="#fbfbfb" stroke="#000" stroke-width="1"/>
<g transform="translate(362,1313)" shape-rendering="crispEdges"><rect x="1.5" y="3.5" width="8" height="7" fill="#e8e8e8" stroke="#000" stroke-width="1.3"/><path d="M1.5 3.5L4 1H11L9.5 3.5" fill="#fff" stroke="#000" stroke-width="1" /><circle cx="9.5" cy="10" r="4.5" fill="#bbb" stroke="#000" stroke-width="1.3" /><circle cx="8.5" cy="9" r="2" fill="#fff" stroke="none" stroke-width="1" /></g>
<text x="378" y="1325.5" font-family="Liberation Sans" font-size="13" fill="#101030" stroke="#101030" stroke-width="0.55" textLength="34" lengthAdjust="spacingAndGlyphs" >Model</text>
<path d="M423.5 1313V1327.5Q423.5 1329.5 425.5 1329.5H485.5Q487.5 1329.5 487.5 1327.5V1313" fill="#e3e3e3" stroke="#cfcfcf" stroke-width="1"/>
<g transform="translate(429,1313)" shape-rendering="crispEdges"><path d="M3.5 1.5H9.5L12.5 4.5V15.5H3.5Z" fill="#fff" stroke="#000" stroke-width="1.3" /><text x="5.5" y="14" font-family="Liberation Sans" font-size="7" font-weight="bold" fill="#000080">1</text></g>
<text x="446" y="1325.5" font-family="Liberation Sans" font-size="13" fill="#6b6b8a" stroke="#6b6b8a" stroke-width="0.22" textLength="35" lengthAdjust="spacingAndGlyphs" >Układ1</text>
<path d="M491.5 1313V1327.5Q491.5 1329.5 493.5 1329.5H553.5Q555.5 1329.5 555.5 1327.5V1313" fill="#e3e3e3" stroke="#cfcfcf" stroke-width="1"/>
<g transform="translate(497,1313)" shape-rendering="crispEdges"><path d="M3.5 1.5H9.5L12.5 4.5V15.5H3.5Z" fill="#fff" stroke="#000" stroke-width="1.3" /><text x="5.5" y="14" font-family="Liberation Sans" font-size="7" font-weight="bold" fill="#000080">2</text></g>
<text x="514" y="1325.5" font-family="Liberation Sans" font-size="13" fill="#6b6b8a" stroke="#6b6b8a" stroke-width="0.22" textLength="35" lengthAdjust="spacingAndGlyphs" >Układ2</text>
<rect x="0" y="1333" width="2560" height="1" fill="#f4f6fb" />
<rect x="1063.5" y="382.5" width="345" height="240" fill="none" stroke="#000" stroke-width="1" />
<path d="M1057.5 382.5 L1044.5 386.5 L1032.5 438.5 L1032.5 440.5 L1035.5 440.5 L1035.5 444.5 L1031.5 444.5 L1030.5 466 L1028.5 491 L1028.5 500.5 L1032.5 500.5 L1032.5 504.5 L1028.5 504.5 L1028.5 514 L1030.5 540 L1031.5 561.5 L1035.5 561.5 L1035.5 565.5 L1032.5 565.5 L1044.5 619 L1057.5 622.5 Z" fill="none" stroke="#0000ff" stroke-width="1" shape-rendering="crispEdges"/>
<g transform="translate(2473,0) scale(-1,1)"><path d="M1057.5 382.5 L1044.5 386.5 L1032.5 438.5 L1032.5 440.5 L1035.5 440.5 L1035.5 444.5 L1031.5 444.5 L1030.5 466 L1028.5 491 L1028.5 500.5 L1032.5 500.5 L1032.5 504.5 L1028.5 504.5 L1028.5 514 L1030.5 540 L1031.5 561.5 L1035.5 561.5 L1035.5 565.5 L1032.5 565.5 L1044.5 619 L1057.5 622.5 Z" fill="none" stroke="#0000ff" stroke-width="1" shape-rendering="crispEdges"/></g>
<circle cx="1051.3" cy="441.5" r="2.3" fill="none" stroke="#000" stroke-width="1" shape-rendering="crispEdges"/><circle cx="1051.3" cy="564" r="2.3" fill="none" stroke="#000" stroke-width="1" shape-rendering="crispEdges"/>
<ellipse cx="1426" cy="442" rx="6.4" ry="6" fill="none" stroke="#000" stroke-width="1" shape-rendering="crispEdges"/><ellipse cx="1427.4" cy="502.8" rx="6" ry="6.4" fill="none" stroke="#000" stroke-width="1" shape-rendering="crispEdges"/><ellipse cx="1426" cy="563" rx="6.4" ry="6.2" fill="none" stroke="#000" stroke-width="1" shape-rendering="crispEdges"/>
<path d="M1110 395.5 L1224 395.5 Q1229.5 395.5 1229.5 401 L1229.5 480 Q1229.5 485 1223.5 484.5 Q1219 484.5 1216 482 L1108 410 Q1103.5 406.5 1104 401.5 Q1105 395.5 1110 395.5 Z" fill="none" stroke="#000" stroke-width="1" shape-rendering="crispEdges"/><path d="M1094.5 428 Q1095.5 422.5 1101.5 422.5 Q1104.5 422.5 1107 424.5 L1195.5 482 Q1198.5 485 1198 489 Q1197 496.5 1191 496.5 L1100.5 496.5 Q1094.5 496.5 1094.5 489.5 Z" fill="none" stroke="#000" stroke-width="1" shape-rendering="crispEdges"/><path d="M1242.5 401 Q1243 395.5 1248.5 395.5 L1362 395.5 Q1367.5 396.5 1367.5 402 Q1367.5 407 1364 410 L1256.5 481 Q1253 484.5 1249.5 484.5 Q1243 484 1242.5 479 Z" fill="none" stroke="#000" stroke-width="1" shape-rendering="crispEdges"/><path d="M1396.5 416.5 Q1396 410 1390 409.5 Q1386.5 409.5 1383.5 411 L1278 482 Q1274.5 485 1274.5 488.5 Q1275 496.5 1281 496.5 L1389 496.5 Q1396.5 496 1396.5 490 Z" fill="none" stroke="#000" stroke-width="1" shape-rendering="crispEdges"/>
<g transform="translate(0,1005.6) scale(1,-1)"><path d="M1110 395.5 L1224 395.5 Q1229.5 395.5 1229.5 401 L1229.5 480 Q1229.5 485 1223.5 484.5 Q1219 484.5 1216 482 L1108 410 Q1103.5 406.5 1104 401.5 Q1105 395.5 1110 395.5 Z" fill="none" stroke="#000" stroke-width="1" shape-rendering="crispEdges"/><path d="M1094.5 428 Q1095.5 422.5 1101.5 422.5 Q1104.5 422.5 1107 424.5 L1195.5 482 Q1198.5 485 1198 489 Q1197 496.5 1191 496.5 L1100.5 496.5 Q1094.5 496.5 1094.5 489.5 Z" fill="none" stroke="#000" stroke-width="1" shape-rendering="crispEdges"/><path d="M1242.5 401 Q1243 395.5 1248.5 395.5 L1362 395.5 Q1367.5 396.5 1367.5 402 Q1367.5 407 1364 410 L1256.5 481 Q1253 484.5 1249.5 484.5 Q1243 484 1242.5 479 Z" fill="none" stroke="#000" stroke-width="1" shape-rendering="crispEdges"/><path d="M1396.5 416.5 Q1396 410 1390 409.5 Q1386.5 409.5 1383.5 411 L1278 482 Q1274.5 485 1274.5 488.5 Q1275 496.5 1281 496.5 L1389 496.5 Q1396.5 496 1396.5 490 Z" fill="none" stroke="#000" stroke-width="1" shape-rendering="crispEdges"/></g>
<path d="M1065.5 641.5 H1411.5 V881.5 H1065.5 V824.5 H1090.5 V820.5 H1065.5 V702.5 H1090.5 V698.5 H1065.5 Z" fill="none" stroke="#000" stroke-width="1" shape-rendering="crispEdges"/>
<rect x="1097.5" y="654.5" width="301" height="214" fill="none" stroke="#000" stroke-width="1" />
<rect x="1066.5" y="905.5" width="345" height="240" fill="none" stroke="#000" stroke-width="1" />
<rect x="1097.5" y="917.5" width="302" height="215" fill="none" stroke="#000" stroke-width="1" />
<path d="M1876.5 173 V293.5 H1901.5 V173" fill="none" stroke="#000" stroke-width="1" shape-rendering="crispEdges"/>
<rect x="2271" y="156" width="263" height="1" fill="#5a5a5a" />
<rect x="2271" y="156" width="1" height="23" fill="#5a5a5a" />
<rect x="2533" y="156" width="1" height="23" fill="#5a5a5a" />
<rect x="2272" y="157" width="261" height="22" fill="url(#tg)" />
<text x="2275" y="171.5" font-family="Liberation Sans" font-size="13" fill="#000" stroke="#000" stroke-width="0.22" textLength="30" lengthAdjust="spacingAndGlyphs" >Tools</text>
<g transform="translate(2497,159)" shape-rendering="crispEdges"><ellipse cx="10" cy="6" rx="4.5" ry="4.5" fill="#e8e8e8" stroke="#aaa"/><ellipse cx="7" cy="9" rx="4" ry="4" fill="#d0d0d0" stroke="#aaa"/><circle cx="10.5" cy="5" r="2" fill="#fff" stroke="none" stroke-width="1" /><path d="M4.5 11.5L1 15" fill="none" stroke="#999" stroke-width="1.6" /></g>
<rect x="2517" y="160" width="14" height="14" fill="#a6a6a6" rx="1"/>
<path d="M2520 163L2528 171M2528 163L2520 171" stroke="#fff" stroke-width="2.2"/>
<rect x="2272" y="179" width="261" height="31" fill="#ffffff" />
<rect x="2533" y="179" width="1" height="31" fill="#a6a6a6" />
<rect x="2272" y="209" width="262" height="1" fill="#a6a6a6" />
<g transform="translate(2276,187)" shape-rendering="crispEdges"><path d="M3.5 1.5V12.5L6 10L8.5 14.5L10 13.5L7.5 9.5H11Z" fill="#fff" stroke="#000" stroke-width="1" /></g>
<g transform="translate(2298,187)" shape-rendering="crispEdges"><path d="M1.5 13Q2 4 7 1" fill="none" stroke="#222" stroke-width="1" /><rect x="5" y="3" width="3" height="3" fill="#3030ff"/><path d="M7.5 6.5V15L9.5 13L11.5 16L12.5 15.5L11 12.5H13.5Z" fill="#fff" stroke="#000" stroke-width="1" /></g>
<g transform="translate(2320,187)" shape-rendering="crispEdges"><circle cx="8" cy="8" r="6.5" fill="#4060e0" stroke="#3030a0" stroke-width="1.2" /><path d="M5 3Q8 5 6 8Q4 10 6 13Q3 11 2.5 8Q3 4 5 3Z" fill="#30c030"/><path d="M10 4Q13 6 12 9Q10 8 10 4Z" fill="#30c030"/><path d="M13 2Q15 5 14 11" fill="none" stroke="#3030a0" stroke-width="1.5" /></g>
<rect x="2341" y="184" width="1" height="23" fill="#a0a0a0" />
<rect x="2345.5" y="182.5" width="99" height="25" fill="#ffffff" stroke="#a6a6a6" stroke-width="1" />
<rect x="2426" y="183" width="18" height="24" fill="#cccccc" />
<rect x="2443" y="183" width="1" height="24" fill="#b8b8b8" />
<path d="M2430.5 194.0 L2434.5 198.0 L2438.5 194.0" fill="none" stroke="#a0a0a0" stroke-width="1"/>
<text x="2349" y="200" font-family="Liberation Sans" font-size="13" fill="#000" stroke="#000" stroke-width="0.22" textLength="35" lengthAdjust="spacingAndGlyphs" >Sketch</text>
<g transform="translate(2447,187)" shape-rendering="crispEdges"><path d="M1 9L7 6L13 9V15L7 16L1 14Z" fill="#ff0000"/><path d="M1 9L7 6L13 9L7 12ZM7 12V16" fill="none" stroke="#000" stroke-width="1" /><path d="M3 7L5 2L9 5M7 2L12 7" fill="none" stroke="#000" stroke-width="1.2" /><path d="M9 5l3-1 1 3-3 1z" fill="#fff"/><path d="M16 12v4h-4z" fill="#000"/></g>
<rect x="2271" y="210" width="247" height="751" fill="#d6e0eb" />
<rect x="2518" y="210" width="16" height="751" fill="#f0f0f0" />
<rect x="2518" y="228" width="15" height="709" fill="#cdcdcd" />
<path d="M2522.5 223.5l3.5-3.5 3.5 3.5M2522.5 951.5l3.5 3.5 3.5-3.5" fill="none" stroke="#505050" stroke-width="1.6"/>
<path d="M2273 238V219Q2273 213 2279 213H2516V238Z" fill="url(#sh)"/>
<rect x="2273" y="238" width="243" height="100" fill="#f1f3f8" />
<text x="2286" y="230.5" font-family="Liberation Sans" font-size="12.3" fill="#0b5aab" font-weight="bold" textLength="67" lengthAdjust="spacingAndGlyphs" >Snap Modes</text>
<circle cx="2501.5" cy="224" r="7.5" fill="#ffffff" stroke="#c5d3e2" stroke-width="1"/>
<path d="M2498.0 224l3.5-3 3.5 3M2498.0 228l3.5-3 3.5 3" fill="none" stroke="#1a5aa8" stroke-width="1.5"/>
<path d="M2273 366V347Q2273 341 2279 341H2516V366Z" fill="url(#sh)"/>
<rect x="2273" y="366" width="243" height="72" fill="#f1f3f8" />
<text x="2286" y="358.5" font-family="Liberation Sans" font-size="12.3" fill="#0b5aab" font-weight="bold" textLength="23" lengthAdjust="spacingAndGlyphs" >Line</text>
<circle cx="2501.5" cy="352" r="7.5" fill="#ffffff" stroke="#c5d3e2" stroke-width="1"/>
<path d="M2498.0 352l3.5-3 3.5 3M2498.0 356l3.5-3 3.5 3" fill="none" stroke="#1a5aa8" stroke-width="1.5"/>
<path d="M2273 466V447Q2273 441 2279 441H2516V466Z" fill="url(#sh)"/>
<rect x="2273" y="466" width="243" height="72" fill="#f1f3f8" />
<text x="2286" y="458.5" font-family="Liberation Sans" font-size="12.3" fill="#0b5aab" font-weight="bold" textLength="70" lengthAdjust="spacingAndGlyphs" >Circle/Ellipse</text>
<circle cx="2501.5" cy="452" r="7.5" fill="#ffffff" stroke="#c5d3e2" stroke-width="1"/>
<path d="M2498.0 452l3.5-3 3.5 3M2498.0 456l3.5-3 3.5 3" fill="none" stroke="#1a5aa8" stroke-width="1.5"/>
<path d="M2273 566V547Q2273 541 2279 541H2516V566Z" fill="url(#sh)"/>
<rect x="2273" y="566" width="243" height="71" fill="#f1f3f8" />
<text x="2286" y="558.5" font-family="Liberation Sans" font-size="12.3" fill="#0b5aab" font-weight="bold" textLength="19" lengthAdjust="spacingAndGlyphs" >Arc</text>
<circle cx="2501.5" cy="552" r="7.5" fill="#ffffff" stroke="#c5d3e2" stroke-width="1"/>
<path d="M2498.0 552l3.5-3 3.5 3M2498.0 556l3.5-3 3.5 3" fill="none" stroke="#1a5aa8" stroke-width="1.5"/>
<path d="M2273 666V647Q2273 641 2279 641H2516V666Z" fill="url(#sh)"/>
<rect x="2273" y="666" width="243" height="43" fill="#f1f3f8" />
<text x="2286" y="658.5" font-family="Liberation Sans" font-size="12.3" fill="#0b5aab" font-weight="bold" textLength="32" lengthAdjust="spacingAndGlyphs" >Curve</text>
<circle cx="2501.5" cy="652" r="7.5" fill="#ffffff" stroke="#c5d3e2" stroke-width="1"/>
<path d="M2498.0 652l3.5-3 3.5 3M2498.0 656l3.5-3 3.5 3" fill="none" stroke="#1a5aa8" stroke-width="1.5"/>
<path d="M2273 738V719Q2273 713 2279 713H2516V738Z" fill="url(#sh)"/>
<rect x="2273" y="738" width="243" height="71" fill="#f1f3f8" />
<text x="2286" y="730.5" font-family="Liberation Sans" font-size="12.3" fill="#0b5aab" font-weight="bold" textLength="64" lengthAdjust="spacingAndGlyphs" >Double Line</text>
<circle cx="2501.5" cy="724" r="7.5" fill="#ffffff" stroke="#c5d3e2" stroke-width="1"/>
<path d="M2498.0 724l3.5-3 3.5 3M2498.0 728l3.5-3 3.5 3" fill="none" stroke="#1a5aa8" stroke-width="1.5"/>
<path d="M2273 838V819Q2273 813 2279 813H2516V838Z" fill="url(#sh)"/>
<text x="2286" y="830.5" font-family="Liberation Sans" font-size="12.3" fill="#0b5aab" font-weight="bold" textLength="49" lengthAdjust="spacingAndGlyphs" >Multiline</text>
<circle cx="2501.5" cy="824" r="7.5" fill="#ffffff" stroke="#c5d3e2" stroke-width="1"/>
<path d="M2498.0 821l3.5 3 3.5-3M2498.0 825l3.5 3 3.5-3" fill="none" stroke="#1a5aa8" stroke-width="1.5"/>
<path d="M2273 866V847Q2273 841 2279 841H2516V866Z" fill="url(#sh)"/>
<rect x="2273" y="866" width="243" height="95" fill="#f1f3f8" />
<text x="2286" y="858.5" font-family="Liberation Sans" font-size="12.3" fill="#0b5aab" font-weight="bold" textLength="59" lengthAdjust="spacingAndGlyphs" >Dimension</text>
<circle cx="2501.5" cy="852" r="7.5" fill="#ffffff" stroke="#c5d3e2" stroke-width="1"/>
<path d="M2498.0 852l3.5-3 3.5 3M2498.0 856l3.5-3 3.5 3" fill="none" stroke="#1a5aa8" stroke-width="1.5"/>
<g transform="translate(2290,252)" shape-rendering="crispEdges"><path d="M5 3L9 2Q13 3 14 8Q14 13 10 13L5 9Q3 6 5 3Z" fill="#fff" stroke="#000" stroke-width="1" /><path d="M3 4Q6 6 8 4M2 1.5H7" fill="none" stroke="#000" stroke-width="1" stroke-dasharray="1 1"/><path d="M0 13L3 16M3 13L0 16" fill="none" stroke="#ff0000" stroke-width="1.2" /><path d="M13 0L14.5 2L16 0M14.5 2V4" fill="none" stroke="#ff0000" stroke-width="1.2" /></g>
<rect x="2312" y="246" width="28" height="28" fill="#000080" />
<rect x="2313" y="247" width="26" height="26" fill="#fdc273" />
<g transform="translate(2318,252)" shape-rendering="crispEdges"><rect x="0.5" y="7.5" width="3" height="3" fill="#fff" stroke="#888" stroke-width="1"/><path d="M5 9H12M9 6L12 9L9 12" fill="none" stroke="#000" stroke-width="1.2" /><rect x="12.5" y="7.5" width="2" height="2" fill="#fff" stroke="#ff0000"/></g>
<rect x="2340" y="246" width="28" height="28" fill="#000080" />
<rect x="2341" y="247" width="26" height="26" fill="#fdc273" />
<g transform="translate(2346,252)" shape-rendering="crispEdges"><path d="M1 13L7 7L12 1" fill="none" stroke="#000" stroke-width="1.2" /><path d="M8 6L13 13" fill="none" stroke="#000" stroke-width="1" stroke-dasharray="1 1"/><path d="M12 5L16 15" fill="none" stroke="#fff" stroke-width="1" stroke-dasharray="1 1"/><rect x="6.5" y="6.5" width="2" height="2" fill="#fff" stroke="#ff0000"/><rect x="11.5" y="0.5" width="2" height="2" fill="#fff" stroke="#000"/><rect x="11" y="0" width="4" height="4" fill="#000"/><rect x="12" y="1" width="2" height="2" fill="#fff"/></g>
<g transform="translate(2374,252)" shape-rendering="crispEdges"><path d="M1 15L14 2" fill="none" stroke="#000" stroke-width="1.2" /><rect x="3.5" y="10.5" width="2" height="2" fill="#fff" stroke="#ff0000"/><rect x="9.5" y="5.5" width="2" height="2" fill="#fff" stroke="#ff0000"/></g>
<rect x="2396" y="246" width="28" height="28" fill="#000080" />
<rect x="2397" y="247" width="26" height="26" fill="#fdc273" />
<g transform="translate(2402,252)" shape-rendering="crispEdges"><path d="M4 13Q0 9 2 5Q5 1 9 2Q14 4 14 9" fill="none" stroke="#000" stroke-width="1.3" /><rect x="6.5" y="7.5" width="2" height="2" fill="#fff" stroke="#ff0000"/></g>
<g transform="translate(2430,252)" shape-rendering="crispEdges"><path d="M1.5 4.5L4.5 1.5H14.5V11.5L11.5 14.5H1.5ZM1.5 4.5H11.5V14.5M11.5 4.5L14.5 1.5" fill="none" stroke="#000" stroke-width="1.3" /><path d="M4.5 1.5V11.5H14.5M4.5 11.5L1.5 14.5" fill="none" stroke="#888" stroke-width="1" /><rect x="6.5" y="7.5" width="2" height="2" fill="#fff" stroke="#ff0000"/></g>
<rect x="2452" y="246" width="28" height="28" fill="#000080" />
<rect x="2453" y="247" width="26" height="26" fill="#fdc273" />
<g transform="translate(2458,252)" shape-rendering="crispEdges"><circle cx="8" cy="8" r="6" fill="none" stroke="#000" stroke-width="1.2" stroke-dasharray="2 1"/><path d="M8 1V15M1 8H15" fill="none" stroke="#000" stroke-width="1" stroke-dasharray="1 1"/><rect x="7.5" y="0.5" width="2" height="2" fill="#fff" stroke="#ff0000"/><rect x="0.5" y="7.5" width="2" height="2" fill="#fff" stroke="#ff0000"/><rect x="13.5" y="7.5" width="2" height="2" fill="#fff" stroke="#ff0000"/><rect x="7.5" y="13.5" width="2" height="2" fill="#fff" stroke="#ff0000"/></g>
<rect x="2284" y="274" width="28" height="28" fill="#000080" />
<rect x="2285" y="275" width="26" height="26" fill="#fdc273" />
<g transform="translate(2290,280)" shape-rendering="crispEdges"><path d="M1 14L14 1M1 1L14 14" fill="none" stroke="#000" stroke-width="1.2" /><rect x="6.5" y="6.5" width="2" height="2" fill="#fff" stroke="#ff0000"/></g>
<g transform="translate(2318,280)" shape-rendering="crispEdges"><path d="M1 2h1v1h-1zM4 2h1v1h-1zM7 2h1v1h-1zM10 2h1v1h-1zM1 6h1v1h-1zM4 6h1v1h-1zM7 6h1v1h-1zM10 6h1v1h-1zM1 10h1v1h-1zM4 10h1v1h-1zM7 10h1v1h-1zM10 10h1v1h-1zM1 14h1v1h-1zM4 14h1v1h-1zM7 14h1v1h-1z" fill="#000"/><rect x="9.5" y="12.5" width="2" height="2" fill="#fff" stroke="#ff0000"/></g>
<g transform="translate(2346,280)" shape-rendering="crispEdges"><path d="M1 8L6 3L9 7L4 12Z" fill="none" stroke="#000" stroke-width="1.2" /><path d="M5 8L13 15" fill="none" stroke="#000" stroke-width="1" /><path d="M9 7L13 11" fill="none" stroke="#fff" stroke-width="1" stroke-dasharray="1 1"/><rect x="4.5" y="7.5" width="2" height="2" fill="#fff" stroke="#ff0000"/><rect x="10.5" y="1.5" width="3" height="3" fill="#fff" stroke="#888" stroke-width="1"/></g>
<g transform="translate(2374,280)" shape-rendering="crispEdges"><path d="M1.5 14.5L4 2.5H12L14.5 14.5Z" fill="none" stroke="#000" stroke-width="1.3" /><rect x="6.5" y="7.5" width="2" height="2" fill="#fff" stroke="#ff0000"/></g>
<g transform="translate(2402,280)" shape-rendering="crispEdges"><path d="M1 14L9 4L15 0M5 10L6 16M8 3H15" fill="none" stroke="#000" stroke-width="1.2" /><rect x="4.5" y="5.5" width="2" height="2" fill="#fff" stroke="#ff0000"/></g>
<g transform="translate(2430,280)" shape-rendering="crispEdges"><path d="M8 4V13M1 13.5H15" fill="none" stroke="#000" stroke-width="1.3" /><path d="M5 0L11 5M11 0L5 5" fill="none" stroke="#ff0000" stroke-width="1.5" /><rect x="6.5" y="11.5" width="2" height="2" fill="#fff" stroke="#ff0000"/></g>
<g transform="translate(2458,280)" shape-rendering="crispEdges"><path d="M8 5V15M1 9H15" fill="none" stroke="#000" stroke-width="1.3" /><path d="M5 0L11 5M11 0L5 5" fill="none" stroke="#ff0000" stroke-width="1.5" /><rect x="6.5" y="13.5" width="3" height="3" fill="#fff" stroke="#ff0000" stroke-width="1.5"/></g>
<g transform="translate(2290,308)" shape-rendering="crispEdges"><path d="M8 1V15M1 8H15M3 3L13 13M13 3L3 13" fill="none" stroke="#888" stroke-width="1" /><rect x="12" y="0" width="4" height="3" fill="#ff0000"/></g>
<g transform="translate(2318,308)" shape-rendering="crispEdges"><path d="M1 14L10 11L15 14Z" fill="#888"/><path d="M8 2L14 12L10 13L2 13" fill="none" stroke="#000" stroke-width="1" /><path d="M7 3L9 2V11L7 12Z" fill="#888"/><rect x="6.5" y="9.5" width="2" height="2" fill="#fff" stroke="#ff0000"/></g>
<rect x="2340" y="302" width="28" height="28" fill="#000080" />
<rect x="2341" y="303" width="26" height="26" fill="#fdc273" />
<g transform="translate(2346,308)" shape-rendering="crispEdges"><path d="M3.5 9V6Q3.5 1.5 8 1.5Q12.5 1.5 12.5 6V9" fill="none" stroke="#000" stroke-width="3" /><rect x="2" y="9" width="3" height="2" fill="#000"/><rect x="11" y="9" width="3" height="2" fill="#000"/><path d="M2 15Q2 11 8 11Q14 11 14 15" fill="none" stroke="#000" stroke-width="1.2" /><rect x="6.5" y="9.5" width="2" height="2" fill="#fff" stroke="#ff0000"/></g>
<rect x="2368" y="302" width="28" height="28" fill="#000080" />
<rect x="2369" y="303" width="26" height="26" fill="#fdc273" />
<g transform="translate(2374,308)" shape-rendering="crispEdges"><path d="M3 2V15" fill="none" stroke="#000" stroke-width="1.2" /><path d="M3 2H11V7L15 12" fill="none" stroke="#000" stroke-width="1" stroke-dasharray="1 1"/><rect x="1.5" y="0.5" width="2" height="2" fill="#fff" stroke="#ff0000"/><rect x="9.5" y="7.5" width="2" height="2" fill="#fff" stroke="#ff0000"/></g>
<rect x="2396" y="302" width="28" height="28" fill="#000080" />
<rect x="2397" y="303" width="26" height="26" fill="#fdc273" />
<g transform="translate(2402,308)" shape-rendering="crispEdges"><path d="M1 15L6 6L8 2L10 6L15 15" fill="none" stroke="#000" stroke-width="1.2" /><path d="M6 6L8 2L10 6" fill="none" stroke="#fdc273" stroke-width="1" stroke-dasharray="1 1"/><rect x="4.5" y="7.5" width="2" height="2" fill="#fff" stroke="#ff0000"/><rect x="9.5" y="7.5" width="2" height="2" fill="#fff" stroke="#ff0000"/></g>
<g transform="translate(2430,308)" shape-rendering="crispEdges"><path d="M1.5 1.5L8 5.5V15.5L1.5 11.5Z" fill="none" stroke="#ff0000" stroke-width="1.2" /><path d="M4 5L8 1L12 6V10H6Z" fill="none" stroke="#3030a0" stroke-width="1.2" /><path d="M3.5 7h3v5h-3z" fill="#aaa"/><rect x="7" y="13" width="2" height="3" fill="#ff0000"/></g>
<g transform="translate(2290,380)" shape-rendering="crispEdges"><path d="M2 13L12 3" fill="none" stroke="#000" stroke-width="1" /><rect x="0.5" y="12.5" width="2" height="2" fill="#fff" stroke="#2828ff"/><rect x="11.5" y="1.5" width="2" height="2" fill="#fff" stroke="#2828ff"/></g>
<g transform="translate(2318,380)" shape-rendering="crispEdges"><path d="M3 10L8 4M13 6L7 12L9 14" fill="none" stroke="#000" stroke-width="1" /><rect x="1.5" y="9.5" width="2" height="2" fill="#fff" stroke="#2828ff"/><rect x="7.5" y="2.5" width="2" height="2" fill="#fff" stroke="#2828ff"/><rect x="11.5" y="4.5" width="2" height="2" fill="#fff" stroke="#2828ff"/><rect x="8.5" y="12.5" width="2" height="2" fill="#fff" stroke="#2828ff"/></g>
<g transform="translate(2346,380)" shape-rendering="crispEdges"><path d="M5.5 1.5H10L13.5 5V11L10 14.5H5.5L2 11V5Z" fill="none" stroke="#000" stroke-width="1" /><rect x="5" y="14" width="6" height="2" fill="#000"/><rect x="1.5" y="2.5" width="2" height="2" fill="#fff" stroke="#2828ff"/><rect x="7.5" y="7.5" width="2" height="2" fill="#fff" stroke="#2828ff"/></g>
<g transform="translate(2374,380)" shape-rendering="crispEdges"><path d="M2 2L5 13L12 6Z" fill="none" stroke="#000" stroke-width="1" /><rect x="1.5" y="1.5" width="2" height="2" fill="#fff" stroke="#2828ff"/><rect x="11.5" y="5.5" width="2" height="2" fill="#fff" stroke="#2828ff"/><rect x="4.5" y="12.5" width="2" height="2" fill="#fff" stroke="#2828ff"/></g>
<g transform="translate(2402,380)" shape-rendering="crispEdges"><rect x="2.5" y="2.5" width="11" height="12" fill="none" stroke="#000" stroke-width="1.3"/><rect x="1.5" y="1.5" width="2" height="2" fill="#fff" stroke="#2828ff"/><rect x="12.5" y="12.5" width="2" height="2" fill="#fff" stroke="#2828ff"/></g>
<g transform="translate(2430,380)" shape-rendering="crispEdges"><path d="M2 8L8 2L12 6L6 13Z" fill="none" stroke="#000" stroke-width="1" /><rect x="7.5" y="1.5" width="2" height="2" fill="#fff" stroke="#2828ff"/><rect x="5.5" y="12.5" width="2" height="2" fill="#fff" stroke="#2828ff"/><path d="M12 9V11M11 10L13 12M12 9H14" fill="none" stroke="#0000ff" stroke-width="1.2" /></g>
<g transform="translate(2458,380)" shape-rendering="crispEdges"><path d="M1 12L12 2M6 7L12 13" fill="none" stroke="#000" stroke-width="1" /><rect x="5.5" y="5.5" width="2" height="2" fill="#fff" stroke="#2828ff"/><rect x="11.5" y="12.5" width="2" height="2" fill="#fff" stroke="#2828ff"/></g>
<g transform="translate(2290,408)" shape-rendering="crispEdges"><path d="M1 11L11 1M5 15L15 5" fill="none" stroke="#000" stroke-width="1" /><rect x="4.5" y="6.5" width="2" height="2" fill="#fff" stroke="#2828ff"/><rect x="8.5" y="10.5" width="2" height="2" fill="#fff" stroke="#2828ff"/></g>
<g transform="translate(2318,408)" shape-rendering="crispEdges"><path d="M5.5 4.5H10L13 8V12L10 15H5.5L2.5 12V8Z" fill="none" stroke="#000" stroke-width="1" /><rect x="5" y="14" width="5" height="2" fill="#000"/><path d="M5 0L14 11" fill="none" stroke="#000" stroke-width="1" /><rect x="8.5" y="4.5" width="2" height="2" fill="#fff" stroke="#2828ff"/></g>
<g transform="translate(2346,408)" shape-rendering="crispEdges"><path d="M1 1H4L7 3Q8 6 7 10L3 15" fill="none" stroke="#000" stroke-width="1.2" /><path d="M7 4L12 10" fill="none" stroke="#000" stroke-width="1" /><rect x="3" y="14" width="2" height="2" fill="#000"/><rect x="5.5" y="2.5" width="2" height="2" fill="#fff" stroke="#ff0000"/><rect x="11.5" y="10.5" width="2" height="2" fill="#fff" stroke="#2828ff"/></g>
<g transform="translate(2374,408)" shape-rendering="crispEdges"><path d="M0 0H3L7 3Q8 7 6 10Q4 14 0 15" fill="none" stroke="#000" stroke-width="1.2" /><path d="M7 3L13 10" fill="none" stroke="#000" stroke-width="1" /><rect x="0" y="14" width="3" height="2" fill="#000"/><rect x="5.5" y="2.5" width="2" height="2" fill="#fff" stroke="#2828ff"/><rect x="12.5" y="9.5" width="2" height="2" fill="#fff" stroke="#ff0000"/></g>
<g transform="translate(2402,408)" shape-rendering="crispEdges"><path d="M0 1H4L10 9M0 8H3L6 4M6 15V11L9 9L11 11V15" fill="none" stroke="#000" stroke-width="1.2" /><rect x="3.5" y="0.5" width="2" height="2" fill="#fff" stroke="#2828ff"/><rect x="10.5" y="9.5" width="2" height="2" fill="#fff" stroke="#2828ff"/></g>
<g transform="translate(2430,408)" shape-rendering="crispEdges"><path d="M0 10H3L10 2L11 0M7 4L13 6M5 12L6 14" fill="none" stroke="#000" stroke-width="1.2" /><rect x="8.5" y="3.5" width="2" height="2" fill="#fff" stroke="#2828ff"/><rect x="3.5" y="9.5" width="2" height="2" fill="#fff" stroke="#2828ff"/></g>
<g transform="translate(2458,408)" shape-rendering="crispEdges"><path d="M8.5 2V15M2 7L8 14L14 7" fill="none" stroke="#000" stroke-width="1.2" /><rect x="7.5" y="0.5" width="2" height="2" fill="#fff" stroke="#2828ff"/><rect x="0.5" y="6.5" width="2" height="2" fill="#fff" stroke="#2828ff"/><rect x="13.5" y="6.5" width="2" height="2" fill="#fff" stroke="#2828ff"/><rect x="7.5" y="13.5" width="2" height="2" fill="#fff" stroke="#2828ff"/></g>
<g transform="translate(2290,479)" shape-rendering="crispEdges"><circle cx="7.5" cy="8" r="6" fill="none" stroke="#000" stroke-width="1.2" /><rect x="5" y="13" width="5" height="2" fill="#000"/><rect x="6.5" y="7.5" width="2" height="2" fill="#fff" stroke="#2828ff"/><rect x="12.5" y="7.5" width="2" height="2" fill="#fff" stroke="#2828ff"/></g>
<g transform="translate(2318,479)" shape-rendering="crispEdges"><circle cx="7.5" cy="8" r="6" fill="none" stroke="#000" stroke-width="1.2" /><circle cx="7.5" cy="8" r="4" fill="none" stroke="#000" stroke-width="1" /><rect x="5" y="13" width="5" height="2" fill="#000"/><rect x="6.5" y="7.5" width="2" height="2" fill="#fff" stroke="#2828ff"/><rect x="9.5" y="7.5" width="2" height="2" fill="#fff" stroke="#2828ff"/><rect x="12.5" y="7.5" width="2" height="2" fill="#fff" stroke="#2828ff"/></g>
<g transform="translate(2346,479)" shape-rendering="crispEdges"><circle cx="8" cy="8" r="6" fill="none" stroke="#000" stroke-width="1.2" /><rect x="6" y="13" width="4" height="2" fill="#000"/><rect x="1.5" y="7.5" width="2" height="2" fill="#fff" stroke="#2828ff"/><rect x="12.5" y="7.5" width="2" height="2" fill="#fff" stroke="#2828ff"/></g>
<g transform="translate(2374,479)" shape-rendering="crispEdges"><circle cx="8" cy="8.5" r="6" fill="none" stroke="#000" stroke-width="1.2" /><path d="M0 1L4 4M13 2L15 0" fill="none" stroke="#000" stroke-width="1" /><rect x="6" y="14" width="4" height="2" fill="#000"/><rect x="2.5" y="1.5" width="2" height="2" fill="#fff" stroke="#2828ff"/><rect x="11.5" y="12.5" width="2" height="2" fill="#fff" stroke="#2828ff"/></g>
<g transform="translate(2402,479)" shape-rendering="crispEdges"><path d="M0 1.5H16" fill="none" stroke="#000" stroke-width="1.3" /><circle cx="8" cy="9" r="5.5" fill="none" stroke="#000" stroke-width="1.2" /><path d="M8 2V14" fill="none" stroke="#000" stroke-width="1" stroke-dasharray="2.2 1.6" shape-rendering="geometricPrecision"/><rect x="12.5" y="7.5" width="2" height="2" fill="#fff" stroke="#2828ff"/><rect x="7.5" y="13.5" width="2" height="2" fill="#fff" stroke="#2828ff"/></g>
<g transform="translate(2430,479)" shape-rendering="crispEdges"><circle cx="8" cy="8" r="6" fill="none" stroke="#000" stroke-width="1.2" /><rect x="3.5" y="1.5" width="2" height="2" fill="#fff" stroke="#2828ff"/><rect x="11.5" y="1.5" width="2" height="2" fill="#fff" stroke="#2828ff"/><rect x="7.5" y="13.5" width="2" height="2" fill="#fff" stroke="#2828ff"/></g>
<g transform="translate(2458,479)" shape-rendering="crispEdges"><circle cx="8" cy="8" r="6" fill="none" stroke="#000" stroke-width="1.2" /><path d="M1 1L5 4M11 1L15 3M1 15L4 11M12 12L14 16" fill="none" stroke="#000" stroke-width="1" /><rect x="7.5" y="0.5" width="2" height="2" fill="#fff" stroke="#2828ff"/><rect x="1.5" y="9.5" width="2" height="2" fill="#fff" stroke="#2828ff"/><rect x="12.5" y="9.5" width="2" height="2" fill="#fff" stroke="#2828ff"/></g>
<g transform="translate(2290,508)" shape-rendering="crispEdges"><circle cx="7" cy="10" r="4.5" fill="none" stroke="#000" stroke-width="1.2" /><path d="M0 13L13 1M3 12L4 15M9 12L9 15" fill="none" stroke="#000" stroke-width="1" /><rect x="5.5" y="5.5" width="2" height="2" fill="#fff" stroke="#2828ff"/><rect x="9.5" y="7.5" width="2" height="2" fill="#fff" stroke="#2828ff"/><rect x="5.5" y="9.5" width="2" height="2" fill="#fff" stroke="#2828ff"/></g>
<g transform="translate(2318,508)" shape-rendering="crispEdges"><ellipse cx="8" cy="9" rx="6" ry="3.5" fill="none" stroke="#000" stroke-width="1.2"/><rect x="1.5" y="5.5" width="2" height="2" fill="#fff" stroke="#2828ff"/><rect x="12.5" y="11.5" width="2" height="2" fill="#fff" stroke="#2828ff"/></g>
<g transform="translate(2346,508)" shape-rendering="crispEdges"><ellipse cx="8" cy="8" rx="3.5" ry="7" transform="rotate(40 8 8)" fill="none" stroke="#000" stroke-width="1.2"/><path d="M3 13L13 3" fill="none" stroke="#000" stroke-width="1" /><rect x="11.5" y="1.5" width="2" height="2" fill="#fff" stroke="#2828ff"/><rect x="6.5" y="7.5" width="2" height="2" fill="#fff" stroke="#2828ff"/><rect x="9.5" y="5.5" width="2" height="2" fill="#fff" stroke="#2828ff"/><rect x="1.5" y="12.5" width="2" height="2" fill="#fff" stroke="#2828ff"/></g>
<g transform="translate(2374,508)" shape-rendering="crispEdges"><ellipse cx="8" cy="11" rx="6" ry="3.5" fill="none" stroke="#000" stroke-width="1.2"/><rect x="5" y="14" width="6" height="2" fill="#000"/><text x="2" y="5.5" font-family="Liberation Sans" font-size="6" font-weight="bold" fill="#0000ff">a:b</text></g>
<g transform="translate(2290,579)" shape-rendering="crispEdges"><path d="M2 12Q1 4 8 3Q15 4 14 12" fill="none" stroke="#000" stroke-width="1.2" /><path d="M8 9H13" fill="none" stroke="#000" stroke-width="1" /><rect x="1.5" y="11.5" width="2" height="2" fill="#fff" stroke="#2828ff"/><rect x="7.5" y="8.5" width="2" height="2" fill="#fff" stroke="#2828ff"/><rect x="12.5" y="8.5" width="2" height="2" fill="#fff" stroke="#2828ff"/></g>
<g transform="translate(2318,579)" shape-rendering="crispEdges"><path d="M2 13Q1 3 8 2.5Q15 3 14 13" fill="none" stroke="#000" stroke-width="1.2" /><path d="M4 13Q4 6 8 6Q12 6 12 13" fill="none" stroke="#000" stroke-width="1" /><rect x="2.5" y="12.5" width="2" height="2" fill="#fff" stroke="#2828ff"/><rect x="7.5" y="8.5" width="2" height="2" fill="#fff" stroke="#2828ff"/><rect x="12.5" y="8.5" width="2" height="2" fill="#fff" stroke="#2828ff"/></g>
<g transform="translate(2346,579)" shape-rendering="crispEdges"><path d="M2 7Q3 14 8 14Q14 13 14 4" fill="none" stroke="#000" stroke-width="1.2" /><path d="M3 8L13 3" fill="none" stroke="#000" stroke-width="1" stroke-dasharray="2.2 1.6" shape-rendering="geometricPrecision"/><rect x="1.5" y="5.5" width="2" height="2" fill="#fff" stroke="#2828ff"/><rect x="12.5" y="1.5" width="2" height="2" fill="#fff" stroke="#2828ff"/></g>
<g transform="translate(2374,579)" shape-rendering="crispEdges"><path d="M0 14L12 2" fill="none" stroke="#000" stroke-width="1.2" /><path d="M3 3L14 14" fill="none" stroke="#000" stroke-width="1" stroke-dasharray="2.2 1.6" shape-rendering="geometricPrecision"/><path d="M5 14Q5 8 11 8" fill="none" stroke="#000" stroke-width="1" /><rect x="6.5" y="8.5" width="2" height="2" fill="#fff" stroke="#2828ff"/><rect x="10.5" y="8.5" width="2" height="2" fill="#fff" stroke="#2828ff"/><rect x="6.5" y="12.5" width="2" height="2" fill="#fff" stroke="#2828ff"/></g>
<g transform="translate(2402,579)" shape-rendering="crispEdges"><text x="0" y="6" font-family="Liberation Sans" font-size="6" fill="#000">1</text><text x="0" y="15" font-family="Liberation Sans" font-size="6" fill="#000">3</text><text x="6" y="10" font-family="Liberation Sans" font-size="6" fill="#000">2</text><path d="M7 2Q15 3 14 8Q13 14 7 14" fill="none" stroke="#000" stroke-width="1.2" /><rect x="5.5" y="0.5" width="2" height="2" fill="#fff" stroke="#2828ff"/><rect x="12.5" y="7.5" width="2" height="2" fill="#fff" stroke="#2828ff"/><rect x="5.5" y="13.5" width="2" height="2" fill="#fff" stroke="#2828ff"/></g>
<g transform="translate(2430,579)" shape-rendering="crispEdges"><text x="0" y="6" font-family="Liberation Sans" font-size="6" fill="#000">1</text><text x="0" y="15" font-family="Liberation Sans" font-size="6" fill="#000">2</text><text x="7" y="10" font-family="Liberation Sans" font-size="6" fill="#000">3</text><path d="M7 2Q15 3 14 8Q13 14 7 14" fill="none" stroke="#000" stroke-width="1.2" /><rect x="5.5" y="0.5" width="2" height="2" fill="#fff" stroke="#2828ff"/><rect x="12.5" y="7.5" width="2" height="2" fill="#fff" stroke="#2828ff"/><rect x="5.5" y="13.5" width="2" height="2" fill="#fff" stroke="#2828ff"/></g>
<g transform="translate(2458,579)" shape-rendering="crispEdges"><path d="M6 2Q1 5 3 11Q7 15 13 11" fill="none" stroke="#000" stroke-width="1.2" /><path d="M1 0L5 4M10 0L12 2" fill="none" stroke="#000" stroke-width="1" /><path d="M8 2H12L9 9M13 5L13 9" fill="none" stroke="#000" stroke-width="1" stroke-dasharray="2.2 1.6" shape-rendering="geometricPrecision"/><rect x="6.5" y="1.5" width="2" height="2" fill="#fff" stroke="#2828ff"/><rect x="1.5" y="5.5" width="2" height="2" fill="#fff" stroke="#2828ff"/><rect x="12.5" y="11.5" width="2" height="2" fill="#fff" stroke="#2828ff"/></g>
<g transform="translate(2290,608)" shape-rendering="crispEdges"><path d="M0 13L13 1M3 12L4 15M9 12L9 15" fill="none" stroke="#000" stroke-width="1" /><path d="M4 5Q11 3 11 9" fill="none" stroke="#000" stroke-width="1" /><rect x="5.5" y="5.5" width="2" height="2" fill="#fff" stroke="#2828ff"/><rect x="9.5" y="7.5" width="2" height="2" fill="#fff" stroke="#2828ff"/><rect x="5.5" y="9.5" width="2" height="2" fill="#fff" stroke="#2828ff"/></g>
<g transform="translate(2318,608)" shape-rendering="crispEdges"><path d="M0 13L13 1M3 12L4 15M9 12L9 15" fill="none" stroke="#000" stroke-width="1" /><path d="M6 4Q11 6 10 11" fill="none" stroke="#000" stroke-width="1" stroke-dasharray="2.2 1.6" shape-rendering="geometricPrecision"/><rect x="4.5" y="9.5" width="2" height="2" fill="#fff" stroke="#2828ff"/><rect x="8.5" y="7.5" width="2" height="2" fill="#fff" stroke="#2828ff"/></g>
<g transform="translate(2346,608)" shape-rendering="crispEdges"><path d="M2 13Q1 4 7 4Q13 4 14 11" fill="none" stroke="#000" stroke-width="1.2" /><path d="M7 4L10 1M4 9L12 4" fill="none" stroke="#000" stroke-width="1" stroke-dasharray="2.2 1.6" shape-rendering="geometricPrecision"/><rect x="1.5" y="12.5" width="2" height="2" fill="#fff" stroke="#2828ff"/><rect x="5.5" y="2.5" width="2" height="2" fill="#fff" stroke="#2828ff"/><rect x="12.5" y="9.5" width="2" height="2" fill="#fff" stroke="#2828ff"/></g>
<g transform="translate(2374,608)" shape-rendering="crispEdges"><ellipse cx="8" cy="9" rx="6" ry="4" fill="none" stroke="#000" stroke-width="1.2"/><path d="M3 3L8 8L13 3" fill="none" stroke="#000" stroke-width="1" stroke-dasharray="2.2 1.6" shape-rendering="geometricPrecision"/><rect x="1.5" y="1.5" width="2" height="2" fill="#fff" stroke="#2828ff"/><rect x="6.5" y="4.5" width="2" height="2" fill="#fff" stroke="#2828ff"/><rect x="11.5" y="4.5" width="2" height="2" fill="#fff" stroke="#2828ff"/><rect x="12.5" y="11.5" width="2" height="2" fill="#fff" stroke="#2828ff"/></g>
<g transform="translate(2402,608)" shape-rendering="crispEdges"><ellipse cx="8" cy="8" rx="3.5" ry="7" transform="rotate(40 8 8)" fill="none" stroke="#000" stroke-width="1.2"/><path d="M3 13L13 3" fill="none" stroke="#000" stroke-width="1" /><rect x="12.5" y="1.5" width="2" height="2" fill="#fff" stroke="#2828ff"/><rect x="6.5" y="9.5" width="2" height="2" fill="#fff" stroke="#2828ff"/><rect x="9.5" y="6.5" width="2" height="2" fill="#fff" stroke="#2828ff"/><rect x="0.5" y="12.5" width="2" height="2" fill="#fff" stroke="#2828ff"/></g>
<g transform="translate(2430,608)" shape-rendering="crispEdges"><path d="M2 14Q2 7 8 7Q14 7 14 14" fill="none" stroke="#000" stroke-width="1.2" /><text x="2" y="5.5" font-family="Liberation Sans" font-size="6" font-weight="bold" fill="#0000ff">a:b</text></g>
<g transform="translate(2290,680)" shape-rendering="crispEdges"><path d="M2 14Q8 -2 14 14" fill="none" stroke="#000" stroke-width="1.2" /><rect x="0.5" y="13.5" width="2" height="2" fill="#fff" stroke="#2828ff"/><rect x="2.5" y="1.5" width="2" height="2" fill="#fff" stroke="#2828ff"/><rect x="12.5" y="1.5" width="2" height="2" fill="#fff" stroke="#2828ff"/><rect x="13.5" y="12.5" width="2" height="2" fill="#fff" stroke="#2828ff"/></g>
<g transform="translate(2318,680)" shape-rendering="crispEdges"><path d="M2 14L9 9Q2 7 6 4L13 3" fill="none" stroke="#000" stroke-width="1.2" /><rect x="0.5" y="13.5" width="2" height="2" fill="#fff" stroke="#2828ff"/><rect x="5.5" y="2.5" width="2" height="2" fill="#fff" stroke="#2828ff"/><rect x="12.5" y="1.5" width="2" height="2" fill="#fff" stroke="#2828ff"/><rect x="8.5" y="8.5" width="2" height="2" fill="#fff" stroke="#2828ff"/></g>
<g transform="translate(2346,680)" shape-rendering="crispEdges"><path d="M2 14Q3 2 8 2Q13 2 14 14" fill="none" stroke="#000" stroke-width="1.2" /><rect x="0.5" y="13.5" width="2" height="2" fill="#fff" stroke="#2828ff"/><rect x="3.5" y="1.5" width="2" height="2" fill="#fff" stroke="#2828ff"/><rect x="11.5" y="1.5" width="2" height="2" fill="#fff" stroke="#2828ff"/><rect x="13.5" y="12.5" width="2" height="2" fill="#fff" stroke="#2828ff"/></g>
<g transform="translate(2374,680)" shape-rendering="crispEdges"><path d="M2 14Q1 5 7 2Q14 0 14 7Q14 12 9 12Q6 12 7 8" fill="none" stroke="#000" stroke-width="1.2" /><rect x="0.5" y="12.5" width="2" height="2" fill="#fff" stroke="#2828ff"/><rect x="7.5" y="6.5" width="2" height="2" fill="#fff" stroke="#2828ff"/></g>
<g transform="translate(2402,680)" shape-rendering="crispEdges"><path d="M2 14Q1 5 7 2Q14 0 14 7Q14 12 9 12Q6 12 7 8" fill="none" stroke="#000" stroke-width="1.2" /><rect x="0.5" y="12.5" width="2" height="2" fill="#fff" stroke="#2828ff"/><rect x="8.5" y="6.5" width="2" height="2" fill="#fff" stroke="#2828ff"/></g>
<g transform="translate(2430,680)" shape-rendering="crispEdges"><path d="M3 5Q4 0 8 2Q13 0 13 6Q16 10 12 13Q8 16 4 13Q0 11 3 5" fill="none" stroke="#000" stroke-width="1.2" /><rect x="5" y="13" width="2" height="2" fill="#000"/><rect x="4.5" y="1.5" width="2" height="2" fill="#fff" stroke="#2828ff"/><rect x="10.5" y="12.5" width="2" height="2" fill="#fff" stroke="#2828ff"/></g>
<g transform="translate(2458,680)" shape-rendering="crispEdges"><path d="M2 14L7 8L11 12L14 3" fill="none" stroke="#999" stroke-width="1" stroke-dasharray="1.5 1"/><rect x="1.5" y="12.5" width="3" height="3" fill="#fff" stroke="#999" stroke-width="1"/><rect x="5.5" y="1.5" width="3" height="3" fill="#fff" stroke="#999" stroke-width="1"/><rect x="9.5" y="11.5" width="3" height="3" fill="#fff" stroke="#999" stroke-width="1"/><rect x="12.5" y="1.5" width="3" height="3" fill="#fff" stroke="#999" stroke-width="1"/></g>
<g transform="translate(2290,752)" shape-rendering="crispEdges"><path d="M1 11L7 5M6 15L13 8" fill="none" stroke="#000" stroke-width="1" stroke-dasharray="2.2 1.6" shape-rendering="geometricPrecision"/><path d="M1 12L12 1" fill="none" stroke="#000" stroke-width="1" /><rect x="10.5" y="1.5" width="2" height="2" fill="#fff" stroke="#2828ff"/><rect x="0.5" y="11.5" width="2" height="2" fill="#fff" stroke="#2828ff"/><rect x="4.5" y="6.5" width="2" height="2" fill="#fff" stroke="#2828ff"/></g>
<g transform="translate(2318,752)" shape-rendering="crispEdges"><path d="M2 9L7 4L12 9M2 13L7 8L12 13" fill="none" stroke="#000" stroke-width="1" /><rect x="6.5" y="2.5" width="2" height="2" fill="#fff" stroke="#2828ff"/><rect x="1.5" y="11.5" width="2" height="2" fill="#fff" stroke="#2828ff"/><rect x="11.5" y="11.5" width="2" height="2" fill="#fff" stroke="#2828ff"/><rect x="6.5" y="7.5" width="2" height="2" fill="#fff" stroke="#2828ff"/></g>
<g transform="translate(2346,752)" shape-rendering="crispEdges"><circle cx="8" cy="8" r="6" fill="none" stroke="#000" stroke-width="1.2" /><circle cx="8" cy="8" r="3.5" fill="none" stroke="#000" stroke-width="1" /><rect x="6" y="13" width="4" height="2" fill="#000"/><rect x="1.5" y="1.5" width="2" height="2" fill="#fff" stroke="#2828ff"/><rect x="7.5" y="7.5" width="2" height="2" fill="#fff" stroke="#2828ff"/></g>
<g transform="translate(2374,752)" shape-rendering="crispEdges"><path d="M2 3L6 1L13 3L15 10L9 14L2 10Z M5 5H10L12 9L8 11L4 8Z" fill="none" stroke="#000" stroke-width="1.3" /><rect x="1.5" y="1.5" width="2" height="2" fill="#fff" stroke="#2828ff"/><rect x="11.5" y="9.5" width="2" height="2" fill="#fff" stroke="#2828ff"/><rect x="5.5" y="5.5" width="2" height="2" fill="#fff" stroke="#2828ff"/></g>
<g transform="translate(2402,752)" shape-rendering="crispEdges"><rect x="1.5" y="1.5" width="13" height="13" fill="none" stroke="#000" stroke-width="1.5"/><rect x="4.5" y="4.5" width="7" height="7" fill="none" stroke="#000" stroke-width="1.2"/><rect x="0.5" y="0.5" width="2" height="2" fill="#fff" stroke="#2828ff"/><rect x="13.5" y="13.5" width="2" height="2" fill="#fff" stroke="#2828ff"/></g>
<g transform="translate(2430,752)" shape-rendering="crispEdges"><path d="M2 8L8 2L12 6L6 12Z M4 8L8 4L10 6L6 10Z" fill="none" stroke="#000" stroke-width="1" /><rect x="6.5" y="1.5" width="2" height="2" fill="#fff" stroke="#2828ff"/><rect x="4.5" y="11.5" width="2" height="2" fill="#fff" stroke="#2828ff"/><path d="M12 9V11M11 10L13 12" fill="none" stroke="#0000ff" stroke-width="1.2" /></g>
<g transform="translate(2458,752)" shape-rendering="crispEdges"><path d="M1 5L5 1L15 11L11 15Z" fill="none" stroke="#000" stroke-width="1" /><path d="M3 7L7 3" fill="none" stroke="#000" stroke-width="1" stroke-dasharray="2.2 1.6" shape-rendering="geometricPrecision"/><rect x="3.5" y="1.5" width="2" height="2" fill="#fff" stroke="#2828ff"/><rect x="11.5" y="11.5" width="2" height="2" fill="#fff" stroke="#2828ff"/></g>
<g transform="translate(2290,779)" shape-rendering="crispEdges"><path d="M1 6L7 0M5 13L14 4M2 9L10 1" fill="none" stroke="#000" stroke-width="1" /><rect x="2.5" y="3.5" width="2" height="2" fill="#fff" stroke="#2828ff"/><rect x="6.5" y="8.5" width="2" height="2" fill="#fff" stroke="#2828ff"/></g>
<g transform="translate(2290,879)" shape-rendering="crispEdges"><path d="M2 1.5H14M2 14.5H14" fill="none" stroke="#000" stroke-width="1" /><path d="M8 3V13M3 8H13" fill="none" stroke="#000" stroke-width="1" /><path d="M8 2.5l-2.5 3h5zM8 13.5l-2.5-3h5zM2.5 8l3-2.5v5zM13.5 8l-3-2.5v5z" fill="#000"/></g>
<g transform="translate(2318,879)" shape-rendering="crispEdges"><path d="M1.5 7.5L7.5 1.5M8.5 14.5L14.5 8.5M2 8L9 15M7 2L14 9" fill="none" stroke="#000" stroke-width="1" /><path d="M5 4L12 11" fill="none" stroke="#000" stroke-width="1" /><path d="M4.5 3.5l3.5 1-2.5 2.5zM12.5 11.5l-3.5-1 2.5-2.5z" fill="#000"/></g>
<g transform="translate(2346,879)" shape-rendering="crispEdges"><path d="M1.5 5.5L5.5 1.5L15 11L11 15Z" fill="none" stroke="#000" stroke-width="1" /><path d="M4 3L13 12" fill="none" stroke="#000" stroke-width="1" /><path d="M3.5 2.5l3.5 1-2.5 2.5zM13.5 12.5l-3.5-1 2.5-2.5z" fill="#000"/></g>
<g transform="translate(2374,879)" shape-rendering="crispEdges"><path d="M1 1.5H4M1 8.5H4M1 14.5H4" fill="none" stroke="#3030ff" stroke-width="1" /><path d="M7.5 1.5H14.5V14.5H10.5V6.5H7.5Z" fill="#c8c8c8" stroke="#000" stroke-width="1.5" /></g>
<g transform="translate(2402,879)" shape-rendering="crispEdges"><path d="M2.5 1V15M14.5 1V15M3 3.5H14M3 8.5H12M3 12.5H8" fill="none" stroke="#000" stroke-width="1" /><path d="M3 3.5l2-1.5v3zM14 3.5l-2-1.5v3zM3 8.5l2-1.5v3zM3 12.5l2-1.5v3z" fill="#000"/></g>
<g transform="translate(2430,879)" shape-rendering="crispEdges"><path d="M1.5 1V15M6.5 1V15M14.5 1V15M2 4.5H14" fill="none" stroke="#000" stroke-width="1" /><path d="M2 4.5l2-1.5v3zM6 4.5l-2-1.5v3zM7 4.5l2-1.5v3zM14 4.5l-2-1.5v3z" fill="#000"/></g>
<g transform="translate(2458,879)" shape-rendering="crispEdges"><path d="M1.5 5V11M8.5 1V12M14.5 1V12M2 7.5H14" fill="none" stroke="#000" stroke-width="1" /><path d="M2 7.5l2-1.5v3zM8 7.5l-2-1.5v3zM9 7.5l2-1.5v3zM14 7.5l-2-1.5v3z" fill="#000"/><rect x="6" y="13" width="2" height="3" fill="#222"/><rect x="12" y="13" width="2" height="3" fill="#222"/></g>
<g transform="translate(2290,908)" shape-rendering="crispEdges"><path d="M2.5 1V14.5H15" fill="none" stroke="#000" stroke-width="1" /><path d="M2.5 3Q10 4 12 13" fill="none" stroke="#000" stroke-width="1" /><path d="M12 14l-2-3h4z" fill="#000"/><text x="9" y="7" font-family="Liberation Sans" font-size="8" fill="#3030ff">A</text></g>
<g transform="translate(2318,908)" shape-rendering="crispEdges"><circle cx="6" cy="10" r="5" fill="none" stroke="#000" stroke-width="1" /><path d="M6 10L12 3" fill="none" stroke="#e03030" stroke-width="1" /><path d="M13 2l-3 1 2 2z" fill="#000"/><text x="11" y="7" font-family="Liberation Sans" font-size="7" fill="#3030ff">R</text></g>
<g transform="translate(2346,908)" shape-rendering="crispEdges"><circle cx="6" cy="10" r="5" fill="none" stroke="#000" stroke-width="1" /><path d="M2 14L11 5" fill="none" stroke="#e03030" stroke-width="1" /><path d="M11 5L14 2" fill="none" stroke="#000" stroke-width="1" /><text x="11" y="7" font-family="Liberation Sans" font-size="7" fill="#3030ff">D</text></g>
<g transform="translate(2374,908)" shape-rendering="crispEdges"><path d="M7.5 3.5H14.5V7.5H8L2 13" fill="none" stroke="#000" stroke-width="1" /><path d="M1.5 14.5l1-4 3 3z" fill="#000"/><path d="M2 14L4 12" fill="none" stroke="#000" stroke-width="1" /></g>
<g transform="translate(2402,908)" shape-rendering="crispEdges"><path d="M7.5 2.5H14.5V6.5H8M8 6.5L2 12M12 6.5L7 12" fill="none" stroke="#000" stroke-width="1" /><path d="M1.5 13.5l1-4 3 3zM6.5 13.5l1-4 3 3z" fill="#000"/></g>
<g transform="translate(2430,908)" shape-rendering="crispEdges"><text x="3" y="13" font-family="Liberation Sans" font-size="12" fill="#333">Q</text></g>
<g transform="translate(2458,908)" shape-rendering="crispEdges"><path d="M2.5 1V9M14.5 3V14M3 2H14M3 13H14" fill="none" stroke="#888" stroke-width="1" /><path d="M4 10L14 2" fill="none" stroke="#000" stroke-width="1" /><path d="M3 9h2v2h-2zM13 1h2v2h-2z M5 13l2-1.5v3zM13 13l-2-1.5v3z" fill="#000"/></g>
<g transform="translate(2290,934)" shape-rendering="crispEdges"><rect x="1.5" y="1.5" width="5" height="13" fill="#fff" stroke="#000" stroke-width="1"/><rect x="2" y="2" width="4" height="5" fill="#ff3030"/><path d="M2 9L6 13M6 9L2 13" fill="none" stroke="#ff3030" stroke-width="1" /><rect x="6.5" y="1.5" width="9" height="6" fill="#fff" stroke="#000" stroke-width="1"/></g>
<rect x="2271" y="961" width="263" height="30" fill="#f0f0f0" />
<rect x="2272.5" y="963.5" width="57" height="23" fill="#ffffff" stroke="#e4e4e4" stroke-width="1" />
<rect x="2330.5" y="965.5" width="71" height="19" fill="#f0f0f0" stroke="#e4e4e4" stroke-width="1" />
<rect x="2401.5" y="965.5" width="63" height="19" fill="#f0f0f0" stroke="#e4e4e4" stroke-width="1" />
<rect x="2464.5" y="965.5" width="62" height="19" fill="#f0f0f0" stroke="#e4e4e4" stroke-width="1" />
<g transform="translate(2278,967)" shape-rendering="crispEdges"><path d="M1 9L7 6L13 9V15L7 16L1 14Z" fill="#ff0000"/><path d="M1 9L7 6L13 9L7 12ZM7 12V16" fill="none" stroke="#000" stroke-width="1" /><path d="M3 7L5 2L9 5M7 2L12 7" fill="none" stroke="#000" stroke-width="1.2" /><path d="M9 5l3-1 1 3-3 1z" fill="#fff"/></g>
<text x="2295" y="980" font-family="Liberation Sans" font-size="13" fill="#000" stroke="#000" stroke-width="0.22" textLength="27" lengthAdjust="spacingAndGlyphs" >Tools</text>
<g transform="translate(2333,966)" shape-rendering="crispEdges"><path d="M2 1V13L5 10L7.5 15L9.5 14L7 9H11Z" fill="#000080"/><rect x="12" y="11" width="2" height="2" fill="#0000ff"/><rect x="12" y="14" width="2" height="2" fill="#0000ff"/></g>
<text x="2352" y="979" font-family="Liberation Sans" font-size="13" fill="#000" stroke="#000" stroke-width="0.22" textLength="44" lengthAdjust="spacingAndGlyphs" >Selecti...</text>
<g transform="translate(2406,966)" shape-rendering="crispEdges"><rect x="4.5" y="1.5" width="10" height="10" fill="none" stroke="#000080" stroke-width="1.6"/><rect x="7.5" y="4.5" width="5" height="5" fill="none" stroke="#000080" stroke-width="1.2"/><rect x="3" y="0" width="3" height="3" fill="#000080"/><rect x="13" y="0" width="3" height="3" fill="#000080"/><rect x="13" y="10" width="3" height="3" fill="#000080"/><rect x="1.5" y="8.5" width="6" height="6" fill="#fff" stroke="#000" stroke-width="1.3"/><path d="M3 10L6 13M3 10H5M3 10V12" fill="none" stroke="#000" stroke-width="1" /></g>
<text x="2426" y="979" font-family="Liberation Sans" font-size="13" fill="#000" stroke="#000" stroke-width="0.22" textLength="34" lengthAdjust="spacingAndGlyphs" >Blocks</text>
<g transform="translate(2468,966)" shape-rendering="crispEdges"><rect x="1" y="2" width="2" height="12" fill="#0000ff"/><path d="M2 14L5 3" fill="none" stroke="#0000ff" stroke-width="2" /><rect x="6" y="4" width="2" height="10" fill="#ffff00"/><rect x="9" y="3" width="2" height="11" fill="#ff0000"/><rect x="12" y="5" width="2" height="9" fill="#0000ff"/><rect x="1" y="13" width="14" height="1.5" fill="#000080"/></g>
<text x="2489" y="979" font-family="Liberation Sans" font-size="13" fill="#000" stroke="#000" stroke-width="0.22" textLength="35" lengthAdjust="spacingAndGlyphs" >Library</text>
<rect x="2271" y="991" width="263" height="1" fill="#5a5a5a" />
<rect x="2271" y="991" width="1" height="23" fill="#5a5a5a" />
<rect x="2533" y="991" width="1" height="23" fill="#5a5a5a" />
<rect x="2272" y="992" width="261" height="22" fill="url(#tg)" />
<text x="2275" y="1006.5" font-family="Liberation Sans" font-size="13" fill="#000" stroke="#000" stroke-width="0.22" textLength="97" lengthAdjust="spacingAndGlyphs" >Measurement Info</text>
<g transform="translate(2497,994)" shape-rendering="crispEdges"><ellipse cx="10" cy="6" rx="4.5" ry="4.5" fill="#e8e8e8" stroke="#aaa"/><ellipse cx="7" cy="9" rx="4" ry="4" fill="#d0d0d0" stroke="#aaa"/><circle cx="10.5" cy="5" r="2" fill="#fff" stroke="none" stroke-width="1" /><path d="M4.5 11.5L1 15" fill="none" stroke="#999" stroke-width="1.6" /></g>
<rect x="2517" y="995" width="14" height="14" fill="#a6a6a6" rx="1"/>
<path d="M2520 998L2528 1006M2528 998L2520 1006" stroke="#fff" stroke-width="2.2"/>
<rect x="2276" y="1021" width="22" height="1" fill="#a8a8a8" />
<rect x="2276" y="1021" width="1" height="22" fill="#a8a8a8" />
<rect x="2277" y="1022" width="22" height="21" fill="#f4f4f4" />
<g transform="translate(2280,1026)" shape-rendering="crispEdges"><rect x="2.5" y="2.5" width="11" height="11" fill="#fff" stroke="#000" stroke-width="1.4"/><path d="M4.5 5.5H5.5M7 5.5H11.5M4.5 8H5.5M7 8H11.5M4.5 10.5H5.5M7 10.5H11.5" fill="none" stroke="#000" stroke-width="1.3" /></g>
<g transform="translate(2303,1026)" shape-rendering="crispEdges"><path d="M4 4L12 12M12 4L4 12" fill="none" stroke="#333" stroke-width="2.2" /></g>
<rect x="2275.5" y="1046.5" width="254" height="260" fill="#ffffff" stroke="#a0a0a0" stroke-width="1" />
<rect x="2511" y="1047" width="18" height="259" fill="#ffffff" />
<path d="M2516.5 1058.5l3.5-3.5 3.5 3.5M2516.5 1294.5l3.5 3.5 3.5-3.5" fill="none" stroke="#c8c8c8" stroke-width="1.6"/>
<rect x="2559" y="156" width="1" height="352" fill="#a0a0a0" />
<rect x="2534" y="507" width="26" height="1" fill="#a0a0a0" />
<rect x="2538" y="161" width="2" height="2" fill="#a8a8a8"/><rect x="2539" y="162" width="1" height="1" fill="#ffffff"/><rect x="2542" y="161" width="2" height="2" fill="#a8a8a8"/><rect x="2543" y="162" width="1" height="1" fill="#ffffff"/><rect x="2546" y="161" width="2" height="2" fill="#a8a8a8"/><rect x="2547" y="162" width="1" height="1" fill="#ffffff"/><rect x="2550" y="161" width="2" height="2" fill="#a8a8a8"/><rect x="2551" y="162" width="1" height="1" fill="#ffffff"/><rect x="2554" y="161" width="2" height="2" fill="#a8a8a8"/><rect x="2555" y="162" width="1" height="1" fill="#ffffff"/>
<g transform="translate(2539,169)" shape-rendering="crispEdges"><rect x="1.5" y="1.5" width="9" height="9" fill="#fff" stroke="#999" stroke-width="1"/><rect x="3.5" y="3.5" width="9" height="9" fill="#fff" stroke="#999" stroke-width="1"/><rect x="5.5" y="5.5" width="9" height="9" fill="#fff" stroke="#999" stroke-width="1"/></g>
<g transform="translate(2539,196)" shape-rendering="crispEdges"><path d="M3 1V7Q3 13 9 13H15" fill="none" stroke="#333" stroke-width="1.2" /><path d="M3 7Q3 13 9 13" fill="none" stroke="#ff3030" stroke-width="1.2" /></g>
<g transform="translate(2539,218)" shape-rendering="crispEdges"><path d="M2 14L12 4" fill="none" stroke="#bbb" stroke-width="1.5" /><path d="M1 9V15H7Z" fill="#bbb"/><path d="M9 1H15V7Z" fill="#bbb"/><circle cx="8" cy="8" r="2" fill="#fff" stroke="#aaa" stroke-width="1" /></g>
<g transform="translate(2539,248)" shape-rendering="crispEdges"><path d="M1.5 3.5H6.5V8.5H1.5Z" fill="none" stroke="#333" stroke-width="1" stroke-dasharray="2 1"/><path d="M6 2Q12 1 13 7" fill="none" stroke="#30d030" stroke-width="1.4" /><path d="M11 6l2 3 2-3z" fill="#30d030"/><rect x="8.5" y="9.5" width="7" height="6" fill="#fff" stroke="#ff3030" stroke-width="1.2"/></g>
<g transform="translate(2539,269)" shape-rendering="crispEdges"><path d="M1.5 8.5Q1.5 5.5 4.5 5.5H12.5L14.5 8.5V14.5H1.5Z" fill="#fff" stroke="#333" stroke-width="1.2" /><rect x="7" y="1" width="2" height="5" fill="#333"/><path d="M5 10H11M11 10L9 8.5M5 12H11M5 12L7 13.5" fill="none" stroke="#aaa" stroke-width="1" /></g>
<g transform="translate(2539,296)" shape-rendering="crispEdges"><rect x="1.5" y="1.5" width="8" height="8" fill="#d8d8d8" stroke="#aaa" stroke-width="1"/><rect x="4.5" y="4.5" width="8" height="8" fill="#e8e8e8" stroke="#aaa" stroke-width="1"/><rect x="8.5" y="8.5" width="7" height="7" fill="#c8c8c8" stroke="#aaa" stroke-width="1"/></g>
<g transform="translate(2539,325)" shape-rendering="crispEdges"><rect x="0.5" y="2.5" width="15" height="12" fill="#fff" stroke="#333" stroke-width="1.5"/><path d="M1 6H15M1 9H15M1 12H15M5 3V14M11 3V14" fill="none" stroke="#333" stroke-width="1" /><rect x="4.5" y="7.5" width="7" height="4" fill="#fff" stroke="#ff0000" stroke-width="1.5"/></g>
<g transform="translate(2539,347)" shape-rendering="crispEdges"><path d="M1.5 4.5L4.5 1.5H14.5V9.5L11.5 12.5H1.5ZM1.5 4.5H11.5V12.5M11.5 4.5L14.5 1.5" fill="#fff" stroke="#999" stroke-width="1" /><path d="M2 10L5 7L7 9L10 6L13 9" fill="none" stroke="#3030a0" stroke-width="1.3" /><path d="M11 6h3v3z" fill="#3030a0"/></g>
<g transform="translate(2539,370)" shape-rendering="crispEdges"><circle cx="9.5" cy="8" r="6" fill="#a8a8a8" stroke="#3030a0" stroke-width="1.2" /><circle cx="9.5" cy="8" r="2.5" fill="#e0e0e0" stroke="none" stroke-width="1" /><path d="M1.5 8.5L4.5 5.5H9V14.5H1.5Z" fill="#fff" stroke="#3030a0" stroke-width="1.2" /><path d="M9 5.5L12 2" fill="none" stroke="#3030a0" stroke-width="1" /></g>
<g transform="translate(2539,389)" shape-rendering="crispEdges"><path d="M0.5 4.5L4.5 0.5L11.5 7.5L7.5 11.5Z" fill="#f0e830" stroke="#222" stroke-width="1" /><path d="M3 4L6 7M6 3L8 5" fill="none" stroke="#222" stroke-width="1" /><path d="M8 9l3-3 2 2-3 3z" fill="#222"/><path d="M13 7.5l1.5 1.5-1.5 1.5-1.5-1.5z" fill="#30c0a0"/><path d="M6 10.5l1.5 1.5-1.5 1.5-1.5-1.5z" fill="#30c0a0"/><path d="M11 12.5l1.5 1.5-1.5 1.5-1.5-1.5z" fill="#30c0a0"/></g>
<g transform="translate(2539,413)" shape-rendering="crispEdges"><rect x="0.5" y="2.5" width="6" height="8" fill="#fff" stroke="#333" stroke-width="1.3"/><path d="M2 5H5M2 8H5" fill="none" stroke="#333" stroke-width="1" /><rect x="7.5" y="6.5" width="7" height="9" fill="#fff" stroke="#333" stroke-width="1.3"/><path d="M9 13L13 9" fill="none" stroke="#333" stroke-width="1" /><path d="M8 2H12V6" fill="none" stroke="#3030ff" stroke-width="1.5" /><path d="M10 5l2 3 2-3z" fill="#3030ff"/></g>
<g transform="translate(2539,442)" shape-rendering="crispEdges"><circle cx="8" cy="8" r="7" fill="#f0f0f0" stroke="#bbb" stroke-width="1" /><path d="M3 3L7 7M13 3L9 7M3 13L7 9M13 13L9 9M4 7H7V4M12 7H9V4M4 9H7V12M12 9H9V12" fill="none" stroke="#aaa" stroke-width="1" /></g>
<g transform="translate(2539,463)" shape-rendering="crispEdges"><path d="M1 5Q1 2 4 2H6L7 0H9L10 2Q13 2 13 5Q13 7 7 7Q1 7 1 5Z" fill="#fff" stroke="#333" stroke-width="1" /><circle cx="7" cy="4.5" r="1.5" fill="none" stroke="#333" stroke-width="1" /><path d="M4 14L13 6" fill="none" stroke="#000" stroke-width="1" /><path d="M13 5.5l-3 1 2 2z" fill="#000"/><rect x="3.5" y="12.5" width="2" height="2" fill="#fff" stroke="#2828ff"/><rect x="13.5" y="4.5" width="2" height="2" fill="#fff" stroke="#2828ff"/></g>
<g transform="translate(2539,490)" shape-rendering="crispEdges"><rect x="2.5" y="2.5" width="11" height="11" fill="none" stroke="#aaa" stroke-width="1"/><rect x="5.5" y="5.5" width="8" height="7" fill="none" stroke="#aaa" stroke-width="1"/><rect x="1" y="1" width="3" height="3" fill="#aaa"/><rect x="7" y="1" width="3" height="3" fill="#aaa"/><rect x="12" y="1" width="3" height="3" fill="#aaa"/><rect x="1" y="12" width="3" height="3" fill="#aaa"/><rect x="12" y="12" width="3" height="3" fill="#aaa"/><rect x="12" y="6" width="3" height="3" fill="#aaa"/></g>
<rect x="2538" y="190" width="17" height="1" fill="#a0a0a0" />
<rect x="2538" y="240" width="17" height="1" fill="#a0a0a0" />
<rect x="2538" y="290" width="17" height="1" fill="#a0a0a0" />
<rect x="2538" y="318" width="17" height="1" fill="#a0a0a0" />
<rect x="2538" y="434" width="17" height="1" fill="#a0a0a0" />
<rect x="2538" y="484" width="17" height="1" fill="#a0a0a0" />
<path d="M2558 182v4h-4z" fill="#000"/>
<path d="M2558 210v4h-4z" fill="#000"/>
<path d="M2558 232v4h-4z" fill="#000"/>
<path d="M2558 260v4h-4z" fill="#000"/>
<path d="M2558 282v4h-4z" fill="#000"/>
<path d="M2558 310v4h-4z" fill="#000"/>
<path d="M2558 338v4h-4z" fill="#000"/>
<path d="M2558 360v4h-4z" fill="#000"/>
<path d="M2558 382v4h-4z" fill="#000"/>
<path d="M2558 404v4h-4z" fill="#000"/>
<path d="M2558 427v4h-4z" fill="#000"/>
<path d="M2558 454v4h-4z" fill="#000"/>
<path d="M2558 476v4h-4z" fill="#000"/>
<rect x="0" y="1334" width="1" height="40" fill="#fbfcfe" />
<rect x="4" y="1336" width="2" height="2" fill="#a8a8a8"/><rect x="5" y="1337" width="1" height="1" fill="#ffffff"/><rect x="4" y="1340" width="2" height="2" fill="#a8a8a8"/><rect x="5" y="1341" width="1" height="1" fill="#ffffff"/><rect x="4" y="1344" width="2" height="2" fill="#a8a8a8"/><rect x="5" y="1345" width="1" height="1" fill="#ffffff"/><rect x="4" y="1348" width="2" height="2" fill="#a8a8a8"/><rect x="5" y="1349" width="1" height="1" fill="#ffffff"/><rect x="4" y="1352" width="2" height="2" fill="#a8a8a8"/><rect x="5" y="1353" width="1" height="1" fill="#ffffff"/><rect x="4" y="1356" width="2" height="2" fill="#a8a8a8"/><rect x="5" y="1357" width="1" height="1" fill="#ffffff"/><rect x="4" y="1360" width="2" height="2" fill="#a8a8a8"/><rect x="5" y="1361" width="1" height="1" fill="#ffffff"/><rect x="4" y="1364" width="2" height="2" fill="#a8a8a8"/><rect x="5" y="1365" width="1" height="1" fill="#ffffff"/><rect x="4" y="1368" width="2" height="2" fill="#a8a8a8"/><rect x="5" y="1369" width="1" height="1" fill="#ffffff"/>
<g transform="translate(12,1346)" shape-rendering="crispEdges"><path d="M3.5 3.5L12.5 12.5M12.5 3.5L3.5 12.5" fill="none" stroke="#b0b0b0" stroke-width="3.2" /></g>
<g transform="translate(36,1346)" shape-rendering="crispEdges"><rect x="0.5" y="1.5" width="15" height="13" fill="#fff" stroke="#3030a0" stroke-width="1.4"/><rect x="1" y="2" width="14" height="2.5" fill="#3030a0"/><rect x="2" y="2.5" width="1" height="1" fill="#fff"/><rect x="6" y="2.5" width="1" height="1" fill="#fff"/><rect x="10" y="2.5" width="1" height="1" fill="#fff"/><rect x="13" y="2.5" width="1" height="1" fill="#fff"/><path d="M2.5 6.5H5M6.5 6.5H9M10.5 6.5H13M2.5 8.5H5M6.5 8.5H9M10.5 8.5H13M2.5 10.5H5M6.5 10.5H9M10.5 10.5H13M2.5 12.5H5M6.5 12.5H9M10.5 12.5H13" fill="none" stroke="#333" stroke-width="1.2" /></g>
<rect x="0" y="1374" width="2560" height="1" fill="#a8a8a8" />
<text x="9" y="1391" font-family="Liberation Sans" font-size="13" fill="#000" stroke="#000" stroke-width="0.22" textLength="79" lengthAdjust="spacingAndGlyphs" >Select object(s)</text>
<text x="2081" y="1392" font-family="Liberation Sans" font-size="13" fill="#000" stroke="#000" stroke-width="0.22" textLength="29" lengthAdjust="spacingAndGlyphs" >SNAP</text>
<rect x="2113" y="1378" width="1" height="20" fill="#dcdcdc" />
<text x="2119" y="1392" font-family="Liberation Sans" font-size="13" fill="#000" stroke="#000" stroke-width="0.22" textLength="22" lengthAdjust="spacingAndGlyphs" >GEO</text>
<rect x="2144" y="1378" width="1" height="20" fill="#dcdcdc" />
<rect x="2163.5" y="1380.5" width="6" height="6" fill="#ffffff" stroke="#404040" stroke-width="1" />
<text x="2162.5" y="1396" font-family="Liberation Sans" font-size="10" fill="#404040" >X</text>
<rect x="2172.5" y="1379.5" width="72" height="18" fill="#ffffff" stroke="#000" stroke-width="1" />
<text x="2175" y="1393" font-family="Liberation Sans" font-size="13" fill="#000" stroke="#000" stroke-width="0.22" textLength="68" lengthAdjust="spacingAndGlyphs" >44,6125 mm</text>
<rect x="2259.5" y="1380.5" width="6" height="6" fill="#ffffff" stroke="#404040" stroke-width="1" />
<text x="2258.5" y="1396" font-family="Liberation Sans" font-size="10" fill="#404040" >Y</text>
<rect x="2268.5" y="1379.5" width="72" height="18" fill="#ffffff" stroke="#000" stroke-width="1" />
<text x="2271" y="1393" font-family="Liberation Sans" font-size="13" fill="#000" stroke="#000" stroke-width="0.22" textLength="68" lengthAdjust="spacingAndGlyphs" >-47,4008 mm</text>
<rect x="2355.5" y="1380.5" width="6" height="6" fill="#ffffff" stroke="#404040" stroke-width="1" />
<text x="2354.5" y="1396" font-family="Liberation Sans" font-size="10" fill="#404040" >Z</text>
<rect x="2364.5" y="1379.5" width="72" height="18" fill="#ffffff" stroke="#000" stroke-width="1" />
<text x="2367" y="1393" font-family="Liberation Sans" font-size="13" fill="#808080" stroke="#808080" stroke-width="0.22" textLength="27" lengthAdjust="spacingAndGlyphs" >0 mm</text>
<rect x="2444" y="1378" width="1" height="20" fill="#dcdcdc" />
<text x="2447" y="1391" font-family="Liberation Sans" font-size="13" fill="#000" stroke="#000" stroke-width="0.22" textLength="22" lengthAdjust="spacingAndGlyphs" >33%</text>
<rect x="2499" y="1378" width="1" height="20" fill="#dcdcdc" />
<text x="2502" y="1391" font-family="Liberation Sans" font-size="13" fill="#000" stroke="#000" stroke-width="0.22" textLength="28" lengthAdjust="spacingAndGlyphs" >21:58</text>
</svg></div></body></html>
